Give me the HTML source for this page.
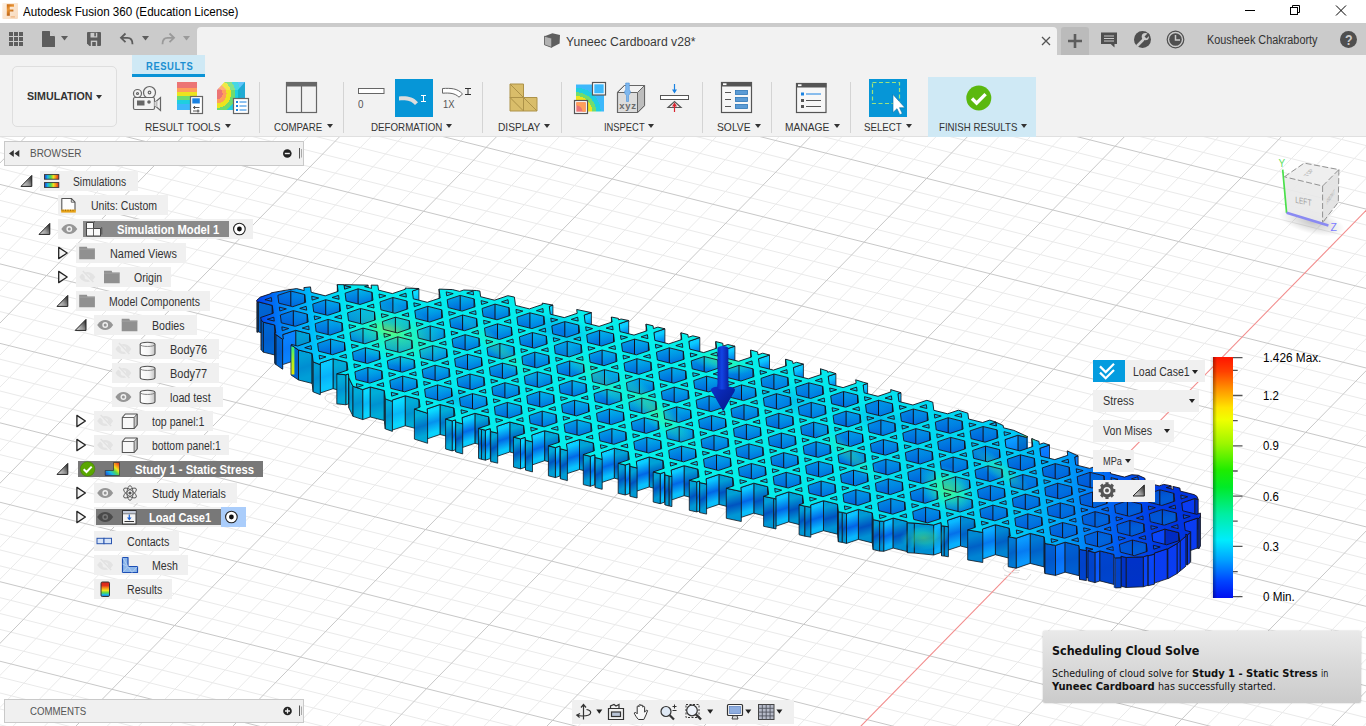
<!DOCTYPE html>
<html lang="en">
<head>
<meta charset="utf-8">
<title>Autodesk Fusion 360 (Education License)</title>
<style>
*{box-sizing:border-box;margin:0;padding:0}
html,body{width:1366px;height:726px;overflow:hidden;background:#fff}
body{font-family:"Liberation Sans",sans-serif;font-size:12px;color:#333;position:relative}
.t{position:absolute;white-space:nowrap;transform-origin:0 50%;display:block}
.abs{position:absolute}
svg{position:absolute;overflow:visible}
.caret{position:absolute;width:0;height:0;border-left:3px solid transparent;border-right:3px solid transparent;border-top:4px solid #333}
.sep{position:absolute;width:1px;background:#d4d4d4;top:82px;height:51px}
</style>
</head>
<body>

<div class="abs" style="left:0;top:0;width:1366px;height:23px;background:#fff"></div>
<svg style="left:2px;top:3px" width="17" height="16" viewBox="0 0 17 16"><defs><linearGradient id="fg" x1="0" y1="0" x2="1" y2="1"><stop offset="0" stop-color="#fdf0e2"/><stop offset="1" stop-color="#f8d9bb"/></linearGradient><linearGradient id="ff" x1="0" y1="0" x2=".4" y2="1"><stop offset="0" stop-color="#c4620c"/><stop offset=".45" stop-color="#eb9838"/><stop offset="1" stop-color="#b4580e"/></linearGradient></defs><rect x=".3" y="0" width="15.700" height="15.900" rx=".8" fill="url(#fg)"/><path d="M4.800 1.300h7.200v2.5H7.800v2.700h3.600v2.100H7.800v4.200H4.800z" fill="url(#ff)"/><path d="M8.600 13.300h4.300v1.200H8.600z" fill="#eeb27c"/></svg>
<span class="t" style="left:23.3px;top:4.2px;font-size:12.5px;line-height:16.5px;color:#000;transform:scaleX(0.9304);">Autodesk Fusion 360 (Education License)</span>
<svg style="left:1240px;top:0" width="126" height="23" viewBox="0 0 126 23" fill="none" stroke="#000" stroke-width="1"><path d="M5 10.5h10"/><rect x="50.5" y="7.5" width="7" height="7"/><path d="M52.5 7.5v-2h7v7h-2"/><path d="M96 5.5l10 10M106 5.5l-10 10"/></svg>
<div class="abs" style="left:0;top:23px;width:1366px;height:32px;background:#cbcbcb"></div>
<div class="abs" style="left:197px;top:26.5px;width:860px;height:29px;background:#f2f2f2;border-radius:4px 4px 0 0"></div>
<div class="abs" style="left:1061px;top:27px;width:28px;height:28px;background:#bbb;border-radius:3px 3px 0 0"></div>
<svg style="left:0;top:23px" width="200" height="32" viewBox="0 0 200 32">
<g fill="#5d5d5d">
<rect x="9" y="9" width="4" height="4"/><rect x="14" y="9" width="4" height="4"/><rect x="19" y="9" width="4" height="4"/>
<rect x="9" y="14" width="4" height="4"/><rect x="14" y="14" width="4" height="4"/><rect x="19" y="14" width="4" height="4"/>
<rect x="9" y="19" width="4" height="4"/><rect x="14" y="19" width="4" height="4"/><rect x="19" y="19" width="4" height="4"/>
<path d="M42 8.5a.5.5 0 0 1 .5-.5h7l5.5 5.5V23.5a.5.5 0 0 1-.5.5h-12a.5.5 0 0 1-.5-.5z"/>
<path d="M61 13h7l-3.5 4.5z"/>
<path d="M87 10a1 1 0 0 1 1-1h12a1 1 0 0 1 1 1v12a1 1 0 0 1-1 1H89.5L87 20.5z"/>
<path d="M142 13h7l-3.5 4.5z"/>
</g>
<path d="M50 8v5h5z" fill="#cbcbcb"/>
<rect x="90.5" y="9.800" width="6.800" height="4.700" fill="#cbcbcb"/><rect x="90.800" y="17.600" width="6.400" height="5.400" fill="#cbcbcb"/><rect x="92.200" y="19" width="3.600" height="4" fill="#5d5d5d"/><rect x="94.300" y="9.800" width="1.600" height="3.5" fill="#5d5d5d"/>
<path d="M125.5 10.5l-4.5 4.300 4.5 4.300M121.300 14.800h6.200c3 0 5 2.200 5 6.400" fill="none" stroke="#5d5d5d" stroke-width="1.800"/>
<path d="M169.5 10.5l4.5 4.300-4.5 4.300M173.700 14.800h-6.200c-3 0-5 2.200-5 6.400" fill="none" stroke="#9a9a9a" stroke-width="1.800"/>
<path d="M183 13h7l-3.5 4.5z" fill="#9a9a9a"/>
</svg>
<svg style="left:543px;top:32px" width="18" height="18" viewBox="543 32 18 18"><path d="M544.5 36.200L552.400 33.200L560 34.900L559.600 43.400L551.700 47.400L544.5 44.800z" fill="#5f5f5f"/><path d="M544.5 36.200L551.700 38.200V47.400L544.5 44.800z" fill="#b2b2b2" stroke="#5f5f5f" stroke-width=".8"/></svg>
<span class="t" style="left:566.0px;top:33.5px;font-size:12.5px;line-height:16.5px;color:#3a3a3a;transform:scaleX(0.9756);">Yuneec Cardboard v28*</span>
<svg style="left:1041px;top:36px" width="10" height="10" viewBox="0 0 10 10"><path d="M1 1l8 8M9 1l-8 8" stroke="#555" stroke-width="1.300" fill="none"/></svg>
<svg style="left:1061px;top:27px" width="28" height="28" viewBox="0 0 28 28"><path d="M14 7v14M7 14h14" stroke="#5d5d5d" stroke-width="2.600" fill="none"/></svg>
<svg style="left:1098px;top:28px" width="264" height="26" viewBox="0 0 264 26">
<path d="M3 4.5h16v11.5h-2.5v3.5l-3.800-3.5H3z" fill="#4f4f4f"/><path d="M6 8h10M6 10.5h10M6 13h10" stroke="#cbcbcb" stroke-width="1"/>
<circle cx="44.5" cy="11.5" r="8.5" fill="#4f4f4f"/><path d="M39.5 17.5l5.5-5.5" stroke="#cbcbcb" stroke-width="2.600" stroke-linecap="round"/><circle cx="47.300" cy="8.700" r="3.600" fill="#cbcbcb"/><path d="M46.5 8.5l3.5-3.5 2 2-3.5 3.5z" fill="#4f4f4f"/>
<circle cx="77.5" cy="11.5" r="8.300" fill="none" stroke="#4f4f4f" stroke-width="1.200"/><circle cx="77.5" cy="11.5" r="6.300" fill="#4f4f4f"/><path d="M77.5 7v5h4.5" stroke="#cbcbcb" stroke-width="1.5" fill="none"/>
<circle cx="250.5" cy="11.5" r="8.5" fill="#4f4f4f"/>
</svg>
<span class="t" style="left:1344.8px;top:31.0px;font-size:14px;line-height:18px;color:#cbcbcb;transform:scaleX(0.8887);font-weight:700;">?</span>
<span class="t" style="left:1207.0px;top:31.5px;font-size:12px;line-height:16px;color:#333;transform:scaleX(0.9052);">Kousheek Chakraborty</span>
<div class="abs" style="left:0;top:55px;width:1366px;height:82px;background:#f2f2f2;border-bottom:1px solid #e0e0e0"></div>
<div class="abs" style="left:12px;top:65.5px;width:105px;height:61px;border:1.5px solid #dedede;border-radius:5px;background:#f3f3f3"></div>
<span class="t" style="left:27.0px;top:88.8px;font-size:11.5px;line-height:15.5px;color:#333;transform:scaleX(0.9265);font-weight:700;">SIMULATION</span>
<div class="caret" style="left:95.5px;top:94.5px"></div>
<div class="abs" style="left:132px;top:55px;width:73px;height:22px;background:#cfe9f5;border-bottom:3.5px solid #0a93d6"></div>
<span class="t" style="left:145.5px;top:58.5px;font-size:11.5px;line-height:15.5px;color:#1b8fd1;transform:scaleX(0.8190);font-weight:700;letter-spacing:0.7px;">RESULTS</span>
<div class="abs" style="left:928px;top:77px;width:108px;height:60px;background:#cfe9f5"></div>
<div class="sep" style="left:258.5px"></div>
<div class="sep" style="left:342.5px"></div>
<div class="sep" style="left:482px"></div>
<div class="sep" style="left:561px"></div>
<div class="sep" style="left:701.5px"></div>
<div class="sep" style="left:770.5px"></div>
<div class="sep" style="left:849.5px"></div>
<span class="t" style="left:145.4px;top:119.7px;font-size:11px;line-height:15px;color:#333;transform:scaleX(0.9158);">RESULT TOOLS</span>
<div class="caret" style="left:224.6px;top:123.900px"></div>
<span class="t" style="left:274.3px;top:119.7px;font-size:11px;line-height:15px;color:#333;transform:scaleX(0.8777);">COMPARE</span>
<div class="caret" style="left:326.6px;top:123.900px"></div>
<span class="t" style="left:370.9px;top:119.7px;font-size:11px;line-height:15px;color:#333;transform:scaleX(0.8874);">DEFORMATION</span>
<div class="caret" style="left:446.2px;top:123.900px"></div>
<span class="t" style="left:498.1px;top:119.7px;font-size:11px;line-height:15px;color:#333;transform:scaleX(0.9266);">DISPLAY</span>
<div class="caret" style="left:544.3px;top:123.900px"></div>
<span class="t" style="left:604.4px;top:119.7px;font-size:11px;line-height:15px;color:#333;transform:scaleX(0.8516);">INSPECT</span>
<div class="caret" style="left:648.4px;top:123.900px"></div>
<span class="t" style="left:717.1px;top:119.7px;font-size:11px;line-height:15px;color:#333;transform:scaleX(0.9367);">SOLVE</span>
<div class="caret" style="left:754.6px;top:123.900px"></div>
<span class="t" style="left:785.4px;top:119.7px;font-size:11px;line-height:15px;color:#333;transform:scaleX(0.9292);">MANAGE</span>
<div class="caret" style="left:833.6px;top:123.900px"></div>
<span class="t" style="left:864.1px;top:119.7px;font-size:11px;line-height:15px;color:#333;transform:scaleX(0.8833);">SELECT</span>
<div class="caret" style="left:905.7px;top:123.900px"></div>
<span class="t" style="left:939.2px;top:119.7px;font-size:11px;line-height:15px;color:#333;transform:scaleX(0.8806);">FINISH RESULTS</span>
<div class="caret" style="left:1021.2px;top:123.900px"></div>
<svg style="left:0;top:0" width="1366" height="140" viewBox="0 0 1366 140">
<defs>
<linearGradient id="rb" x1="0" y1="0" x2="0" y2="1"><stop offset="0" stop-color="#ec7474"/><stop offset=".2" stop-color="#ec7474"/><stop offset=".2" stop-color="#ff9f5a"/><stop offset=".36" stop-color="#ff9f5a"/><stop offset=".36" stop-color="#ede41e"/><stop offset=".5" stop-color="#ede41e"/><stop offset=".5" stop-color="#6fdc6f"/><stop offset=".64" stop-color="#6fdc6f"/><stop offset=".64" stop-color="#1fcfe0"/><stop offset=".8" stop-color="#1fcfe0"/><stop offset=".8" stop-color="#3db8fb"/><stop offset="1" stop-color="#3db8fb"/></linearGradient>
<radialGradient id="rc" cx="0" cy=".42" r="1" gradientUnits="objectBoundingBox"><stop offset="0" stop-color="#ec7474"/><stop offset=".2" stop-color="#ec7474"/><stop offset=".2" stop-color="#ff9f5a"/><stop offset=".34" stop-color="#ff9f5a"/><stop offset=".34" stop-color="#ede41e"/><stop offset=".5" stop-color="#ede41e"/><stop offset=".5" stop-color="#6fdc6f"/><stop offset=".66" stop-color="#6fdc6f"/><stop offset=".66" stop-color="#1fcfe0"/><stop offset=".84" stop-color="#1fcfe0"/><stop offset=".84" stop-color="#3db8fb"/><stop offset="1" stop-color="#3db8fb"/></radialGradient>
<radialGradient id="rd" cx="0" cy="1" r="1.050" gradientUnits="objectBoundingBox"><stop offset="0" stop-color="#ec7474"/><stop offset=".3" stop-color="#ec7474"/><stop offset=".3" stop-color="#ff9f5a"/><stop offset=".42" stop-color="#ff9f5a"/><stop offset=".42" stop-color="#ede41e"/><stop offset=".55" stop-color="#ede41e"/><stop offset=".55" stop-color="#6fdc6f"/><stop offset=".68" stop-color="#6fdc6f"/><stop offset=".68" stop-color="#1fcfe0"/><stop offset=".84" stop-color="#1fcfe0"/><stop offset=".84" stop-color="#3db8fb"/><stop offset="1" stop-color="#3db8fb"/></radialGradient>
</defs>
<g fill="none" stroke="#666" stroke-width="1.200">
<circle cx="137.5" cy="93.5" r="4"/><circle cx="149.5" cy="92.5" r="6"/><circle cx="137.5" cy="93.5" r="1"/><circle cx="149.5" cy="92.5" r="1.300"/>
<rect x="133.5" y="97.5" width="21" height="12" rx="1.5" fill="#f2f2f2"/>
<path d="M154.5 101.5h1.5l4.5-4v13l-4.5-4h-1.5" fill="#f2f2f2"/>
</g><rect x="137" y="100.5" width="7.5" height="5" fill="#666"/><circle cx="149" cy="102" r="1.800" fill="#666"/><rect x="155.5" y="101" width="2" height="6" fill="#bbb"/>
<rect x="177" y="82" width="20" height="28" fill="url(#rb)"/>
<rect x="190.5" y="96.5" width="12" height="17" fill="#fff" stroke="#666" stroke-width="1.200"/>
<rect x="192.300" y="98.300" width="7.5" height="5.200" fill="#1a82e2"/>
<path d="M193 107.5h6.5M193 111h6.5" stroke="#555" stroke-width="1"/><path d="M194.5 106v3M198 109.5v3" stroke="#555" stroke-width="1.200"/>
<path d="M217 90l7.5-8h20.5v28h-28z" fill="url(#rc)"/>
<path d="M217 90l7.5-8h20.5l-7 8z" fill="#fff" fill-opacity=".18"/>
<path d="M238 90l7-8v20l-7 8z" fill="#0a9fb5" fill-opacity=".55"/>
<rect x="233.5" y="98.5" width="15" height="15" fill="#fff" stroke="#666" stroke-width="1.200"/>
<path d="M236 102h2M236 106h2M236 110h2" stroke="#1a82e2" stroke-width="1.800"/><path d="M239.5 102h7M239.5 106h7M239.5 110h7" stroke="#1a82e2" stroke-width="1"/>
<rect x="286.5" y="82.5" width="30" height="30" fill="#f2f2f2" stroke="#666" stroke-width="1.200"/><rect x="286" y="82" width="31" height="4.5" fill="#666"/><path d="M301.5 86v27" stroke="#666" stroke-width="1.200"/>
<rect x="358.5" y="88.5" width="25.5" height="5" fill="#fff" stroke="#666" stroke-width="1"/>
<rect x="395" y="79" width="38" height="38" fill="#0696d7"/>
<path d="M399 96.5c8-.6 14 .2 19 5.800l-3 2.600c-4-4.5-9-5-16-4.5z" fill="#ddd"/>
<path d="M421 95.5h5M421 101.5h5M423.5 95.5v6" stroke="#fff" stroke-width="1" fill="none"/>
<path d="M442.5 88.5c8-.4 15-.4 20 5.5l-3.5 3.200c-4-4-9-4.5-16.5-4z" fill="#fff" stroke="#666" stroke-width="1"/>
<path d="M465 88.5h6M465 94.5h6M468 88.5v6" stroke="#333" stroke-width="1" fill="none"/>
<path d="M510 84h13.5v13.5H537v13.5H510z" fill="#d9bd6a" stroke="#ad9248" stroke-width="1"/>
<path d="M510 97.5h13.5v13.5M510 84l13.5 13.5 13.5 13.5M510 97.5l13.5 13.5" fill="none" stroke="#ad9248" stroke-width="1"/>
<rect x="576" y="84.5" width="28" height="27" fill="url(#rd)"/>
<rect x="592.5" y="82.5" width="13" height="12.5" fill="#fff" stroke="#555" stroke-width="1.200"/><rect x="594.300" y="84.300" width="9.400" height="9" fill="#3db8fb"/>
<rect x="574.5" y="100.5" width="13" height="13" fill="#fff" stroke="#555" stroke-width="1.200"/><rect x="576.300" y="102.300" width="9.400" height="9.400" fill="#ec7474"/><path d="M576.300 105.5c3.5 0 6.200 2.700 6.200 6.200h3.200v-9.400h-9.400z" fill="#ff9f5a"/>
<path d="M617.5 92.5l7-7h20v20l-7 7h-20z" fill="#dcdcdc" stroke="#666" stroke-width="1.200"/><path d="M637.5 92.5l7-7v20l-7 7z" fill="#bdbdbd" stroke="#666" stroke-width="1"/><path d="M617.5 92.5l7-7h20l-7 7z" fill="#f2f2f2" stroke="#666" stroke-width="1"/>
<path d="M625.700 83h3.600v7l1 1v2l-1.800 2.5v6h-2v-6l-1.800-2.5v-2l1-1z" fill="#7fb8ee" stroke="#4a90d8" stroke-width=".6"/>
<text x="619.300" y="109.300" font-family="Liberation Sans,sans-serif" font-size="9.5" font-weight="700" fill="#6a6a6a" letter-spacing=".7">xyz</text>
<rect x="660.5" y="95.5" width="28" height="4" fill="#fff" stroke="#555" stroke-width="1"/>
<path d="M674.5 84v8" stroke="#1a82e2" stroke-width="1.200"/><path d="M672 89.5h5l-2.5 4z" fill="#1a82e2"/>
<path d="M668 107.5l6.5-6 6.5 6z" fill="none" stroke="#555" stroke-width="1.200"/>
<path d="M674.5 112v-8" stroke="#d9232e" stroke-width="1.200"/><path d="M672 106.5h5l-2.5-4z" fill="#d9232e"/>
<rect x="721.5" y="82.5" width="30" height="30" fill="#f7f7f7" stroke="#555" stroke-width="1.200"/><rect x="721" y="82" width="31" height="4.5" fill="#555"/><rect x="723" y="83.300" width="3.5" height="1.800" fill="#fff"/>
<path d="M725 92.5h6M725 99.5h6M725 106.5h6" stroke="#555" stroke-width="1"/>
<rect x="735.5" y="90.5" width="12" height="4" fill="#5b9bd5" stroke="#2e75b6" stroke-width=".8"/><rect x="735.5" y="97.5" width="12" height="4" fill="#5b9bd5" stroke="#2e75b6" stroke-width=".8"/><rect x="735.5" y="104.5" width="12" height="4" fill="#5b9bd5" stroke="#2e75b6" stroke-width=".8"/>
<rect x="796.5" y="83.5" width="29.5" height="29" fill="#f7f7f7" stroke="#555" stroke-width="1.200"/><rect x="796" y="83" width="30.5" height="4.5" fill="#555"/><rect x="798" y="84.300" width="3.5" height="1.800" fill="#fff"/>
<rect x="801" y="92.5" width="3" height="3" fill="#1a82e2"/><rect x="801" y="99" width="3" height="3" fill="#555"/><rect x="801" y="105" width="3" height="3" fill="#555"/>
<path d="M806 94h15" stroke="#1a82e2" stroke-width="1"/><path d="M806 100.5h15M806 106.5h15" stroke="#555" stroke-width="1"/>
<rect x="869" y="79" width="38" height="38" fill="#0696d7"/><rect x="872.5" y="82.5" width="27" height="21" fill="none" stroke="#9ee37d" stroke-width="1.200" stroke-dasharray="4 2.5"/>
<path d="M893 94.5v18l4-3.800 2.800 6 2.5-1.200-2.800-5.800h5.5z" fill="#fff" stroke="#0a6fa3" stroke-width=".6"/>
<circle cx="978.800" cy="98" r="12.5" fill="#5bb80f"/><path d="M972 98.5l4.600 4.600 9-9" fill="none" stroke="#fff" stroke-width="3.400"/>
</svg>
<span class="t" style="left:358.0px;top:97.0px;font-size:10.5px;line-height:14.5px;color:#555;transform:scaleX(0.9418);">0</span>
<span class="t" style="left:442.5px;top:97.0px;font-size:10.5px;line-height:14.5px;color:#555;transform:scaleX(0.8954);">1X</span>
<svg style="left:0;top:137px;overflow:hidden" width="1366" height="589" viewBox="0 137 1366 589">
<rect x="0" y="137" width="1366" height="589" fill="#fff"/>
<path d="M215.7 -857.4L2987.3 -162.8M203.2 -844.7L2974.8 -150.0M190.7 -831.9L2962.3 -137.3M178.2 -819.2L2949.8 -124.5M153.2 -793.7L2924.9 -99.0M140.7 -780.9L2912.4 -86.3M128.2 -768.2L2899.9 -73.5M115.7 -755.4L2887.4 -60.8M90.7 -730.0L2862.4 -35.3M78.2 -717.2L2849.9 -22.5M65.7 -704.5L2837.5 -9.8M53.2 -691.7L2825.0 3.0M28.2 -666.2L2800.0 28.5M15.7 -653.5L2787.5 41.2M3.2 -640.7L2775.0 54.0M-9.3 -628.0L2762.5 66.7M-34.3 -602.5L2737.6 92.2M-46.8 -589.8L2725.1 105.0M-59.3 -577.0L2712.6 117.7M-71.8 -564.3L2700.1 130.5M-96.8 -538.8L2675.1 156.0M-109.3 -526.0L2662.7 168.8M-121.8 -513.3L2650.2 181.5M-134.3 -500.5L2637.7 194.3M-159.3 -475.0L2612.7 219.8M-171.8 -462.3L2600.2 232.5M-184.3 -449.5L2587.7 245.3M-196.8 -436.8L2575.2 258.0M-221.8 -411.3L2550.3 283.5M-234.3 -398.5L2537.8 296.3M-246.8 -385.8L2525.3 309.1M-259.3 -373.1L2512.8 321.8M-284.4 -347.6L2487.8 347.3M-296.9 -334.8L2475.3 360.1M-309.4 -322.1L2462.8 372.8M-321.9 -309.3L2450.3 385.6M-346.9 -283.8L2425.4 411.1M-359.4 -271.1L2412.9 423.9M-371.9 -258.3L2400.4 436.6M-384.4 -245.6L2387.9 449.4M-409.4 -220.1L2362.9 474.9M-421.9 -207.3L2350.4 487.6M-434.4 -194.6L2337.9 500.4M-446.9 -181.8L2325.4 513.2M-471.9 -156.3L2300.5 538.7M-484.4 -143.5L2288.0 551.4M-496.9 -130.8L2275.5 564.2M-509.4 -118.0L2263.0 576.9M-534.5 -92.5L2238.0 602.5M-547.0 -79.8L2225.5 615.2M-559.5 -67.0L2213.0 628.0M-572.0 -54.3L2200.5 640.7M-597.0 -28.8L2175.5 666.3M-609.5 -16.0L2163.0 679.0M-622.0 -3.3L2150.5 691.8M-634.5 9.5L2138.1 704.5M-659.5 35.0L2113.1 730.1M-672.0 47.7L2100.6 742.8M-684.5 60.5L2088.1 755.6M-697.1 73.2L2075.6 768.3M-722.1 98.8L2050.6 793.9M-734.6 111.5L2038.1 806.6M-747.1 124.3L2025.6 819.4M-759.6 137.0L2013.1 832.1M-784.6 162.5L1988.1 857.7M-797.1 175.3L1975.6 870.4M-809.6 188.0L1963.1 883.2M-822.1 200.8L1950.6 896.0M-847.2 226.3L1925.6 921.5M-859.7 239.1L1913.1 934.2M-872.2 251.8L1900.6 947.0M-884.7 264.6L1888.1 959.8M-909.7 290.1L1863.2 985.3M-922.2 302.8L1850.7 998.1M-934.7 315.6L1838.2 1010.8M-947.3 328.4L1825.7 1023.6M-972.3 353.9L1800.7 1049.1M-984.8 366.6L1788.2 1061.9M-997.3 379.4L1775.7 1074.6M-1009.8 392.1L1763.2 1087.4M-1034.8 417.7L1738.2 1112.9M-1047.3 430.4L1725.7 1125.7M-1059.9 443.2L1713.2 1138.5M-1072.4 455.9L1700.7 1151.2M-1097.4 481.5L1675.7 1176.8M-1109.9 494.2L1663.2 1189.5M-1122.4 507.0L1650.7 1202.3M-1134.9 519.7L1638.2 1215.1M-1160.0 545.3L1613.2 1240.6M-1172.5 558.0L1600.7 1253.3M-1185.0 570.8L1588.2 1266.1M-1197.5 583.5L1575.7 1278.9M-1222.5 609.1L1550.7 1304.4M-1235.1 621.8L1538.2 1317.2M-1247.6 634.6L1525.7 1330.0M-1260.1 647.3L1513.2 1342.7M-1285.1 672.9L1488.2 1368.3M-1297.6 685.6L1475.7 1381.0M-1310.1 698.4L1463.2 1393.8M-1322.7 711.1L1450.7 1406.6M-1347.7 736.7L1425.7 1432.1M-1360.2 749.4L1413.2 1444.9M-1372.7 762.2L1400.7 1457.6M-1385.2 775.0L1388.2 1470.4M-1410.3 800.5L1363.2 1495.9M-1422.8 813.2L1350.7 1508.7M-1435.3 826.0L1338.2 1521.5M-1447.8 838.8L1325.7 1534.2M-1472.9 864.3L1300.6 1559.8M-1485.4 877.1L1288.1 1572.6M-1497.9 889.8L1275.6 1585.3M-1510.4 902.6L1263.1 1598.1M380.3 -673.2L-1120.5 857.2M405.5 -666.9L-1095.3 863.6M430.7 -660.6L-1070.0 869.9M455.9 -654.3L-1044.8 876.2M506.3 -641.7L-994.4 888.9M531.5 -635.4L-969.2 895.2M556.7 -629.0L-944.0 901.5M581.9 -622.7L-918.8 907.8M632.3 -610.1L-868.4 920.5M657.5 -603.8L-843.2 926.8M682.6 -597.5L-817.9 933.1M707.8 -591.2L-792.7 939.4M758.2 -578.5L-742.3 952.1M783.4 -572.2L-717.1 958.4M808.6 -565.9L-691.9 964.7M833.8 -559.6L-666.7 971.0M884.2 -547.0L-616.3 983.7M909.4 -540.6L-591.1 990.0M934.6 -534.3L-565.8 996.3M959.8 -528.0L-540.6 1002.6M1010.2 -515.4L-490.2 1015.3M1035.4 -509.1L-465.0 1021.6M1060.6 -502.8L-439.8 1027.9M1085.8 -496.4L-414.6 1034.3M1136.2 -483.8L-364.2 1046.9M1161.4 -477.5L-338.9 1053.2M1186.6 -471.2L-313.7 1059.5M1211.8 -464.9L-288.5 1065.9M1262.2 -452.2L-238.1 1078.5M1287.3 -445.9L-212.9 1084.8M1312.5 -439.6L-187.7 1091.2M1337.7 -433.3L-162.5 1097.5M1388.1 -420.7L-112.0 1110.1M1413.3 -414.3L-86.8 1116.4M1438.5 -408.0L-61.6 1122.8M1463.7 -401.7L-36.4 1129.1M1514.1 -389.1L14.0 1141.7M1539.3 -382.8L39.2 1148.1M1564.5 -376.5L64.5 1154.4M1589.7 -370.1L89.7 1160.7M1640.1 -357.5L140.1 1173.3M1665.3 -351.2L165.3 1179.7M1690.5 -344.9L190.5 1186.0M1715.7 -338.6L215.7 1192.3M1766.1 -325.9L266.2 1205.0M1791.3 -319.6L291.4 1211.3M1816.5 -313.3L316.6 1217.6M1841.7 -307.0L341.8 1223.9M1892.1 -294.4L392.2 1236.6M1917.3 -288.0L417.5 1242.9M1942.5 -281.7L442.7 1249.2M1967.7 -275.4L467.9 1255.5M2018.1 -262.8L518.3 1268.2M2043.3 -256.5L543.5 1274.5M2068.5 -250.1L568.7 1280.8M2093.7 -243.8L594.0 1287.2M2144.1 -231.2L644.4 1299.8M2169.3 -224.9L669.6 1306.1M2194.5 -218.6L694.8 1312.4M2219.7 -212.2L720.0 1318.8M2270.1 -199.6L770.5 1331.4M2295.3 -193.3L795.7 1337.7M2320.5 -187.0L820.9 1344.1M2345.7 -180.7L846.1 1350.4M2396.1 -168.0L896.5 1363.0M2421.3 -161.7L921.8 1369.3M2446.5 -155.4L947.0 1375.7M2471.7 -149.1L972.2 1382.0M2522.1 -136.5L1022.6 1394.6M2547.3 -130.1L1047.8 1401.0M2572.5 -123.8L1073.1 1407.3M2597.7 -117.5L1098.3 1413.6M2648.1 -104.9L1148.7 1426.3M2673.3 -98.6L1173.9 1432.6M2698.5 -92.2L1199.1 1438.9M2723.7 -85.9L1224.4 1445.2M2774.1 -73.3L1274.8 1457.9M2799.3 -67.0L1300.0 1464.2M2824.5 -60.7L1325.2 1470.5M2849.7 -54.3L1350.4 1476.8M2900.1 -41.7L1400.9 1489.5M2925.3 -35.4L1426.1 1495.8M2950.5 -29.1L1451.3 1502.1M2975.7 -22.8L1476.5 1508.5M3026.1 -10.1L1527.0 1521.1M3051.3 -3.8L1552.2 1527.4M3076.5 2.5L1577.4 1533.8M3101.7 8.8L1602.6 1540.1M3152.1 21.5L1653.1 1552.7M3177.3 27.8L1678.3 1559.1M3202.5 34.1L1703.5 1565.4M3227.8 40.4L1728.7 1571.7M3278.2 53.0L1779.2 1584.3M3303.4 59.4L1804.4 1590.7M3328.6 65.7L1829.6 1597.0M3353.8 72.0L1854.8 1603.3" stroke="#eaeaea" stroke-width="1" fill="none"/>
<path d="M228.2 -870.1L2999.8 -175.5M165.7 -806.4L2937.3 -111.8M103.2 -742.7L2874.9 -48.0M40.7 -679.0L2812.5 15.7M-21.8 -615.3L2750.1 79.5M-84.3 -551.5L2687.6 143.3M-146.8 -487.8L2625.2 207.0M-209.3 -424.0L2562.7 270.8M-271.8 -360.3L2500.3 334.6M-334.4 -296.6L2437.9 398.3M-396.9 -232.8L2375.4 462.1M-459.4 -169.1L2312.9 525.9M-521.9 -105.3L2250.5 589.7M-584.5 -41.5L2188.0 653.5M-647.0 22.2L2125.6 717.3M-709.6 86.0L2063.1 781.1M-772.1 149.8L2000.6 844.9M-834.7 213.6L1938.1 908.7M-897.2 277.3L1875.7 972.5M-959.8 341.1L1813.2 1036.3M-1022.3 404.9L1750.7 1100.2M-1084.9 468.7L1688.2 1164.0M-1147.5 532.5L1625.7 1227.8M-1210.0 596.3L1563.2 1291.6M-1272.6 660.1L1500.7 1355.5M-1335.2 723.9L1438.2 1419.3M-1397.8 787.7L1375.7 1483.2M-1460.3 851.5L1313.1 1547.0M355.1 -679.6L-1145.7 850.9M481.1 -648.0L-1019.6 882.5M607.1 -616.4L-893.6 914.1M733.0 -584.8L-767.5 945.8M859.0 -553.3L-641.5 977.4M985.0 -521.7L-515.4 1009.0M1111.0 -490.1L-389.4 1040.6M1237.0 -458.5L-263.3 1072.2M1362.9 -427.0L-137.2 1103.8M1488.9 -395.4L-11.2 1135.4M1614.9 -363.8L114.9 1167.0M1740.9 -332.2L241.0 1198.6M1992.9 -269.1L493.1 1261.9M2118.9 -237.5L619.2 1293.5M2244.9 -205.9L745.2 1325.1M2370.9 -174.4L871.3 1356.7M2496.9 -142.8L997.4 1388.3M2622.9 -111.2L1123.5 1419.9M2748.9 -79.6L1249.6 1451.6M2874.9 -48.0L1375.7 1483.2M3000.9 -16.4L1501.8 1514.8M3126.9 15.1L1627.8 1546.4M3253.0 46.7L1753.9 1578.0" stroke="#c8c8c8" stroke-width="1" fill="none"/>
<path d="M1866.9 -300.7L367.0 1230.2" stroke="#f28c8c" stroke-width="1.100" fill="none"/>
<g fill="none" stroke="#dcdcdc" stroke-width="1"><path d="M341 405c-9-1-16-3.5-16-7s6-5.5 14-5.5M343 400c-5-.5-8-1.5-8-3s2.5-2.300 6-2.300M333 405l6 3"/>
<path d="M1010 563c-6 1.5-8 4-6 6.5s8 4 15 3M1016 566c-3 .8-4 2-3 3.200s4 1.5 7 1.200M1004 575l22 5 5-6"/></g>
<defs>
<linearGradient id="mTop" gradientUnits="userSpaceOnUse" x1="257" y1="0" x2="1200" y2="0"><stop offset="0.000" stop-color="#003cec"/><stop offset="0.019" stop-color="#0070f6"/><stop offset="0.040" stop-color="#00a0fa"/><stop offset="0.067" stop-color="#00cdfa"/><stop offset="0.101" stop-color="#04eaf0"/><stop offset="0.491" stop-color="#06f0ea"/><stop offset="0.639" stop-color="#04e6ee"/><stop offset="0.745" stop-color="#02d6f2"/><stop offset="0.809" stop-color="#00c8f6"/><stop offset="0.852" stop-color="#00a8fa"/><stop offset="0.885" stop-color="#007cf8"/><stop offset="0.917" stop-color="#0056f0"/><stop offset="0.952" stop-color="#003ce6"/><stop offset="1.000" stop-color="#002edc"/></linearGradient>
<linearGradient id="mHole" gradientUnits="userSpaceOnUse" x1="257" y1="0" x2="1200" y2="0"><stop offset="0.000" stop-color="#0038d7"/><stop offset="0.030" stop-color="#0078e8"/><stop offset="0.072" stop-color="#00b9ee"/><stop offset="0.109" stop-color="#00cdec"/><stop offset="0.385" stop-color="#00c8ec"/><stop offset="0.533" stop-color="#00b6ea"/><stop offset="0.682" stop-color="#009ce6"/><stop offset="0.799" stop-color="#0086e4"/><stop offset="0.846" stop-color="#006ce0"/><stop offset="0.889" stop-color="#004ed8"/><stop offset="0.926" stop-color="#0034cc"/><stop offset="1.000" stop-color="#0026bc"/></linearGradient>
<linearGradient id="mFace" x1="0" y1="0" x2=".3" y2="1"><stop offset="0" stop-color="#0078e2" stop-opacity=".2"/><stop offset="1" stop-color="#0058d8" stop-opacity=".62"/></linearGradient><linearGradient id="mFaceR" x1="0" y1="0" x2=".3" y2="1"><stop offset="0" stop-color="#00c0f0" stop-opacity="0"/><stop offset="1" stop-color="#0064de" stop-opacity=".5"/></linearGradient>
<linearGradient id="wa0" x1="0" y1="0" x2=".12" y2="1"><stop offset=".22" stop-color="#0065d2"/><stop offset=".56" stop-color="#005ece"/><stop offset=".86" stop-color="#0064d1"/></linearGradient>
<linearGradient id="wb0" x1="0" y1="0" x2=".12" y2="1"><stop offset=".22" stop-color="#0a83ff"/><stop offset=".56" stop-color="#0879f9"/><stop offset=".86" stop-color="#0a82fe"/></linearGradient>
<linearGradient id="wa1" x1="0" y1="0" x2=".12" y2="1"><stop offset=".22" stop-color="#00a0d7"/><stop offset=".56" stop-color="#008dd1"/><stop offset=".86" stop-color="#009ed7"/></linearGradient>
<linearGradient id="wb1" x1="0" y1="0" x2=".12" y2="1"><stop offset=".22" stop-color="#0acaff"/><stop offset=".56" stop-color="#08b1f9"/><stop offset=".86" stop-color="#0ac7fe"/></linearGradient>
<linearGradient id="wa2" x1="0" y1="0" x2=".12" y2="1"><stop offset=".22" stop-color="#00acd8"/><stop offset=".56" stop-color="#0093d1"/><stop offset=".86" stop-color="#00a9d7"/></linearGradient>
<linearGradient id="wb2" x1="0" y1="0" x2=".12" y2="1"><stop offset=".22" stop-color="#0ad9ff"/><stop offset=".56" stop-color="#08b8f8"/><stop offset=".86" stop-color="#0ad5fe"/></linearGradient>
<linearGradient id="wa3" x1="0" y1="0" x2=".12" y2="1"><stop offset=".22" stop-color="#00aed8"/><stop offset=".56" stop-color="#0092d0"/><stop offset=".86" stop-color="#00abd7"/></linearGradient>
<linearGradient id="wb3" x1="0" y1="0" x2=".12" y2="1"><stop offset=".22" stop-color="#0adbff"/><stop offset=".56" stop-color="#08b6f7"/><stop offset=".86" stop-color="#0ad7fe"/></linearGradient>
<linearGradient id="wa4" x1="0" y1="0" x2=".12" y2="1"><stop offset=".22" stop-color="#00afd8"/><stop offset=".56" stop-color="#0075c8"/><stop offset=".86" stop-color="#00a8d6"/></linearGradient>
<linearGradient id="wb4" x1="0" y1="0" x2=".12" y2="1"><stop offset=".22" stop-color="#0adcff"/><stop offset=".56" stop-color="#0592ee"/><stop offset=".86" stop-color="#09d3fd"/></linearGradient>
<linearGradient id="wa5" x1="0" y1="0" x2=".12" y2="1"><stop offset=".22" stop-color="#00acd7"/><stop offset=".56" stop-color="#0056c0"/><stop offset=".86" stop-color="#00a2d5"/></linearGradient>
<linearGradient id="wb5" x1="0" y1="0" x2=".12" y2="1"><stop offset=".22" stop-color="#0ad8ff"/><stop offset=".56" stop-color="#026ae6"/><stop offset=".86" stop-color="#09cbfc"/></linearGradient>
<linearGradient id="wa6" x1="0" y1="0" x2=".12" y2="1"><stop offset=".22" stop-color="#00a9d7"/><stop offset=".56" stop-color="#0056c0"/><stop offset=".86" stop-color="#009fd4"/></linearGradient>
<linearGradient id="wb6" x1="0" y1="0" x2=".12" y2="1"><stop offset=".22" stop-color="#0ad5ff"/><stop offset=".56" stop-color="#0269e6"/><stop offset=".86" stop-color="#09c8fc"/></linearGradient>
<linearGradient id="wa7" x1="0" y1="0" x2=".12" y2="1"><stop offset=".22" stop-color="#00a7d7"/><stop offset=".56" stop-color="#0055c0"/><stop offset=".86" stop-color="#009dd4"/></linearGradient>
<linearGradient id="wb7" x1="0" y1="0" x2=".12" y2="1"><stop offset=".22" stop-color="#0ad2ff"/><stop offset=".56" stop-color="#0268e6"/><stop offset=".86" stop-color="#09c6fc"/></linearGradient>
<linearGradient id="wa8" x1="0" y1="0" x2=".12" y2="1"><stop offset=".22" stop-color="#00a4d6"/><stop offset=".56" stop-color="#0054c0"/><stop offset=".86" stop-color="#009bd4"/></linearGradient>
<linearGradient id="wb8" x1="0" y1="0" x2=".12" y2="1"><stop offset=".22" stop-color="#0acfff"/><stop offset=".56" stop-color="#0268e6"/><stop offset=".86" stop-color="#09c3fc"/></linearGradient>
<linearGradient id="wa9" x1="0" y1="0" x2=".12" y2="1"><stop offset=".22" stop-color="#00a3d6"/><stop offset=".56" stop-color="#0054c0"/><stop offset=".86" stop-color="#0099d4"/></linearGradient>
<linearGradient id="wb9" x1="0" y1="0" x2=".12" y2="1"><stop offset=".22" stop-color="#0aceff"/><stop offset=".56" stop-color="#0267e6"/><stop offset=".86" stop-color="#09c1fc"/></linearGradient>
<linearGradient id="wa10" x1="0" y1="0" x2=".12" y2="1"><stop offset=".22" stop-color="#00a2d6"/><stop offset=".56" stop-color="#0054c0"/><stop offset=".86" stop-color="#0099d4"/></linearGradient>
<linearGradient id="wb10" x1="0" y1="0" x2=".12" y2="1"><stop offset=".22" stop-color="#0accff"/><stop offset=".56" stop-color="#0267e6"/><stop offset=".86" stop-color="#09c0fc"/></linearGradient>
<linearGradient id="wa11" x1="0" y1="0" x2=".12" y2="1"><stop offset=".22" stop-color="#00a1d6"/><stop offset=".56" stop-color="#0053c0"/><stop offset=".86" stop-color="#0098d4"/></linearGradient>
<linearGradient id="wb11" x1="0" y1="0" x2=".12" y2="1"><stop offset=".22" stop-color="#0acbff"/><stop offset=".56" stop-color="#0267e6"/><stop offset=".86" stop-color="#09bffc"/></linearGradient>
<linearGradient id="wa12" x1="0" y1="0" x2=".12" y2="1"><stop offset=".22" stop-color="#00a0d6"/><stop offset=".56" stop-color="#0053c0"/><stop offset=".86" stop-color="#0097d4"/></linearGradient>
<linearGradient id="wb12" x1="0" y1="0" x2=".12" y2="1"><stop offset=".22" stop-color="#0acaff"/><stop offset=".56" stop-color="#0266e6"/><stop offset=".86" stop-color="#09befc"/></linearGradient>
<linearGradient id="wa13" x1="0" y1="0" x2=".12" y2="1"><stop offset=".22" stop-color="#009fd6"/><stop offset=".56" stop-color="#0053c0"/><stop offset=".86" stop-color="#0096d4"/></linearGradient>
<linearGradient id="wb13" x1="0" y1="0" x2=".12" y2="1"><stop offset=".22" stop-color="#0ac8ff"/><stop offset=".56" stop-color="#0266e6"/><stop offset=".86" stop-color="#09bdfc"/></linearGradient>
<linearGradient id="wa14" x1="0" y1="0" x2=".12" y2="1"><stop offset=".22" stop-color="#009dd6"/><stop offset=".56" stop-color="#0052c0"/><stop offset=".86" stop-color="#0094d3"/></linearGradient>
<linearGradient id="wb14" x1="0" y1="0" x2=".12" y2="1"><stop offset=".22" stop-color="#0ac6ff"/><stop offset=".56" stop-color="#0265e6"/><stop offset=".86" stop-color="#09bafc"/></linearGradient>
<linearGradient id="wa15" x1="0" y1="0" x2=".12" y2="1"><stop offset=".22" stop-color="#009ad5"/><stop offset=".56" stop-color="#0052c0"/><stop offset=".86" stop-color="#0091d3"/></linearGradient>
<linearGradient id="wb15" x1="0" y1="0" x2=".12" y2="1"><stop offset=".22" stop-color="#0ac3ff"/><stop offset=".56" stop-color="#0264e6"/><stop offset=".86" stop-color="#09b7fc"/></linearGradient>
<linearGradient id="wa16" x1="0" y1="0" x2=".12" y2="1"><stop offset=".22" stop-color="#0097d5"/><stop offset=".56" stop-color="#0052c0"/><stop offset=".86" stop-color="#008fd2"/></linearGradient>
<linearGradient id="wb16" x1="0" y1="0" x2=".12" y2="1"><stop offset=".22" stop-color="#0abfff"/><stop offset=".56" stop-color="#0365e6"/><stop offset=".86" stop-color="#09b5fc"/></linearGradient>
<linearGradient id="wa17" x1="0" y1="0" x2=".12" y2="1"><stop offset=".22" stop-color="#0092d4"/><stop offset=".56" stop-color="#005bc3"/><stop offset=".86" stop-color="#008bd2"/></linearGradient>
<linearGradient id="wb17" x1="0" y1="0" x2=".12" y2="1"><stop offset=".22" stop-color="#0ab9ff"/><stop offset=".56" stop-color="#0470ea"/><stop offset=".86" stop-color="#09b0fc"/></linearGradient>
<linearGradient id="wa18" x1="0" y1="0" x2=".12" y2="1"><stop offset=".22" stop-color="#0089d4"/><stop offset=".56" stop-color="#0060c6"/><stop offset=".86" stop-color="#0084d3"/></linearGradient>
<linearGradient id="wb18" x1="0" y1="0" x2=".12" y2="1"><stop offset=".22" stop-color="#0aaeff"/><stop offset=".56" stop-color="#0578ee"/><stop offset=".86" stop-color="#09a7fd"/></linearGradient>
<linearGradient id="wa19" x1="0" y1="0" x2=".12" y2="1"><stop offset=".22" stop-color="#007ad4"/><stop offset=".56" stop-color="#0061c9"/><stop offset=".86" stop-color="#0077d3"/></linearGradient>
<linearGradient id="wb19" x1="0" y1="0" x2=".12" y2="1"><stop offset=".22" stop-color="#0a9cff"/><stop offset=".56" stop-color="#067bf2"/><stop offset=".86" stop-color="#0a98fd"/></linearGradient>
<linearGradient id="wa20" x1="0" y1="0" x2=".12" y2="1"><stop offset=".22" stop-color="#005fd2"/><stop offset=".56" stop-color="#0056cc"/><stop offset=".86" stop-color="#005ed1"/></linearGradient>
<linearGradient id="wb20" x1="0" y1="0" x2=".12" y2="1"><stop offset=".22" stop-color="#0a7cff"/><stop offset=".56" stop-color="#086ff7"/><stop offset=".86" stop-color="#0a7bfe"/></linearGradient>
<linearGradient id="wa21" x1="0" y1="0" x2=".12" y2="1"><stop offset=".22" stop-color="#0044ce"/><stop offset=".56" stop-color="#0042ca"/><stop offset=".86" stop-color="#0044cd"/></linearGradient>
<linearGradient id="wb21" x1="0" y1="0" x2=".12" y2="1"><stop offset=".22" stop-color="#0a5cff"/><stop offset=".56" stop-color="#0857f8"/><stop offset=".86" stop-color="#0a5bfe"/></linearGradient>
<linearGradient id="wa22" x1="0" y1="0" x2=".12" y2="1"><stop offset=".22" stop-color="#0032c8"/><stop offset=".56" stop-color="#0033c5"/><stop offset=".86" stop-color="#0032c8"/></linearGradient>
<linearGradient id="wb22" x1="0" y1="0" x2=".12" y2="1"><stop offset=".22" stop-color="#0a46fa"/><stop offset=".56" stop-color="#0846f5"/><stop offset=".86" stop-color="#0a46f9"/></linearGradient>
<linearGradient id="wa23" x1="0" y1="0" x2=".12" y2="1"><stop offset=".22" stop-color="#002ac2"/><stop offset=".56" stop-color="#002cc1"/><stop offset=".86" stop-color="#002ac2"/></linearGradient>
<linearGradient id="wb23" x1="0" y1="0" x2=".12" y2="1"><stop offset=".22" stop-color="#0a3cf3"/><stop offset=".56" stop-color="#093df0"/><stop offset=".86" stop-color="#0a3cf2"/></linearGradient>
<radialGradient id="bg"><stop offset="0" stop-color="#5cff6a"/><stop offset=".45" stop-color="#30ffa0" stop-opacity=".8"/><stop offset="1" stop-color="#10ffd8" stop-opacity="0"/></radialGradient>
<radialGradient id="by"><stop offset="0" stop-color="#e8ff20"/><stop offset=".5" stop-color="#70ff50" stop-opacity=".8"/><stop offset="1" stop-color="#10ffd8" stop-opacity="0"/></radialGradient>
<radialGradient id="bb"><stop offset="0" stop-color="#0070e8"/><stop offset=".5" stop-color="#0090f0" stop-opacity=".7"/><stop offset="1" stop-color="#00c0f8" stop-opacity="0"/></radialGradient>
<linearGradient id="wy" x1="0" y1="0" x2="0" y2="1"><stop offset="0" stop-color="#30f080"/><stop offset=".5" stop-color="#a8f020"/><stop offset="1" stop-color="#e8e800"/></linearGradient>
</defs>
<g stroke-linejoin="round">
<path d="M368.2 285.4L364.6 286.6L364.6 316.6L368.2 315.4Z" fill="url(#wb2)" stroke="#10141c" stroke-width=".8"/>
<path d="M351.1 287.1L344.2 285.3L344.2 315.3L351.1 317.1Z" fill="url(#wa2)" stroke="#10141c" stroke-width=".8"/>
<path d="M371.5 288.4V318.4" stroke="#10141c" stroke-width=".9"/>
<path d="M405.4 289.2V319.2" stroke="#10141c" stroke-width=".9"/>
<path d="M304.2 290.5V320.5" stroke="#10141c" stroke-width=".9"/>
<path d="M418.9 288.8L412.4 291.0L412.4 321.0L418.9 318.8Z" fill="url(#wb4)" stroke="#10141c" stroke-width=".8"/>
<path d="M338.1 291.4L337.3 284.6L337.3 314.6L338.1 321.4Z" fill="url(#wa2)" stroke="#10141c" stroke-width=".8"/>
<path d="M270.9 293.6V323.6" stroke="#10141c" stroke-width=".9"/>
<path d="M440.2 298.0L439.1 289.1L439.1 319.1L440.2 328.0Z" fill="url(#wa4)" stroke="#10141c" stroke-width=".8"/>
<path d="M258.4 301.9L257.1 302.3L257.1 332.3L258.4 331.9Z" fill="url(#wb0)" stroke="#10141c" stroke-width=".8"/>
<path d="M257.1 302.3V332.3" stroke="#10141c" stroke-width=".9"/>
<path d="M542.4 304.5V334.5" stroke="#10141c" stroke-width=".9"/>
<path d="M272.3 305.4L258.4 301.9L258.4 331.9L272.3 335.4Z" fill="url(#wa0)" stroke="#10141c" stroke-width=".8"/>
<path d="M552.9 305.1L549.3 306.3L549.3 336.3L552.9 335.1Z" fill="url(#wb7)" stroke="#10141c" stroke-width=".8"/>
<path d="M273.3 313.2L272.3 305.4L272.3 335.4L273.3 343.2Z" fill="url(#wa0)" stroke="#10141c" stroke-width=".8"/>
<path d="M577.2 313.3V343.3" stroke="#10141c" stroke-width=".9"/>
<path d="M591.4 312.6L584.2 315.0L584.2 345.0L591.4 342.6Z" fill="url(#wb8)" stroke="#10141c" stroke-width=".8"/>
<path d="M261.2 320.0V350.0" stroke="#10141c" stroke-width=".9"/>
<path d="M612.1 322.0L611.4 317.0L611.4 347.0L612.1 352.0Z" fill="url(#wa9)" stroke="#10141c" stroke-width=".8"/>
<path d="M263.4 322.2L261.2 320.0L261.2 350.0L263.4 352.2Z" fill="url(#wa0)" stroke="#10141c" stroke-width=".8"/>
<path d="M628.7 320.5L619.1 323.8L619.1 353.8L628.7 350.5Z" fill="url(#wb9)" stroke="#10141c" stroke-width=".8"/>
<path d="M274.8 325.0L263.4 322.2L263.4 352.2L274.8 355.0Z" fill="url(#wa0)" stroke="#10141c" stroke-width=".8"/>
<path d="M646.9 330.8L646.1 324.1L646.1 354.1L646.9 360.8Z" fill="url(#wa9)" stroke="#10141c" stroke-width=".8"/>
<path d="M664.9 328.8L653.9 332.5L653.9 362.5L664.9 358.8Z" fill="url(#wb10)" stroke="#10141c" stroke-width=".8"/>
<path d="M275.8 332.9L274.8 325.0L274.8 355.0L275.8 362.9Z" fill="url(#wa0)" stroke="#10141c" stroke-width=".8"/>
<path d="M309.6 333.8L295.7 330.3L295.7 360.3L309.6 363.8Z" fill="url(#wa1)" stroke="#10141c" stroke-width=".8"/>
<path d="M276.0 334.6L274.6 333.3L274.6 363.3L276.0 364.6Z" fill="url(#wa0)" stroke="#10141c" stroke-width=".8"/>
<path d="M295.7 330.3L282.7 334.6L282.7 364.6L295.7 360.3Z" fill="url(#wb0)" stroke="#10141c" stroke-width=".8"/>
<path d="M283.3 339.0L282.5 339.2L282.5 369.2L283.3 369.0Z" fill="url(#wb0)" stroke="none" stroke-width=".8"/>
<path d="M282.5 339.2L276.0 334.6L276.0 364.6L282.5 369.2Z" fill="url(#wa0)" stroke="#10141c" stroke-width=".8"/>
<path d="M681.8 339.5L681.0 332.8L681.0 362.8L681.8 369.5Z" fill="url(#wa10)" stroke="#10141c" stroke-width=".8"/>
<path d="M699.8 337.5L688.8 341.3L688.8 371.3L699.8 367.5Z" fill="url(#wb11)" stroke="#10141c" stroke-width=".8"/>
<path d="M310.6 341.6L309.6 333.8L309.6 363.8L310.6 371.6Z" fill="url(#wa1)" stroke="#10141c" stroke-width=".8"/>
<path d="M716.7 348.2L715.8 341.6L715.8 371.6L716.7 378.2Z" fill="url(#wa11)" stroke="#10141c" stroke-width=".8"/>
<path d="M734.9 346.2L723.6 350.0L723.6 380.0L734.9 376.2Z" fill="url(#wb12)" stroke="#10141c" stroke-width=".8"/>
<path d="M298.5 350.0L291.0 344.9L291.0 374.9L298.5 380.0Z" fill="url(#wa0)" stroke="#10141c" stroke-width=".8"/>
<path d="M312.1 353.4L298.5 350.0L298.5 380.0L312.1 383.4Z" fill="url(#wa1)" stroke="#10141c" stroke-width=".8"/>
<path d="M751.5 357.0L750.6 350.0L750.6 380.0L751.5 387.0Z" fill="url(#wa12)" stroke="#10141c" stroke-width=".8"/>
<path d="M769.5 355.0L758.5 358.7L758.5 388.7L769.5 385.0Z" fill="url(#wb12)" stroke="#10141c" stroke-width=".8"/>
<path d="M313.2 361.9L312.1 353.4L312.1 383.4L313.2 391.9Z" fill="url(#wa1)" stroke="#10141c" stroke-width=".8"/>
<path d="M347.0 362.2L333.0 358.7L333.0 388.7L347.0 392.2Z" fill="url(#wa2)" stroke="#10141c" stroke-width=".8"/>
<path d="M333.0 358.7L320.1 363.0L320.1 393.0L333.0 388.7Z" fill="url(#wb1)" stroke="#10141c" stroke-width=".8"/>
<path d="M320.3 364.7L313.2 361.9L313.2 391.9L320.3 394.7Z" fill="url(#wa1)" stroke="#10141c" stroke-width=".8"/>
<path d="M786.4 365.7L785.6 359.2L785.6 389.2L786.4 395.7Z" fill="url(#wa13)" stroke="#10141c" stroke-width=".8"/>
<path d="M803.4 364.1L793.4 367.5L793.4 397.5L803.4 394.1Z" fill="url(#wb13)" stroke="#10141c" stroke-width=".8"/>
<path d="M347.9 370.0L347.0 362.2L347.0 392.2L347.9 400.0Z" fill="url(#wa2)" stroke="#10141c" stroke-width=".8"/>
<path d="M821.2 374.5L820.5 368.8L820.5 398.8L821.2 404.5Z" fill="url(#wa14)" stroke="#10141c" stroke-width=".8"/>
<path d="M348.4 373.9L345.8 374.8L345.8 404.8L348.4 403.9Z" fill="url(#wb2)" stroke="#10141c" stroke-width=".8"/>
<path d="M345.8 374.8L336.8 373.8L336.8 403.8L345.8 404.8Z" fill="url(#wa2)" stroke="#10141c" stroke-width=".8"/>
<path d="M835.9 373.6L828.2 376.2L828.2 406.2L835.9 403.6Z" fill="url(#wb14)" stroke="#10141c" stroke-width=".8"/>
<path d="M348.9 377.9V407.9" stroke="#10141c" stroke-width=".9"/>
<path d="M856.1 383.2V413.2" stroke="#10141c" stroke-width=".9"/>
<path d="M867.6 383.4L863.1 385.0L863.1 415.0L867.6 413.4Z" fill="url(#wb15)" stroke="#10141c" stroke-width=".8"/>
<path d="M353.0 386.3L348.9 377.9L348.9 407.9L353.0 416.3Z" fill="url(#wa2)" stroke="#10141c" stroke-width=".8"/>
<path d="M370.3 387.0L362.7 389.6L362.7 419.6L370.3 417.0Z" fill="url(#wb2)" stroke="#10141c" stroke-width=".8"/>
<path d="M362.7 389.6L353.0 386.3L353.0 416.3L362.7 419.6Z" fill="url(#wa2)" stroke="#10141c" stroke-width=".8"/>
<path d="M384.3 390.5L370.3 387.0L370.3 417.0L384.3 420.5Z" fill="url(#wa3)" stroke="#10141c" stroke-width=".8"/>
<path d="M890.9 391.9V421.9" stroke="#10141c" stroke-width=".9"/>
<path d="M901.0 392.7L897.9 393.7L897.9 423.7L901.0 422.7Z" fill="url(#wb16)" stroke="#10141c" stroke-width=".8"/>
<path d="M385.3 398.9L384.3 390.5L384.3 420.5L385.3 428.9Z" fill="url(#wa3)" stroke="#10141c" stroke-width=".8"/>
<path d="M419.1 399.3L405.2 395.8L405.2 425.8L419.1 429.3Z" fill="url(#wa3)" stroke="#10141c" stroke-width=".8"/>
<path d="M405.2 395.8L392.2 400.1L392.2 430.1L405.2 425.8Z" fill="url(#wb3)" stroke="#10141c" stroke-width=".8"/>
<path d="M392.4 401.4L385.3 398.9L385.3 428.9L392.4 431.4Z" fill="url(#wa3)" stroke="#10141c" stroke-width=".8"/>
<path d="M420.1 407.1L419.1 399.3L419.1 429.3L420.1 437.1Z" fill="url(#wa4)" stroke="#10141c" stroke-width=".8"/>
<path d="M454.0 408.0L440.0 404.5L440.0 434.5L454.0 438.0Z" fill="url(#wa4)" stroke="#10141c" stroke-width=".8"/>
<path d="M440.0 404.5L427.1 408.9L427.1 438.9L440.0 434.5Z" fill="url(#wb4)" stroke="#10141c" stroke-width=".8"/>
<path d="M427.6 413.3L414.4 409.1L414.4 439.1L427.6 443.3Z" fill="url(#wa4)" stroke="#10141c" stroke-width=".8"/>
<path d="M455.0 415.9L454.0 408.0L454.0 438.0L455.0 445.9Z" fill="url(#wa5)" stroke="#10141c" stroke-width=".8"/>
<path d="M488.8 416.8L474.9 413.3L474.9 443.3L488.8 446.8Z" fill="url(#wa5)" stroke="#10141c" stroke-width=".8"/>
<path d="M474.9 413.3L462.0 417.6L462.0 447.6L474.9 443.3Z" fill="url(#wb5)" stroke="#10141c" stroke-width=".8"/>
<path d="M455.5 419.8L452.2 420.9L452.2 450.9L455.5 449.8Z" fill="url(#wb5)" stroke="#10141c" stroke-width=".8"/>
<path d="M452.2 420.9L445.6 419.0L445.6 449.0L452.2 450.9Z" fill="url(#wa4)" stroke="#10141c" stroke-width=".8"/>
<path d="M455.7 421.9V451.9" stroke="#10141c" stroke-width=".9"/>
<path d="M462.7 423.9L455.7 421.9L455.7 451.9L462.7 453.9Z" fill="url(#wa5)" stroke="#10141c" stroke-width=".8"/>
<path d="M996.0 422.1L989.6 424.3L989.6 454.3L996.0 452.1Z" fill="url(#wb18)" stroke="#10141c" stroke-width=".8"/>
<path d="M489.8 424.6L488.8 416.8L488.8 446.8L489.8 454.6Z" fill="url(#wa5)" stroke="#10141c" stroke-width=".8"/>
<path d="M523.7 425.5L509.8 422.0L509.8 452.0L523.7 455.5Z" fill="url(#wa6)" stroke="#10141c" stroke-width=".8"/>
<path d="M996.5 426.0V456.0" stroke="#10141c" stroke-width=".9"/>
<path d="M509.8 422.0L496.8 426.4L496.8 456.4L509.8 452.0Z" fill="url(#wb6)" stroke="#10141c" stroke-width=".8"/>
<path d="M481.5 429.3L478.5 428.4L478.5 458.4L481.5 459.3Z" fill="url(#wa5)" stroke="#10141c" stroke-width=".8"/>
<path d="M490.3 428.6L485.4 430.2L485.4 460.2L490.3 458.6Z" fill="url(#wb5)" stroke="#10141c" stroke-width=".8"/>
<path d="M485.4 430.2L481.5 429.3L481.5 459.3L485.4 460.2Z" fill="url(#wa5)" stroke="#10141c" stroke-width=".8"/>
<path d="M490.7 431.5V461.5" stroke="#10141c" stroke-width=".9"/>
<path d="M497.7 433.2L490.7 431.5L490.7 461.5L497.7 463.2Z" fill="url(#wa6)" stroke="#10141c" stroke-width=".8"/>
<path d="M524.7 433.4L523.7 425.5L523.7 455.5L524.7 463.4Z" fill="url(#wa6)" stroke="#10141c" stroke-width=".8"/>
<path d="M558.6 434.2L544.6 430.7L544.6 460.7L558.6 464.2Z" fill="url(#wa7)" stroke="#10141c" stroke-width=".8"/>
<path d="M544.6 430.7L531.7 435.1L531.7 465.1L544.6 460.7Z" fill="url(#wb7)" stroke="#10141c" stroke-width=".8"/>
<path d="M1027.9 436.8L1027.0 437.5L1027.0 467.5L1027.9 466.8Z" fill="url(#wb19)" stroke="none" stroke-width=".8"/>
<path d="M1027.0 437.5L1017.9 435.2L1017.9 465.2L1027.0 467.5Z" fill="url(#wa19)" stroke="#10141c" stroke-width=".8"/>
<path d="M525.2 437.3L520.5 438.9L520.5 468.9L525.2 467.3Z" fill="url(#wb6)" stroke="#10141c" stroke-width=".8"/>
<path d="M520.5 438.9L513.5 437.1L513.5 467.1L520.5 468.9Z" fill="url(#wa6)" stroke="#10141c" stroke-width=".8"/>
<path d="M1017.9 435.2L1005.0 439.6L1005.0 469.6L1017.9 465.2Z" fill="url(#wb19)" stroke="#10141c" stroke-width=".8"/>
<path d="M525.5 440.1V470.1" stroke="#10141c" stroke-width=".9"/>
<path d="M532.5 441.9L525.5 440.1L525.5 470.1L532.5 471.9Z" fill="url(#wa6)" stroke="#10141c" stroke-width=".8"/>
<path d="M559.5 442.1L558.6 434.2L558.6 464.2L559.5 472.1Z" fill="url(#wa7)" stroke="#10141c" stroke-width=".8"/>
<path d="M593.4 443.0L579.5 439.5L579.5 469.5L593.4 473.0Z" fill="url(#wa8)" stroke="#10141c" stroke-width=".8"/>
<path d="M579.5 439.5L566.5 443.8L566.5 473.8L579.5 469.5Z" fill="url(#wb8)" stroke="#10141c" stroke-width=".8"/>
<path d="M1032.8 446.5L1031.9 438.6L1031.9 468.6L1032.8 476.5Z" fill="url(#wa19)" stroke="#10141c" stroke-width=".8"/>
<path d="M560.0 446.0L555.4 447.6L555.4 477.6L560.0 476.0Z" fill="url(#wb7)" stroke="#10141c" stroke-width=".8"/>
<path d="M555.4 447.6L548.4 445.8L548.4 475.8L555.4 477.6Z" fill="url(#wa7)" stroke="#10141c" stroke-width=".8"/>
<path d="M1049.5 445.0L1039.8 448.3L1039.8 478.3L1049.5 475.0Z" fill="url(#wb20)" stroke="#10141c" stroke-width=".8"/>
<path d="M560.4 448.8V478.8" stroke="#10141c" stroke-width=".9"/>
<path d="M567.4 450.6L560.4 448.8L560.4 478.8L567.4 480.6Z" fill="url(#wa7)" stroke="#10141c" stroke-width=".8"/>
<path d="M594.4 450.8L593.4 443.0L593.4 473.0L594.4 480.8Z" fill="url(#wa8)" stroke="#10141c" stroke-width=".8"/>
<path d="M628.3 451.7L614.3 448.2L614.3 478.2L628.3 481.7Z" fill="url(#wa9)" stroke="#10141c" stroke-width=".8"/>
<path d="M614.3 448.2L601.4 452.6L601.4 482.6L614.3 478.2Z" fill="url(#wb8)" stroke="#10141c" stroke-width=".8"/>
<path d="M1067.7 455.3V485.3" stroke="#10141c" stroke-width=".9"/>
<path d="M594.9 454.8L590.3 456.3L590.3 486.3L594.9 484.8Z" fill="url(#wb8)" stroke="#10141c" stroke-width=".8"/>
<path d="M590.3 456.3L583.3 454.6L583.3 484.6L590.3 486.3Z" fill="url(#wa8)" stroke="#10141c" stroke-width=".8"/>
<path d="M1078.1 455.9L1074.7 457.0L1074.7 487.0L1078.1 485.9Z" fill="url(#wb20)" stroke="#10141c" stroke-width=".8"/>
<path d="M595.2 457.5V487.5" stroke="#10141c" stroke-width=".9"/>
<path d="M602.2 459.3L595.2 457.5L595.2 487.5L602.2 489.3Z" fill="url(#wa8)" stroke="#10141c" stroke-width=".8"/>
<path d="M629.3 459.6L628.3 451.7L628.3 481.7L629.3 489.6Z" fill="url(#wa9)" stroke="#10141c" stroke-width=".8"/>
<path d="M663.1 460.5L649.2 457.0L649.2 487.0L663.1 490.5Z" fill="url(#wa10)" stroke="#10141c" stroke-width=".8"/>
<path d="M649.2 457.0L636.3 461.3L636.3 491.3L649.2 487.0Z" fill="url(#wb9)" stroke="#10141c" stroke-width=".8"/>
<path d="M629.8 463.5L625.2 465.0L625.2 495.0L629.8 493.5Z" fill="url(#wb9)" stroke="#10141c" stroke-width=".8"/>
<path d="M625.2 465.0L618.2 463.3L618.2 493.3L625.2 495.0Z" fill="url(#wa9)" stroke="#10141c" stroke-width=".8"/>
<path d="M630.1 466.3V496.3" stroke="#10141c" stroke-width=".9"/>
<path d="M637.1 468.0L630.1 466.3L630.1 496.3L637.1 498.0Z" fill="url(#wa9)" stroke="#10141c" stroke-width=".8"/>
<path d="M664.1 468.3L663.1 460.5L663.1 490.5L664.1 498.3Z" fill="url(#wa10)" stroke="#10141c" stroke-width=".8"/>
<path d="M698.0 469.2L684.1 465.7L684.1 495.7L698.0 499.2Z" fill="url(#wa11)" stroke="#10141c" stroke-width=".8"/>
<path d="M684.1 465.7L671.1 470.1L671.1 500.1L684.1 495.7Z" fill="url(#wb10)" stroke="#10141c" stroke-width=".8"/>
<path d="M664.6 472.2L660.2 473.7L660.2 503.7L664.6 502.2Z" fill="url(#wb10)" stroke="#10141c" stroke-width=".8"/>
<path d="M660.2 473.7L653.2 472.0L653.2 502.0L660.2 503.7Z" fill="url(#wa10)" stroke="#10141c" stroke-width=".8"/>
<path d="M665.0 474.9V504.9" stroke="#10141c" stroke-width=".9"/>
<path d="M1137.7 475.2V505.2" stroke="#10141c" stroke-width=".9"/>
<path d="M669.2 476.0L665.0 474.9L665.0 504.9L669.2 506.0Z" fill="url(#wa10)" stroke="#10141c" stroke-width=".8"/>
<path d="M671.9 476.6L669.2 476.0L669.2 506.0L671.9 506.6Z" fill="url(#wa10)" stroke="#10141c" stroke-width=".8"/>
<path d="M699.0 477.1L698.0 469.2L698.0 499.2L699.0 507.1Z" fill="url(#wa11)" stroke="#10141c" stroke-width=".8"/>
<path d="M732.9 477.9L718.9 474.4L718.9 504.4L732.9 507.9Z" fill="url(#wa11)" stroke="#10141c" stroke-width=".8"/>
<path d="M718.9 474.4L706.0 478.8L706.0 508.8L718.9 504.4Z" fill="url(#wb11)" stroke="#10141c" stroke-width=".8"/>
<path d="M699.5 481.0L696.7 481.9L696.7 511.9L699.5 511.0Z" fill="url(#wb11)" stroke="#10141c" stroke-width=".8"/>
<path d="M696.7 481.9L689.3 480.3L689.3 510.3L696.7 511.9Z" fill="url(#wa11)" stroke="#10141c" stroke-width=".8"/>
<path d="M699.7 482.6V512.6" stroke="#10141c" stroke-width=".9"/>
<path d="M706.6 484.1L699.7 482.6L699.7 512.6L706.6 514.1Z" fill="url(#wa11)" stroke="#10141c" stroke-width=".8"/>
<path d="M733.8 485.8L732.9 477.9L732.9 507.9L733.8 515.8Z" fill="url(#wa12)" stroke="#10141c" stroke-width=".8"/>
<path d="M767.7 486.7L753.8 483.2L753.8 513.2L767.7 516.7Z" fill="url(#wa12)" stroke="#10141c" stroke-width=".8"/>
<path d="M753.8 483.2L740.8 487.5L740.8 517.5L753.8 513.2Z" fill="url(#wb12)" stroke="#10141c" stroke-width=".8"/>
<path d="M1171.2 486.0L1166.3 487.6L1166.3 517.6L1171.2 516.0Z" fill="url(#wb23)" stroke="#10141c" stroke-width=".8"/>
<path d="M1173.3 489.4V519.4" stroke="#10141c" stroke-width=".9"/>
<path d="M741.3 491.5L726.3 488.3L726.3 518.3L741.3 521.5Z" fill="url(#wa12)" stroke="#10141c" stroke-width=".8"/>
<path d="M768.7 494.5L767.7 486.7L767.7 516.7L768.7 524.5Z" fill="url(#wa13)" stroke="#10141c" stroke-width=".8"/>
<path d="M802.6 495.4L788.7 491.9L788.7 521.9L802.6 525.4Z" fill="url(#wa13)" stroke="#10141c" stroke-width=".8"/>
<path d="M788.7 491.9L775.7 496.3L775.7 526.3L788.7 521.9Z" fill="url(#wb13)" stroke="#10141c" stroke-width=".8"/>
<path d="M773.7 498.4L763.6 496.3L763.6 526.3L773.7 528.4Z" fill="url(#wa13)" stroke="#10141c" stroke-width=".8"/>
<path d="M776.0 499.0L773.7 498.4L773.7 528.4L776.0 529.0Z" fill="url(#wa13)" stroke="#10141c" stroke-width=".8"/>
<path d="M1198.2 499.4L1194.7 498.5L1194.7 528.5L1198.2 529.4Z" fill="url(#wa23)" stroke="#10141c" stroke-width=".8"/>
<path d="M1194.7 498.5L1181.7 502.9L1181.7 532.9L1194.7 528.5Z" fill="url(#wb23)" stroke="#10141c" stroke-width=".8"/>
<path d="M803.6 503.3L802.6 495.4L802.6 525.4L803.6 533.3Z" fill="url(#wa13)" stroke="#10141c" stroke-width=".8"/>
<path d="M837.5 504.2L823.5 500.7L823.5 530.7L837.5 534.2Z" fill="url(#wa14)" stroke="#10141c" stroke-width=".8"/>
<path d="M823.5 500.7L810.6 505.0L810.6 535.0L823.5 530.7Z" fill="url(#wb14)" stroke="#10141c" stroke-width=".8"/>
<path d="M804.9 506.2L799.1 504.8L799.1 534.8L804.9 536.2Z" fill="url(#wa13)" stroke="#10141c" stroke-width=".8"/>
<path d="M810.8 507.2L804.9 506.2L804.9 536.2L810.8 537.2Z" fill="url(#wa14)" stroke="#10141c" stroke-width=".8"/>
<path d="M838.4 511.8L837.5 504.2L837.5 534.2L838.4 541.8Z" fill="url(#wa14)" stroke="#10141c" stroke-width=".8"/>
<path d="M842.3 512.4L838.4 511.8L838.4 541.8L842.3 542.4Z" fill="url(#wa14)" stroke="#10141c" stroke-width=".8"/>
<path d="M872.3 512.9L858.4 509.4L858.4 539.4L872.3 542.9Z" fill="url(#wa15)" stroke="#10141c" stroke-width=".8"/>
<path d="M858.4 509.4L846.5 513.4L846.5 543.4L858.4 539.4Z" fill="url(#wb15)" stroke="#10141c" stroke-width=".8"/>
<path d="M846.5 513.4L842.3 512.4L842.3 542.4L846.5 543.4Z" fill="url(#wa14)" stroke="#10141c" stroke-width=".8"/>
<path d="M1200.5 516.0L1198.9 518.6L1198.9 548.6L1200.5 546.0Z" fill="url(#wb23)" stroke="#10141c" stroke-width=".8"/>
<path d="M1198.9 518.6L1197.2 518.2L1197.2 548.2L1198.9 548.6Z" fill="url(#wa23)" stroke="#10141c" stroke-width=".8"/>
<path d="M974.4 519.5L960.5 516.0L960.5 546.0L974.4 549.5Z" fill="url(#wa18)" stroke="#10141c" stroke-width=".8"/>
<path d="M873.2 519.6L872.3 512.9L872.3 542.9L873.2 549.6Z" fill="url(#wa15)" stroke="#10141c" stroke-width=".8"/>
<path d="M960.5 516.0L947.5 520.3L947.5 550.3L960.5 546.0Z" fill="url(#wb17)" stroke="#10141c" stroke-width=".8"/>
<path d="M879.6 521.1L873.2 519.6L873.2 549.6L879.6 551.1Z" fill="url(#wa15)" stroke="#10141c" stroke-width=".8"/>
<path d="M893.2 518.1L883.7 521.3L883.7 551.3L893.2 548.1Z" fill="url(#wb16)" stroke="#10141c" stroke-width=".8"/>
<path d="M883.7 521.3L879.6 521.1L879.6 551.1L883.7 551.3Z" fill="url(#wa15)" stroke="#10141c" stroke-width=".8"/>
<path d="M907.2 521.6L893.2 518.1L893.2 548.1L907.2 551.6Z" fill="url(#wa16)" stroke="#10141c" stroke-width=".8"/>
<path d="M1197.2 518.2L1184.2 522.6L1184.2 552.6L1197.2 548.2Z" fill="url(#wb23)" stroke="#10141c" stroke-width=".8"/>
<path d="M907.3 522.7V552.7" stroke="#10141c" stroke-width=".9"/>
<path d="M914.4 523.1L907.3 522.7L907.3 552.7L914.4 553.1Z" fill="url(#wa16)" stroke="#10141c" stroke-width=".8"/>
<path d="M941.1 522.5L933.6 525.0L933.6 555.0L941.1 552.5Z" fill="url(#wb17)" stroke="#10141c" stroke-width=".8"/>
<path d="M933.6 525.0L914.4 523.1L914.4 553.1L933.6 555.0Z" fill="url(#wa16)" stroke="#10141c" stroke-width=".8"/>
<path d="M941.5 525.8V555.8" stroke="#10141c" stroke-width=".9"/>
<path d="M944.3 526.1L941.5 525.8L941.5 555.8L944.3 556.1Z" fill="url(#wa17)" stroke="#10141c" stroke-width=".8"/>
<path d="M948.4 526.8L944.3 526.1L944.3 556.1L948.4 556.8Z" fill="url(#wa17)" stroke="#10141c" stroke-width=".8"/>
<path d="M975.4 527.3L974.4 519.5L974.4 549.5L975.4 557.3Z" fill="url(#wa18)" stroke="#10141c" stroke-width=".8"/>
<path d="M1009.3 528.2L995.4 524.7L995.4 554.7L1009.3 558.2Z" fill="url(#wa18)" stroke="#10141c" stroke-width=".8"/>
<path d="M995.4 524.7L982.4 529.1L982.4 559.1L995.4 554.7Z" fill="url(#wb18)" stroke="#10141c" stroke-width=".8"/>
<path d="M982.8 532.5L967.7 529.9L967.7 559.9L982.8 562.5Z" fill="url(#wa18)" stroke="#10141c" stroke-width=".8"/>
<path d="M1178.7 532.6L1164.8 529.1L1164.8 559.1L1178.7 562.6Z" fill="url(#wa23)" stroke="#10141c" stroke-width=".8"/>
<path d="M1190.7 531.8V561.8" stroke="#10141c" stroke-width=".9"/>
<path d="M1164.8 529.1L1151.8 533.5L1151.8 563.5L1164.8 559.1Z" fill="url(#wb22)" stroke="#10141c" stroke-width=".8"/>
<path d="M1190.2 532.6L1187.5 534.8L1187.5 564.8L1190.2 562.6Z" fill="url(#wb23)" stroke="#10141c" stroke-width=".8"/>
<path d="M1187.5 534.8L1185.7 534.3L1185.7 564.3L1187.5 564.8Z" fill="url(#wa23)" stroke="#10141c" stroke-width=".8"/>
<path d="M1010.3 536.1L1009.3 528.2L1009.3 558.2L1010.3 566.1Z" fill="url(#wa19)" stroke="#10141c" stroke-width=".8"/>
<path d="M1044.2 536.9L1030.2 533.4L1030.2 563.4L1044.2 566.9Z" fill="url(#wa19)" stroke="#10141c" stroke-width=".8"/>
<path d="M1030.2 533.4L1016.2 538.2L1016.2 568.2L1030.2 563.4Z" fill="url(#wb19)" stroke="#10141c" stroke-width=".8"/>
<path d="M1016.2 538.2L1008.2 536.7L1008.2 566.7L1016.2 568.2Z" fill="url(#wa19)" stroke="#10141c" stroke-width=".8"/>
<path d="M1179.7 540.7L1178.7 532.6L1178.7 562.6L1179.7 570.7Z" fill="url(#wa23)" stroke="#10141c" stroke-width=".8"/>
<path d="M1185.9 536.2L1180.4 540.8L1180.4 570.8L1185.9 566.2Z" fill="url(#wb23)" stroke="#10141c" stroke-width=".8"/>
<path d="M1180.4 540.8L1179.7 540.7L1179.7 570.7L1180.4 570.8Z" fill="url(#wa23)" stroke="none" stroke-width=".8"/>
<path d="M1045.0 543.5L1044.2 536.9L1044.2 566.9L1045.0 573.5Z" fill="url(#wa20)" stroke="#10141c" stroke-width=".8"/>
<path d="M1180.1 541.0L1177.0 543.6L1177.0 573.6L1180.1 571.0Z" fill="url(#wb23)" stroke="#10141c" stroke-width=".8"/>
<path d="M1065.1 542.2L1055.5 545.4L1055.5 575.4L1065.1 572.2Z" fill="url(#wb20)" stroke="#10141c" stroke-width=".8"/>
<path d="M1055.5 545.4L1045.0 543.5L1045.0 573.5L1055.5 575.4Z" fill="url(#wa20)" stroke="#10141c" stroke-width=".8"/>
<path d="M1079.0 545.7L1065.1 542.2L1065.1 572.2L1079.0 575.7Z" fill="url(#wa20)" stroke="#10141c" stroke-width=".8"/>
<path d="M1177.0 543.6L1167.7 548.9L1167.7 578.9L1177.0 573.6Z" fill="url(#wb23)" stroke="#10141c" stroke-width=".8"/>
<path d="M1167.7 548.9V578.9" stroke="#10141c" stroke-width=".9"/>
<path d="M1093.0 549.2L1086.0 547.4L1086.0 577.4L1093.0 579.2Z" fill="url(#wa21)" stroke="#10141c" stroke-width=".8"/>
<path d="M1079.5 549.4V579.4" stroke="#10141c" stroke-width=".9"/>
<path d="M1086.4 550.6L1079.5 549.4L1079.5 579.4L1086.4 580.6Z" fill="url(#wa21)" stroke="#10141c" stroke-width=".8"/>
<path d="M1099.9 550.9L1094.9 552.6L1094.9 582.6L1099.9 580.9Z" fill="url(#wb21)" stroke="#10141c" stroke-width=".8"/>
<path d="M1094.9 552.6L1088.0 550.8L1088.0 580.8L1094.9 582.6Z" fill="url(#wa21)" stroke="#10141c" stroke-width=".8"/>
<path d="M1167.2 548.8L1154.3 553.1L1154.3 583.1L1167.2 578.8Z" fill="url(#wb23)" stroke="#10141c" stroke-width=".8"/>
<path d="M1113.9 554.4L1099.9 550.9L1099.9 580.9L1113.9 584.4Z" fill="url(#wa21)" stroke="#10141c" stroke-width=".8"/>
<path d="M1154.4 554.2L1147.8 555.8L1147.8 585.8L1154.4 584.2Z" fill="url(#wb22)" stroke="#10141c" stroke-width=".8"/>
<path d="M1147.8 555.8V585.8" stroke="#10141c" stroke-width=".9"/>
<path d="M1147.8 555.3L1143.3 556.8L1143.3 586.8L1147.8 585.3Z" fill="url(#wb22)" stroke="#10141c" stroke-width=".8"/>
<path d="M1143.3 556.8L1126.1 557.5L1126.1 587.5L1143.3 586.8Z" fill="url(#wa22)" stroke="#10141c" stroke-width=".8"/>
<path d="M1126.1 557.5L1120.9 556.2L1120.9 586.2L1126.1 587.5Z" fill="url(#wa22)" stroke="#10141c" stroke-width=".8"/>
<path d="M1114.3 557.6V587.6" stroke="#10141c" stroke-width=".9"/>
<path d="M1121.1 557.7L1115.3 557.9L1115.3 587.9L1121.1 587.7Z" fill="url(#wa21)" stroke="#10141c" stroke-width=".8"/>
<path d="M1115.3 557.9L1114.3 557.6L1114.3 587.6L1115.3 587.9Z" fill="url(#wa21)" stroke="none" stroke-width=".8"/>
<rect x="291.400" y="346.5" width="3" height="28" fill="url(#wy)"/>
<ellipse cx="924" cy="538" rx="24" ry="12" fill="url(#bg)" opacity=".55"/>
<path d="M1119.4 544.4L1132.4 540.0L1146.3 543.5L1147.3 551.4L1134.3 555.7L1120.4 552.2ZM1149.3 513.8L1162.3 509.5L1176.2 512.9L1177.2 520.8L1164.3 525.2L1150.3 521.7ZM1146.9 494.2L1159.8 489.8L1173.8 493.3L1174.8 501.2L1161.8 505.5L1147.9 502.0ZM1116.9 524.7L1129.9 520.4L1143.8 523.9L1144.8 531.7L1131.9 536.1L1117.9 532.6ZM1084.5 535.6L1097.5 531.3L1111.4 534.8L1112.4 542.6L1099.5 547.0L1085.5 543.5ZM1114.5 505.1L1127.4 500.7L1141.4 504.2L1142.4 512.1L1129.4 516.4L1115.5 512.9ZM1112.0 485.4L1125.0 481.1L1138.9 484.6L1139.9 492.4L1126.9 496.8L1113.0 493.3ZM1082.1 516.0L1095.0 511.6L1109.0 515.1L1109.9 523.0L1097.0 527.3L1083.1 523.8ZM1079.6 496.3L1092.6 492.0L1106.5 495.5L1107.5 503.3L1094.5 507.7L1080.6 504.2ZM1049.7 526.9L1062.6 522.5L1076.6 526.0L1077.5 533.9L1064.6 538.2L1050.7 534.8ZM1077.2 476.7L1090.1 472.3L1104.0 475.8L1105.0 483.7L1092.1 488.0L1078.1 484.5ZM1047.2 507.2L1060.2 502.9L1074.1 506.4L1075.1 514.2L1062.1 518.6L1048.2 515.1ZM1014.8 518.2L1027.8 513.8L1041.7 517.3L1042.7 525.1L1029.7 529.5L1015.8 526.0ZM1044.8 487.6L1057.7 483.2L1071.6 486.7L1072.6 494.6L1059.7 498.9L1045.7 495.5ZM1042.3 467.9L1055.2 463.6L1069.2 467.1L1070.2 474.9L1057.2 479.3L1043.3 475.8ZM1012.4 498.5L1025.3 494.1L1039.2 497.6L1040.2 505.5L1027.3 509.9L1013.3 506.4ZM979.9 509.4L992.9 505.1L1006.8 508.6L1007.8 516.4L994.9 520.8L980.9 517.3ZM1009.9 478.9L1022.8 474.5L1036.8 478.0L1037.8 485.8L1024.8 490.2L1010.9 486.7ZM1007.4 459.2L1020.4 454.8L1034.3 458.3L1035.3 466.2L1022.4 470.6L1008.4 467.1ZM977.5 489.8L990.4 485.4L1004.4 488.9L1005.4 496.8L992.4 501.1L978.5 497.6ZM975.0 470.1L988.0 465.8L1001.9 469.2L1002.9 477.1L990.0 481.5L976.0 478.0ZM945.1 500.7L958.0 496.3L972.0 499.8L973.0 507.7L960.0 512.0L946.1 508.5ZM972.6 450.5L985.5 446.1L999.5 449.6L1000.4 457.5L987.5 461.8L973.6 458.3ZM912.7 511.6L925.6 507.2L939.6 510.7L940.6 518.6L927.6 522.9L913.7 519.4ZM942.6 481.0L955.6 476.7L969.5 480.2L970.5 488.0L957.5 492.4L943.6 488.9ZM970.1 430.8L983.1 426.5L997.0 429.9L998.0 437.8L985.0 442.2L971.1 438.7ZM940.2 461.4L953.1 457.0L967.1 460.5L968.0 468.4L955.1 472.7L941.2 469.2ZM910.2 491.9L923.2 487.6L937.1 491.1L938.1 498.9L925.1 503.3L911.2 499.8ZM937.7 441.7L950.7 437.4L964.6 440.9L965.6 448.7L952.6 453.1L938.7 449.6ZM907.8 472.3L920.7 467.9L934.7 471.4L935.6 479.3L922.7 483.6L908.7 480.1ZM877.8 502.9L890.8 498.5L904.7 502.0L905.7 509.8L892.7 514.2L878.8 510.7ZM905.3 452.6L918.3 448.3L932.2 451.8L933.2 459.6L920.2 464.0L906.3 460.5ZM875.4 483.2L888.3 478.8L902.3 482.3L903.2 490.2L890.3 494.6L876.3 491.1ZM935.3 422.1L948.2 417.7L962.1 421.2L963.1 429.1L950.2 433.4L936.2 429.9ZM843.0 494.1L855.9 489.7L869.9 493.2L870.8 501.1L857.9 505.5L843.9 502.0ZM902.8 433.0L915.8 428.6L929.7 432.1L930.7 440.0L917.8 444.3L903.8 440.8ZM872.9 463.5L885.9 459.2L899.8 462.7L900.8 470.5L887.8 474.9L873.9 471.4ZM870.4 443.9L883.4 439.5L897.3 443.0L898.3 450.9L885.4 455.2L871.4 451.8ZM840.5 474.5L853.5 470.1L867.4 473.6L868.4 481.4L855.4 485.8L841.5 482.3ZM900.4 413.3L913.3 409.0L927.3 412.5L928.3 420.3L915.3 424.7L901.4 421.2ZM838.0 454.8L851.0 450.4L864.9 453.9L865.9 461.8L853.0 466.2L839.0 462.7ZM868.0 424.2L880.9 419.9L894.9 423.4L895.9 431.2L882.9 435.6L869.0 432.1ZM808.1 485.4L821.1 481.0L835.0 484.5L836.0 492.4L823.0 496.7L809.1 493.2ZM835.6 435.2L848.5 430.8L862.5 434.3L863.5 442.1L850.5 446.5L836.6 443.0ZM805.6 465.7L818.6 461.4L832.5 464.9L833.5 472.7L820.6 477.1L806.6 473.6ZM865.5 404.6L878.5 400.2L892.4 403.7L893.4 411.6L880.5 415.9L866.5 412.5ZM833.1 415.5L846.1 411.1L860.0 414.6L861.0 422.5L848.0 426.9L834.1 423.4ZM803.2 446.1L816.1 441.7L830.1 445.2L831.1 453.1L818.1 457.4L804.2 453.9ZM773.2 476.6L786.2 472.3L800.1 475.8L801.1 483.6L788.2 488.0L774.2 484.5ZM800.7 426.4L813.7 422.1L827.6 425.6L828.6 433.4L815.6 437.8L801.7 434.3ZM830.7 395.9L843.6 391.5L857.6 395.0L858.5 402.8L845.6 407.2L831.7 403.7ZM770.8 457.0L783.7 452.6L797.7 456.1L798.7 464.0L785.7 468.3L771.8 464.8ZM798.3 406.8L811.2 402.4L825.2 405.9L826.1 413.8L813.2 418.1L799.3 414.6ZM738.4 467.9L751.3 463.5L765.3 467.0L766.3 474.9L753.3 479.2L739.4 475.7ZM768.3 437.3L781.3 433.0L795.2 436.5L796.2 444.3L783.2 448.7L769.3 445.2ZM795.8 387.1L808.8 382.8L822.7 386.3L823.7 394.1L810.7 398.5L796.8 395.0ZM765.9 417.7L778.8 413.3L792.8 416.8L793.7 424.7L780.8 429.0L766.8 425.5ZM735.9 448.2L748.9 443.9L762.8 447.4L763.8 455.2L750.8 459.6L736.9 456.1ZM763.4 398.0L776.4 393.7L790.3 397.2L791.3 405.0L778.3 409.4L764.4 405.9ZM733.5 428.6L746.4 424.2L760.4 427.7L761.3 435.6L748.4 439.9L734.4 436.4ZM703.5 459.2L716.5 454.8L730.4 458.3L731.4 466.1L718.4 470.5L704.5 467.0ZM731.0 408.9L744.0 404.6L757.9 408.1L758.9 415.9L745.9 420.3L732.0 416.8ZM701.1 439.5L714.0 435.1L728.0 438.6L728.9 446.5L716.0 450.9L702.0 447.4ZM761.0 378.4L773.9 374.0L787.8 377.5L788.8 385.4L775.9 389.7L761.9 386.2ZM668.7 450.4L681.6 446.1L695.5 449.5L696.5 457.4L683.6 461.8L669.6 458.3ZM698.6 419.9L711.6 415.5L725.5 419.0L726.5 426.8L713.5 431.2L699.6 427.7ZM728.6 389.3L741.5 384.9L755.4 388.4L756.4 396.3L743.5 400.6L729.5 397.1ZM696.1 400.2L709.1 395.8L723.0 399.3L724.0 407.2L711.1 411.6L697.1 408.1ZM726.1 369.6L739.0 365.3L753.0 368.8L754.0 376.6L741.0 381.0L727.1 377.5ZM666.2 430.8L679.2 426.4L693.1 429.9L694.1 437.8L681.1 442.1L667.2 438.6ZM663.7 411.1L676.7 406.8L690.6 410.2L691.6 418.1L678.7 422.5L664.7 419.0ZM693.7 380.6L706.6 376.2L720.6 379.7L721.6 387.5L708.6 391.9L694.7 388.4ZM633.8 441.7L646.8 437.3L660.7 440.8L661.7 448.7L648.7 453.0L634.8 449.5ZM691.2 360.9L704.2 356.5L718.1 360.0L719.1 367.9L706.2 372.3L692.2 368.8ZM661.3 391.5L674.2 387.1L688.2 390.6L689.2 398.5L676.2 402.8L662.3 399.3ZM631.3 422.0L644.3 417.7L658.2 421.2L659.2 429.0L646.3 433.4L632.3 429.9ZM658.8 371.8L671.8 367.5L685.7 370.9L686.7 378.8L673.8 383.2L659.8 379.7ZM628.9 402.4L641.8 398.0L655.8 401.5L656.8 409.4L643.8 413.7L629.9 410.2ZM598.9 432.9L611.9 428.6L625.8 432.1L626.8 439.9L613.9 444.3L599.9 440.8ZM656.4 352.2L669.3 347.8L683.3 351.3L684.2 359.2L671.3 363.5L657.4 360.0ZM626.4 382.7L639.4 378.4L653.3 381.9L654.3 389.7L641.3 394.1L627.4 390.6ZM596.5 413.3L609.4 408.9L623.4 412.4L624.4 420.3L611.4 424.6L597.5 421.1ZM624.0 363.1L636.9 358.7L650.9 362.2L651.8 370.1L638.9 374.4L625.0 370.9ZM594.0 393.6L607.0 389.3L620.9 392.8L621.9 400.6L608.9 405.0L595.0 401.5ZM564.1 424.2L577.0 419.8L591.0 423.3L592.0 431.2L579.0 435.5L565.1 432.1ZM621.5 343.4L634.5 339.1L648.4 342.6L649.4 350.4L636.4 354.8L622.5 351.3ZM591.6 374.0L604.5 369.6L618.5 373.1L619.4 381.0L606.5 385.3L592.6 381.8ZM561.6 404.5L574.6 400.2L588.5 403.7L589.5 411.5L576.5 415.9L562.6 412.4ZM589.1 354.3L602.1 350.0L616.0 353.5L617.0 361.3L604.0 365.7L590.1 362.2ZM559.2 384.9L572.1 380.5L586.1 384.0L587.0 391.9L574.1 396.2L560.1 392.8ZM529.2 415.5L542.2 411.1L556.1 414.6L557.1 422.4L544.1 426.8L530.2 423.3ZM586.7 334.7L599.6 330.3L613.5 333.8L614.5 341.7L601.6 346.0L587.6 342.5ZM556.7 365.2L569.7 360.9L583.6 364.4L584.6 372.2L571.6 376.6L557.7 373.1ZM526.8 395.8L539.7 391.4L553.7 394.9L554.6 402.8L541.7 407.2L527.7 403.7ZM554.3 345.6L567.2 341.2L581.1 344.7L582.1 352.6L569.2 356.9L555.2 353.5ZM524.3 376.2L537.3 371.8L551.2 375.3L552.2 383.1L539.2 387.5L525.3 384.0ZM494.4 406.7L507.3 402.4L521.2 405.8L522.2 413.7L509.3 418.1L495.3 414.6ZM551.8 325.9L564.8 321.6L578.7 325.1L579.7 332.9L566.7 337.3L552.8 333.8ZM521.9 356.5L534.8 352.1L548.7 355.6L549.7 363.5L536.8 367.9L522.8 364.4ZM491.9 387.1L504.9 382.7L518.8 386.2L519.8 394.1L506.8 398.4L492.9 394.9ZM519.4 336.9L532.4 332.5L546.3 336.0L547.3 343.8L534.3 348.2L520.4 344.7ZM489.4 367.4L502.4 363.1L516.3 366.5L517.3 374.4L504.4 378.8L490.4 375.3ZM459.5 398.0L472.5 393.6L486.4 397.1L487.4 405.0L474.4 409.3L460.5 405.8ZM516.9 317.2L529.9 312.8L543.8 316.3L544.8 324.2L531.9 328.6L517.9 325.1ZM487.0 347.8L499.9 343.4L513.9 346.9L514.9 354.8L501.9 359.1L488.0 355.6ZM457.0 378.3L470.0 374.0L483.9 377.5L484.9 385.3L472.0 389.7L458.0 386.2ZM484.5 328.1L497.5 323.8L511.4 327.3L512.4 335.1L499.5 339.5L485.5 336.0ZM454.6 358.7L467.5 354.3L481.5 357.8L482.5 365.7L469.5 370.0L455.6 366.5ZM424.6 389.2L437.6 384.9L451.5 388.4L452.5 396.2L439.6 400.6L425.6 397.1ZM482.1 308.5L495.0 304.1L509.0 307.6L510.0 315.5L497.0 319.8L483.1 316.3ZM422.2 369.6L435.1 365.2L449.1 368.7L450.1 376.6L437.1 380.9L423.2 377.4ZM452.1 339.0L465.1 334.7L479.0 338.2L480.0 346.0L467.1 350.4L453.1 346.9ZM449.7 319.4L462.6 315.0L476.6 318.5L477.6 326.4L464.6 330.7L450.7 327.2ZM419.7 349.9L432.7 345.6L446.6 349.1L447.6 356.9L434.6 361.3L420.7 357.8ZM389.8 380.5L402.7 376.1L416.7 379.6L417.7 387.5L404.7 391.8L390.8 388.4ZM417.3 330.3L430.2 325.9L444.2 329.4L445.1 337.3L432.2 341.6L418.3 338.1ZM387.3 360.8L400.3 356.5L414.2 360.0L415.2 367.8L402.2 372.2L388.3 368.7ZM447.2 299.7L460.2 295.4L474.1 298.9L475.1 306.7L462.1 311.1L448.2 307.6ZM384.9 341.2L397.8 336.8L411.8 340.3L412.7 348.2L399.8 352.5L385.9 349.1ZM414.8 310.6L427.8 306.3L441.7 309.8L442.7 317.6L429.7 322.0L415.8 318.5ZM354.9 371.8L367.9 367.4L381.8 370.9L382.8 378.7L369.8 383.1L355.9 379.6ZM382.4 321.6L395.4 317.2L409.3 320.7L410.3 328.5L397.3 332.9L383.4 329.4ZM352.5 352.1L365.4 347.7L379.4 351.2L380.3 359.1L367.4 363.5L353.4 360.0ZM380.0 301.9L392.9 297.5L406.9 301.0L407.8 308.9L394.9 313.3L380.9 309.8ZM350.0 332.5L363.0 328.1L376.9 331.6L377.9 339.4L364.9 343.8L351.0 340.3ZM317.6 343.4L330.6 339.0L344.5 342.5L345.5 350.4L332.5 354.7L318.6 351.2ZM347.6 312.8L360.5 308.5L374.5 311.9L375.4 319.8L362.5 324.2L348.5 320.7ZM315.2 323.7L328.1 319.4L342.0 322.9L343.0 330.7L330.1 335.1L316.1 331.6ZM345.1 293.2L358.1 288.8L372.0 292.3L373.0 300.2L360.0 304.5L346.1 301.0ZM312.7 304.1L325.7 299.7L339.6 303.2L340.6 311.1L327.6 315.4L313.7 311.9ZM280.3 315.0L293.3 310.6L307.2 314.1L308.2 322.0L295.2 326.3L281.3 322.8ZM277.8 295.3L290.8 291.0L304.7 294.5L305.7 302.3L292.8 306.7L278.8 303.2Z" fill="url(#mHole)"/>
<path d="M1119.4 544.4L1120.4 552.2L1132.4 555.2L1132.4 540.0Z" fill="url(#mFace)"/>
<path d="M1132.4 540.0L1119.4 544.4L1120.4 552.2L1134.3 555.7L1146.3 551.7L1146.3 543.5Z" fill="url(#mFace)"/>
<path d="M1149.3 513.8L1150.3 521.7L1162.3 524.7L1162.3 509.5Z" fill="url(#mFace)"/>
<path d="M1162.3 509.5L1149.3 513.8L1150.3 521.7L1164.3 525.2L1176.2 521.1L1176.2 512.9Z" fill="url(#mFace)"/>
<path d="M1146.9 494.2L1147.9 502.0L1159.8 505.0L1159.8 489.8Z" fill="url(#mFace)"/>
<path d="M1159.8 489.8L1146.9 494.2L1147.9 502.0L1161.8 505.5L1173.8 501.5L1173.8 493.3Z" fill="url(#mFace)"/>
<path d="M1116.9 524.7L1117.9 532.6L1129.9 535.6L1129.9 520.4Z" fill="url(#mFace)"/>
<path d="M1129.9 520.4L1116.9 524.7L1117.9 532.6L1131.9 536.1L1143.8 532.0L1143.8 523.9Z" fill="url(#mFace)"/>
<path d="M1084.5 535.6L1085.5 543.5L1097.5 546.5L1097.5 531.3Z" fill="url(#mFace)"/>
<path d="M1097.5 531.3L1084.5 535.6L1085.5 543.5L1099.5 547.0L1111.4 543.0L1111.4 534.8Z" fill="url(#mFace)"/>
<path d="M1114.5 505.1L1115.5 512.9L1127.4 515.9L1127.4 500.7Z" fill="url(#mFace)"/>
<path d="M1127.4 500.7L1114.5 505.1L1115.5 512.9L1129.4 516.4L1141.4 512.4L1141.4 504.2Z" fill="url(#mFace)"/>
<path d="M1112.0 485.4L1113.0 493.3L1125.0 496.3L1125.0 481.1Z" fill="url(#mFace)"/>
<path d="M1125.0 481.1L1112.0 485.4L1113.0 493.3L1126.9 496.8L1138.9 492.7L1138.9 484.6Z" fill="url(#mFace)"/>
<path d="M1082.1 516.0L1083.1 523.8L1095.0 526.8L1095.0 511.6Z" fill="url(#mFace)"/>
<path d="M1095.0 511.6L1082.1 516.0L1083.1 523.8L1097.0 527.3L1109.0 523.3L1109.0 515.1Z" fill="url(#mFace)"/>
<path d="M1079.6 496.3L1080.6 504.2L1092.6 507.2L1092.6 492.0Z" fill="url(#mFace)"/>
<path d="M1092.6 492.0L1079.6 496.3L1080.6 504.2L1094.5 507.7L1106.5 503.7L1106.5 495.5Z" fill="url(#mFace)"/>
<path d="M1049.7 526.9L1050.7 534.8L1062.6 537.8L1062.6 522.5Z" fill="url(#mFace)"/>
<path d="M1062.6 522.5L1049.7 526.9L1050.7 534.8L1064.6 538.2L1076.6 534.2L1076.6 526.0Z" fill="url(#mFace)"/>
<path d="M1077.2 476.7L1078.1 484.5L1090.1 487.5L1090.1 472.3Z" fill="url(#mFace)"/>
<path d="M1090.1 472.3L1077.2 476.7L1078.1 484.5L1092.1 488.0L1104.0 484.0L1104.0 475.8Z" fill="url(#mFace)"/>
<path d="M1047.2 507.2L1048.2 515.1L1060.2 518.1L1060.2 502.9Z" fill="url(#mFace)"/>
<path d="M1060.2 502.9L1047.2 507.2L1048.2 515.1L1062.1 518.6L1074.1 514.6L1074.1 506.4Z" fill="url(#mFace)"/>
<path d="M1014.8 518.2L1015.8 526.0L1027.8 529.0L1027.8 513.8Z" fill="url(#mFace)"/>
<path d="M1027.8 513.8L1014.8 518.2L1015.8 526.0L1029.7 529.5L1041.7 525.5L1041.7 517.3Z" fill="url(#mFace)"/>
<path d="M1044.8 487.6L1045.7 495.5L1057.7 498.5L1057.7 483.2Z" fill="url(#mFace)"/>
<path d="M1057.7 483.2L1044.8 487.6L1045.7 495.5L1059.7 498.9L1071.6 494.9L1071.6 486.7Z" fill="url(#mFace)"/>
<path d="M1042.3 467.9L1043.3 475.8L1055.2 478.8L1055.2 463.6Z" fill="url(#mFace)"/>
<path d="M1055.2 463.6L1042.3 467.9L1043.3 475.8L1057.2 479.3L1069.2 475.3L1069.2 467.1Z" fill="url(#mFace)"/>
<path d="M1012.4 498.5L1013.3 506.4L1025.3 509.4L1025.3 494.1Z" fill="url(#mFace)"/>
<path d="M1025.3 494.1L1012.4 498.5L1013.3 506.4L1027.3 509.9L1039.2 505.8L1039.2 497.6Z" fill="url(#mFace)"/>
<path d="M979.9 509.4L980.9 517.3L992.9 520.3L992.9 505.1Z" fill="url(#mFace)"/>
<path d="M992.9 505.1L979.9 509.4L980.9 517.3L994.9 520.8L1006.8 516.7L1006.8 508.6Z" fill="url(#mFace)"/>
<path d="M1009.9 478.9L1010.9 486.7L1022.8 489.7L1022.8 474.5Z" fill="url(#mFace)"/>
<path d="M1022.8 474.5L1009.9 478.9L1010.9 486.7L1024.8 490.2L1036.8 486.2L1036.8 478.0Z" fill="url(#mFace)"/>
<path d="M1007.4 459.2L1008.4 467.1L1020.4 470.1L1020.4 454.8Z" fill="url(#mFace)"/>
<path d="M1020.4 454.8L1007.4 459.2L1008.4 467.1L1022.4 470.6L1034.3 466.5L1034.3 458.3Z" fill="url(#mFace)"/>
<path d="M977.5 489.8L978.5 497.6L990.4 500.6L990.4 485.4Z" fill="url(#mFace)"/>
<path d="M990.4 485.4L977.5 489.8L978.5 497.6L992.4 501.1L1004.4 497.1L1004.4 488.9Z" fill="url(#mFace)"/>
<path d="M975.0 470.1L976.0 478.0L988.0 481.0L988.0 465.8Z" fill="url(#mFace)"/>
<path d="M988.0 465.8L975.0 470.1L976.0 478.0L990.0 481.5L1001.9 477.4L1001.9 469.2Z" fill="url(#mFace)"/>
<path d="M945.1 500.7L946.1 508.5L958.0 511.5L958.0 496.3Z" fill="url(#mFace)"/>
<path d="M958.0 496.3L945.1 500.7L946.1 508.5L960.0 512.0L972.0 508.0L972.0 499.8Z" fill="url(#mFace)"/>
<path d="M972.6 450.5L973.6 458.3L985.5 461.3L985.5 446.1Z" fill="url(#mFace)"/>
<path d="M985.5 446.1L972.6 450.5L973.6 458.3L987.5 461.8L999.5 457.8L999.5 449.6Z" fill="url(#mFace)"/>
<path d="M912.7 511.6L913.7 519.4L925.6 522.4L925.6 507.2Z" fill="url(#mFace)"/>
<path d="M925.6 507.2L912.7 511.6L913.7 519.4L927.6 522.9L939.6 518.9L939.6 510.7Z" fill="url(#mFace)"/>
<path d="M942.6 481.0L943.6 488.9L955.6 491.9L955.6 476.7Z" fill="url(#mFace)"/>
<path d="M955.6 476.7L942.6 481.0L943.6 488.9L957.5 492.4L969.5 488.3L969.5 480.2Z" fill="url(#mFace)"/>
<path d="M970.1 430.8L971.1 438.7L983.1 441.7L983.1 426.5Z" fill="url(#mFace)"/>
<path d="M983.1 426.5L970.1 430.8L971.1 438.7L985.0 442.2L997.0 438.1L997.0 429.9Z" fill="url(#mFace)"/>
<path d="M940.2 461.4L941.2 469.2L953.1 472.2L953.1 457.0Z" fill="url(#mFace)"/>
<path d="M953.1 457.0L940.2 461.4L941.2 469.2L955.1 472.7L967.1 468.7L967.1 460.5Z" fill="url(#mFace)"/>
<path d="M910.2 491.9L911.2 499.8L923.2 502.8L923.2 487.6Z" fill="url(#mFace)"/>
<path d="M923.2 487.6L910.2 491.9L911.2 499.8L925.1 503.3L937.1 499.3L937.1 491.1Z" fill="url(#mFace)"/>
<path d="M937.7 441.7L938.7 449.6L950.7 452.6L950.7 437.4Z" fill="url(#mFace)"/>
<path d="M950.7 437.4L937.7 441.7L938.7 449.6L952.6 453.1L964.6 449.0L964.6 440.9Z" fill="url(#mFace)"/>
<path d="M907.8 472.3L908.7 480.1L920.7 483.1L920.7 467.9Z" fill="url(#mFace)"/>
<path d="M920.7 467.9L907.8 472.3L908.7 480.1L922.7 483.6L934.7 479.6L934.7 471.4Z" fill="url(#mFace)"/>
<path d="M877.8 502.9L878.8 510.7L890.8 513.7L890.8 498.5Z" fill="url(#mFace)"/>
<path d="M890.8 498.5L877.8 502.9L878.8 510.7L892.7 514.2L904.7 510.2L904.7 502.0Z" fill="url(#mFace)"/>
<path d="M905.3 452.6L906.3 460.5L918.3 463.5L918.3 448.3Z" fill="url(#mFace)"/>
<path d="M918.3 448.3L905.3 452.6L906.3 460.5L920.2 464.0L932.2 460.0L932.2 451.8Z" fill="url(#mFace)"/>
<path d="M875.4 483.2L876.3 491.1L888.3 494.1L888.3 478.8Z" fill="url(#mFace)"/>
<path d="M888.3 478.8L875.4 483.2L876.3 491.1L890.3 494.6L902.3 490.5L902.3 482.3Z" fill="url(#mFace)"/>
<path d="M935.3 422.1L936.2 429.9L948.2 432.9L948.2 417.7Z" fill="url(#mFace)"/>
<path d="M948.2 417.7L935.3 422.1L936.2 429.9L950.2 433.4L962.1 429.4L962.1 421.2Z" fill="url(#mFace)"/>
<path d="M843.0 494.1L843.9 502.0L855.9 505.0L855.9 489.7Z" fill="url(#mFace)"/>
<path d="M855.9 489.7L843.0 494.1L843.9 502.0L857.9 505.5L869.9 501.4L869.9 493.2Z" fill="url(#mFace)"/>
<path d="M902.8 433.0L903.8 440.8L915.8 443.8L915.8 428.6Z" fill="url(#mFace)"/>
<path d="M915.8 428.6L902.8 433.0L903.8 440.8L917.8 444.3L929.7 440.3L929.7 432.1Z" fill="url(#mFace)"/>
<path d="M872.9 463.5L873.9 471.4L885.9 474.4L885.9 459.2Z" fill="url(#mFace)"/>
<path d="M885.9 459.2L872.9 463.5L873.9 471.4L887.8 474.9L899.8 470.9L899.8 462.7Z" fill="url(#mFace)"/>
<path d="M870.4 443.9L871.4 451.8L883.4 454.8L883.4 439.5Z" fill="url(#mFace)"/>
<path d="M883.4 439.5L870.4 443.9L871.4 451.8L885.4 455.2L897.3 451.2L897.3 443.0Z" fill="url(#mFace)"/>
<path d="M840.5 474.5L841.5 482.3L853.5 485.3L853.5 470.1Z" fill="url(#mFace)"/>
<path d="M853.5 470.1L840.5 474.5L841.5 482.3L855.4 485.8L867.4 481.8L867.4 473.6Z" fill="url(#mFace)"/>
<path d="M900.4 413.3L901.4 421.2L913.3 424.2L913.3 409.0Z" fill="url(#mFace)"/>
<path d="M913.3 409.0L900.4 413.3L901.4 421.2L915.3 424.7L927.3 420.7L927.3 412.5Z" fill="url(#mFace)"/>
<path d="M838.0 454.8L839.0 462.7L851.0 465.7L851.0 450.4Z" fill="url(#mFace)"/>
<path d="M851.0 450.4L838.0 454.8L839.0 462.7L853.0 466.2L864.9 462.1L864.9 453.9Z" fill="url(#mFace)"/>
<path d="M868.0 424.2L869.0 432.1L880.9 435.1L880.9 419.9Z" fill="url(#mFace)"/>
<path d="M880.9 419.9L868.0 424.2L869.0 432.1L882.9 435.6L894.9 431.6L894.9 423.4Z" fill="url(#mFace)"/>
<path d="M808.1 485.4L809.1 493.2L821.1 496.2L821.1 481.0Z" fill="url(#mFace)"/>
<path d="M821.1 481.0L808.1 485.4L809.1 493.2L823.0 496.7L835.0 492.7L835.0 484.5Z" fill="url(#mFace)"/>
<path d="M835.6 435.2L836.6 443.0L848.5 446.0L848.5 430.8Z" fill="url(#mFace)"/>
<path d="M848.5 430.8L835.6 435.2L836.6 443.0L850.5 446.5L862.5 442.5L862.5 434.3Z" fill="url(#mFace)"/>
<path d="M805.6 465.7L806.6 473.6L818.6 476.6L818.6 461.4Z" fill="url(#mFace)"/>
<path d="M818.6 461.4L805.6 465.7L806.6 473.6L820.6 477.1L832.5 473.0L832.5 464.9Z" fill="url(#mFace)"/>
<path d="M865.5 404.6L866.5 412.5L878.5 415.5L878.5 400.2Z" fill="url(#mFace)"/>
<path d="M878.5 400.2L865.5 404.6L866.5 412.5L880.5 415.9L892.4 411.9L892.4 403.7Z" fill="url(#mFace)"/>
<path d="M833.1 415.5L834.1 423.4L846.1 426.4L846.1 411.1Z" fill="url(#mFace)"/>
<path d="M846.1 411.1L833.1 415.5L834.1 423.4L848.0 426.9L860.0 422.8L860.0 414.6Z" fill="url(#mFace)"/>
<path d="M803.2 446.1L804.2 453.9L816.1 456.9L816.1 441.7Z" fill="url(#mFace)"/>
<path d="M816.1 441.7L803.2 446.1L804.2 453.9L818.1 457.4L830.1 453.4L830.1 445.2Z" fill="url(#mFace)"/>
<path d="M773.2 476.6L774.2 484.5L786.2 487.5L786.2 472.3Z" fill="url(#mFace)"/>
<path d="M786.2 472.3L773.2 476.6L774.2 484.5L788.2 488.0L800.1 484.0L800.1 475.8Z" fill="url(#mFace)"/>
<path d="M800.7 426.4L801.7 434.3L813.7 437.3L813.7 422.1Z" fill="url(#mFace)"/>
<path d="M813.7 422.1L800.7 426.4L801.7 434.3L815.6 437.8L827.6 433.7L827.6 425.6Z" fill="url(#mFace)"/>
<path d="M830.7 395.9L831.7 403.7L843.6 406.7L843.6 391.5Z" fill="url(#mFace)"/>
<path d="M843.6 391.5L830.7 395.9L831.7 403.7L845.6 407.2L857.6 403.2L857.6 395.0Z" fill="url(#mFace)"/>
<path d="M770.8 457.0L771.8 464.8L783.7 467.8L783.7 452.6Z" fill="url(#mFace)"/>
<path d="M783.7 452.6L770.8 457.0L771.8 464.8L785.7 468.3L797.7 464.3L797.7 456.1Z" fill="url(#mFace)"/>
<path d="M798.3 406.8L799.3 414.6L811.2 417.6L811.2 402.4Z" fill="url(#mFace)"/>
<path d="M811.2 402.4L798.3 406.8L799.3 414.6L813.2 418.1L825.2 414.1L825.2 405.9Z" fill="url(#mFace)"/>
<path d="M738.4 467.9L739.4 475.7L751.3 478.7L751.3 463.5Z" fill="url(#mFace)"/>
<path d="M751.3 463.5L738.4 467.9L739.4 475.7L753.3 479.2L765.3 475.2L765.3 467.0Z" fill="url(#mFace)"/>
<path d="M768.3 437.3L769.3 445.2L781.3 448.2L781.3 433.0Z" fill="url(#mFace)"/>
<path d="M781.3 433.0L768.3 437.3L769.3 445.2L783.2 448.7L795.2 444.6L795.2 436.5Z" fill="url(#mFace)"/>
<path d="M795.8 387.1L796.8 395.0L808.8 398.0L808.8 382.8Z" fill="url(#mFace)"/>
<path d="M808.8 382.8L795.8 387.1L796.8 395.0L810.7 398.5L822.7 394.4L822.7 386.3Z" fill="url(#mFace)"/>
<path d="M765.9 417.7L766.8 425.5L778.8 428.5L778.8 413.3Z" fill="url(#mFace)"/>
<path d="M778.8 413.3L765.9 417.7L766.8 425.5L780.8 429.0L792.8 425.0L792.8 416.8Z" fill="url(#mFace)"/>
<path d="M735.9 448.2L736.9 456.1L748.9 459.1L748.9 443.9Z" fill="url(#mFace)"/>
<path d="M748.9 443.9L735.9 448.2L736.9 456.1L750.8 459.6L762.8 455.6L762.8 447.4Z" fill="url(#mFace)"/>
<path d="M763.4 398.0L764.4 405.9L776.4 408.9L776.4 393.7Z" fill="url(#mFace)"/>
<path d="M776.4 393.7L763.4 398.0L764.4 405.9L778.3 409.4L790.3 405.4L790.3 397.2Z" fill="url(#mFace)"/>
<path d="M733.5 428.6L734.4 436.4L746.4 439.4L746.4 424.2Z" fill="url(#mFace)"/>
<path d="M746.4 424.2L733.5 428.6L734.4 436.4L748.4 439.9L760.4 435.9L760.4 427.7Z" fill="url(#mFace)"/>
<path d="M703.5 459.2L704.5 467.0L716.5 470.0L716.5 454.8Z" fill="url(#mFace)"/>
<path d="M716.5 454.8L703.5 459.2L704.5 467.0L718.4 470.5L730.4 466.5L730.4 458.3Z" fill="url(#mFace)"/>
<path d="M731.0 408.9L732.0 416.8L744.0 419.8L744.0 404.6Z" fill="url(#mFace)"/>
<path d="M744.0 404.6L731.0 408.9L732.0 416.8L745.9 420.3L757.9 416.3L757.9 408.1Z" fill="url(#mFace)"/>
<path d="M701.1 439.5L702.0 447.4L714.0 450.4L714.0 435.1Z" fill="url(#mFace)"/>
<path d="M714.0 435.1L701.1 439.5L702.0 447.4L716.0 450.9L728.0 446.8L728.0 438.6Z" fill="url(#mFace)"/>
<path d="M761.0 378.4L761.9 386.2L773.9 389.2L773.9 374.0Z" fill="url(#mFace)"/>
<path d="M773.9 374.0L761.0 378.4L761.9 386.2L775.9 389.7L787.8 385.7L787.8 377.5Z" fill="url(#mFace)"/>
<path d="M668.7 450.4L669.6 458.3L681.6 461.3L681.6 446.1Z" fill="url(#mFace)"/>
<path d="M681.6 446.1L668.7 450.4L669.6 458.3L683.6 461.8L695.5 457.7L695.5 449.5Z" fill="url(#mFace)"/>
<path d="M698.6 419.9L699.6 427.7L711.6 430.7L711.6 415.5Z" fill="url(#mFace)"/>
<path d="M711.6 415.5L698.6 419.9L699.6 427.7L713.5 431.2L725.5 427.2L725.5 419.0Z" fill="url(#mFace)"/>
<path d="M728.6 389.3L729.5 397.1L741.5 400.1L741.5 384.9Z" fill="url(#mFace)"/>
<path d="M741.5 384.9L728.6 389.3L729.5 397.1L743.5 400.6L755.4 396.6L755.4 388.4Z" fill="url(#mFace)"/>
<path d="M696.1 400.2L697.1 408.1L709.1 411.1L709.1 395.8Z" fill="url(#mFace)"/>
<path d="M709.1 395.8L696.1 400.2L697.1 408.1L711.1 411.6L723.0 407.5L723.0 399.3Z" fill="url(#mFace)"/>
<path d="M726.1 369.6L727.1 377.5L739.0 380.5L739.0 365.3Z" fill="url(#mFace)"/>
<path d="M739.0 365.3L726.1 369.6L727.1 377.5L741.0 381.0L753.0 377.0L753.0 368.8Z" fill="url(#mFace)"/>
<path d="M666.2 430.8L667.2 438.6L679.2 441.6L679.2 426.4Z" fill="url(#mFace)"/>
<path d="M679.2 426.4L666.2 430.8L667.2 438.6L681.1 442.1L693.1 438.1L693.1 429.9Z" fill="url(#mFace)"/>
<path d="M663.7 411.1L664.7 419.0L676.7 422.0L676.7 406.8Z" fill="url(#mFace)"/>
<path d="M676.7 406.8L663.7 411.1L664.7 419.0L678.7 422.5L690.6 418.4L690.6 410.2Z" fill="url(#mFace)"/>
<path d="M693.7 380.6L694.7 388.4L706.6 391.4L706.6 376.2Z" fill="url(#mFace)"/>
<path d="M706.6 376.2L693.7 380.6L694.7 388.4L708.6 391.9L720.6 387.9L720.6 379.7Z" fill="url(#mFace)"/>
<path d="M633.8 441.7L634.8 449.5L646.8 452.5L646.8 437.3Z" fill="url(#mFace)"/>
<path d="M646.8 437.3L633.8 441.7L634.8 449.5L648.7 453.0L660.7 449.0L660.7 440.8Z" fill="url(#mFace)"/>
<path d="M691.2 360.9L692.2 368.8L704.2 371.8L704.2 356.5Z" fill="url(#mFace)"/>
<path d="M704.2 356.5L691.2 360.9L692.2 368.8L706.2 372.3L718.1 368.2L718.1 360.0Z" fill="url(#mFace)"/>
<path d="M661.3 391.5L662.3 399.3L674.2 402.3L674.2 387.1Z" fill="url(#mFace)"/>
<path d="M674.2 387.1L661.3 391.5L662.3 399.3L676.2 402.8L688.2 398.8L688.2 390.6Z" fill="url(#mFace)"/>
<path d="M631.3 422.0L632.3 429.9L644.3 432.9L644.3 417.7Z" fill="url(#mFace)"/>
<path d="M644.3 417.7L631.3 422.0L632.3 429.9L646.3 433.4L658.2 429.3L658.2 421.2Z" fill="url(#mFace)"/>
<path d="M658.8 371.8L659.8 379.7L671.8 382.7L671.8 367.5Z" fill="url(#mFace)"/>
<path d="M671.8 367.5L658.8 371.8L659.8 379.7L673.8 383.2L685.7 379.1L685.7 370.9Z" fill="url(#mFace)"/>
<path d="M628.9 402.4L629.9 410.2L641.8 413.2L641.8 398.0Z" fill="url(#mFace)"/>
<path d="M641.8 398.0L628.9 402.4L629.9 410.2L643.8 413.7L655.8 409.7L655.8 401.5Z" fill="url(#mFace)"/>
<path d="M598.9 432.9L599.9 440.8L611.9 443.8L611.9 428.6Z" fill="url(#mFace)"/>
<path d="M611.9 428.6L598.9 432.9L599.9 440.8L613.9 444.3L625.8 440.3L625.8 432.1Z" fill="url(#mFace)"/>
<path d="M656.4 352.2L657.4 360.0L669.3 363.0L669.3 347.8Z" fill="url(#mFace)"/>
<path d="M669.3 347.8L656.4 352.2L657.4 360.0L671.3 363.5L683.3 359.5L683.3 351.3Z" fill="url(#mFace)"/>
<path d="M626.4 382.7L627.4 390.6L639.4 393.6L639.4 378.4Z" fill="url(#mFace)"/>
<path d="M639.4 378.4L626.4 382.7L627.4 390.6L641.3 394.1L653.3 390.0L653.3 381.9Z" fill="url(#mFace)"/>
<path d="M596.5 413.3L597.5 421.1L609.4 424.1L609.4 408.9Z" fill="url(#mFace)"/>
<path d="M609.4 408.9L596.5 413.3L597.5 421.1L611.4 424.6L623.4 420.6L623.4 412.4Z" fill="url(#mFace)"/>
<path d="M624.0 363.1L625.0 370.9L636.9 373.9L636.9 358.7Z" fill="url(#mFace)"/>
<path d="M636.9 358.7L624.0 363.1L625.0 370.9L638.9 374.4L650.9 370.4L650.9 362.2Z" fill="url(#mFace)"/>
<path d="M594.0 393.6L595.0 401.5L607.0 404.5L607.0 389.3Z" fill="url(#mFace)"/>
<path d="M607.0 389.3L594.0 393.6L595.0 401.5L608.9 405.0L620.9 401.0L620.9 392.8Z" fill="url(#mFace)"/>
<path d="M564.1 424.2L565.1 432.1L577.0 435.1L577.0 419.8Z" fill="url(#mFace)"/>
<path d="M577.0 419.8L564.1 424.2L565.1 432.1L579.0 435.5L591.0 431.5L591.0 423.3Z" fill="url(#mFace)"/>
<path d="M621.5 343.4L622.5 351.3L634.5 354.3L634.5 339.1Z" fill="url(#mFace)"/>
<path d="M634.5 339.1L621.5 343.4L622.5 351.3L636.4 354.8L648.4 350.7L648.4 342.6Z" fill="url(#mFace)"/>
<path d="M591.6 374.0L592.6 381.8L604.5 384.8L604.5 369.6Z" fill="url(#mFace)"/>
<path d="M604.5 369.6L591.6 374.0L592.6 381.8L606.5 385.3L618.5 381.3L618.5 373.1Z" fill="url(#mFace)"/>
<path d="M561.6 404.5L562.6 412.4L574.6 415.4L574.6 400.2Z" fill="url(#mFace)"/>
<path d="M574.6 400.2L561.6 404.5L562.6 412.4L576.5 415.9L588.5 411.9L588.5 403.7Z" fill="url(#mFace)"/>
<path d="M589.1 354.3L590.1 362.2L602.1 365.2L602.1 350.0Z" fill="url(#mFace)"/>
<path d="M602.1 350.0L589.1 354.3L590.1 362.2L604.0 365.7L616.0 361.7L616.0 353.5Z" fill="url(#mFace)"/>
<path d="M559.2 384.9L560.1 392.8L572.1 395.8L572.1 380.5Z" fill="url(#mFace)"/>
<path d="M572.1 380.5L559.2 384.9L560.1 392.8L574.1 396.2L586.1 392.2L586.1 384.0Z" fill="url(#mFace)"/>
<path d="M529.2 415.5L530.2 423.3L542.2 426.3L542.2 411.1Z" fill="url(#mFace)"/>
<path d="M542.2 411.1L529.2 415.5L530.2 423.3L544.1 426.8L556.1 422.8L556.1 414.6Z" fill="url(#mFace)"/>
<path d="M586.7 334.7L587.6 342.5L599.6 345.5L599.6 330.3Z" fill="url(#mFace)"/>
<path d="M599.6 330.3L586.7 334.7L587.6 342.5L601.6 346.0L613.5 342.0L613.5 333.8Z" fill="url(#mFace)"/>
<path d="M556.7 365.2L557.7 373.1L569.7 376.1L569.7 360.9Z" fill="url(#mFace)"/>
<path d="M569.7 360.9L556.7 365.2L557.7 373.1L571.6 376.6L583.6 372.6L583.6 364.4Z" fill="url(#mFace)"/>
<path d="M526.8 395.8L527.7 403.7L539.7 406.7L539.7 391.4Z" fill="url(#mFace)"/>
<path d="M539.7 391.4L526.8 395.8L527.7 403.7L541.7 407.2L553.7 403.1L553.7 394.9Z" fill="url(#mFace)"/>
<path d="M554.3 345.6L555.2 353.5L567.2 356.5L567.2 341.2Z" fill="url(#mFace)"/>
<path d="M567.2 341.2L554.3 345.6L555.2 353.5L569.2 356.9L581.1 352.9L581.1 344.7Z" fill="url(#mFace)"/>
<path d="M524.3 376.2L525.3 384.0L537.3 387.0L537.3 371.8Z" fill="url(#mFace)"/>
<path d="M537.3 371.8L524.3 376.2L525.3 384.0L539.2 387.5L551.2 383.5L551.2 375.3Z" fill="url(#mFace)"/>
<path d="M494.4 406.7L495.3 414.6L507.3 417.6L507.3 402.4Z" fill="url(#mFace)"/>
<path d="M507.3 402.4L494.4 406.7L495.3 414.6L509.3 418.1L521.2 414.0L521.2 405.8Z" fill="url(#mFace)"/>
<path d="M551.8 325.9L552.8 333.8L564.8 336.8L564.8 321.6Z" fill="url(#mFace)"/>
<path d="M564.8 321.6L551.8 325.9L552.8 333.8L566.7 337.3L578.7 333.3L578.7 325.1Z" fill="url(#mFace)"/>
<path d="M521.9 356.5L522.8 364.4L534.8 367.4L534.8 352.1Z" fill="url(#mFace)"/>
<path d="M534.8 352.1L521.9 356.5L522.8 364.4L536.8 367.9L548.7 363.8L548.7 355.6Z" fill="url(#mFace)"/>
<path d="M491.9 387.1L492.9 394.9L504.9 397.9L504.9 382.7Z" fill="url(#mFace)"/>
<path d="M504.9 382.7L491.9 387.1L492.9 394.9L506.8 398.4L518.8 394.4L518.8 386.2Z" fill="url(#mFace)"/>
<path d="M519.4 336.9L520.4 344.7L532.4 347.7L532.4 332.5Z" fill="url(#mFace)"/>
<path d="M532.4 332.5L519.4 336.9L520.4 344.7L534.3 348.2L546.3 344.2L546.3 336.0Z" fill="url(#mFace)"/>
<path d="M489.4 367.4L490.4 375.3L502.4 378.3L502.4 363.1Z" fill="url(#mFace)"/>
<path d="M502.4 363.1L489.4 367.4L490.4 375.3L504.4 378.8L516.3 374.7L516.3 366.5Z" fill="url(#mFace)"/>
<path d="M459.5 398.0L460.5 405.8L472.5 408.8L472.5 393.6Z" fill="url(#mFace)"/>
<path d="M472.5 393.6L459.5 398.0L460.5 405.8L474.4 409.3L486.4 405.3L486.4 397.1Z" fill="url(#mFace)"/>
<path d="M516.9 317.2L517.9 325.1L529.9 328.1L529.9 312.8Z" fill="url(#mFace)"/>
<path d="M529.9 312.8L516.9 317.2L517.9 325.1L531.9 328.6L543.8 324.5L543.8 316.3Z" fill="url(#mFace)"/>
<path d="M487.0 347.8L488.0 355.6L499.9 358.6L499.9 343.4Z" fill="url(#mFace)"/>
<path d="M499.9 343.4L487.0 347.8L488.0 355.6L501.9 359.1L513.9 355.1L513.9 346.9Z" fill="url(#mFace)"/>
<path d="M457.0 378.3L458.0 386.2L470.0 389.2L470.0 374.0Z" fill="url(#mFace)"/>
<path d="M470.0 374.0L457.0 378.3L458.0 386.2L472.0 389.7L483.9 385.6L483.9 377.5Z" fill="url(#mFace)"/>
<path d="M484.5 328.1L485.5 336.0L497.5 339.0L497.5 323.8Z" fill="url(#mFace)"/>
<path d="M497.5 323.8L484.5 328.1L485.5 336.0L499.5 339.5L511.4 335.4L511.4 327.3Z" fill="url(#mFace)"/>
<path d="M454.6 358.7L455.6 366.5L467.5 369.5L467.5 354.3Z" fill="url(#mFace)"/>
<path d="M467.5 354.3L454.6 358.7L455.6 366.5L469.5 370.0L481.5 366.0L481.5 357.8Z" fill="url(#mFace)"/>
<path d="M424.6 389.2L425.6 397.1L437.6 400.1L437.6 384.9Z" fill="url(#mFace)"/>
<path d="M437.6 384.9L424.6 389.2L425.6 397.1L439.6 400.6L451.5 396.6L451.5 388.4Z" fill="url(#mFace)"/>
<path d="M482.1 308.5L483.1 316.3L495.0 319.3L495.0 304.1Z" fill="url(#mFace)"/>
<path d="M495.0 304.1L482.1 308.5L483.1 316.3L497.0 319.8L509.0 315.8L509.0 307.6Z" fill="url(#mFace)"/>
<path d="M422.2 369.6L423.2 377.4L435.1 380.4L435.1 365.2Z" fill="url(#mFace)"/>
<path d="M435.1 365.2L422.2 369.6L423.2 377.4L437.1 380.9L449.1 376.9L449.1 368.7Z" fill="url(#mFace)"/>
<path d="M452.1 339.0L453.1 346.9L465.1 349.9L465.1 334.7Z" fill="url(#mFace)"/>
<path d="M465.1 334.7L452.1 339.0L453.1 346.9L467.1 350.4L479.0 346.3L479.0 338.2Z" fill="url(#mFace)"/>
<path d="M449.7 319.4L450.7 327.2L462.6 330.2L462.6 315.0Z" fill="url(#mFace)"/>
<path d="M462.6 315.0L449.7 319.4L450.7 327.2L464.6 330.7L476.6 326.7L476.6 318.5Z" fill="url(#mFace)"/>
<path d="M419.7 349.9L420.7 357.8L432.7 360.8L432.7 345.6Z" fill="url(#mFace)"/>
<path d="M432.7 345.6L419.7 349.9L420.7 357.8L434.6 361.3L446.6 357.3L446.6 349.1Z" fill="url(#mFace)"/>
<path d="M389.8 380.5L390.8 388.4L402.7 391.4L402.7 376.1Z" fill="url(#mFace)"/>
<path d="M402.7 376.1L389.8 380.5L390.8 388.4L404.7 391.8L416.7 387.8L416.7 379.6Z" fill="url(#mFace)"/>
<path d="M417.3 330.3L418.3 338.1L430.2 341.1L430.2 325.9Z" fill="url(#mFace)"/>
<path d="M430.2 325.9L417.3 330.3L418.3 338.1L432.2 341.6L444.2 337.6L444.2 329.4Z" fill="url(#mFace)"/>
<path d="M387.3 360.8L388.3 368.7L400.3 371.7L400.3 356.5Z" fill="url(#mFace)"/>
<path d="M400.3 356.5L387.3 360.8L388.3 368.7L402.2 372.2L414.2 368.2L414.2 360.0Z" fill="url(#mFace)"/>
<path d="M447.2 299.7L448.2 307.6L460.2 310.6L460.2 295.4Z" fill="url(#mFace)"/>
<path d="M460.2 295.4L447.2 299.7L448.2 307.6L462.1 311.1L474.1 307.1L474.1 298.9Z" fill="url(#mFace)"/>
<path d="M384.9 341.2L385.9 349.1L397.8 352.1L397.8 336.8Z" fill="url(#mFace)"/>
<path d="M397.8 336.8L384.9 341.2L385.9 349.1L399.8 352.5L411.8 348.5L411.8 340.3Z" fill="url(#mFace)"/>
<path d="M414.8 310.6L415.8 318.5L427.8 321.5L427.8 306.3Z" fill="url(#mFace)"/>
<path d="M427.8 306.3L414.8 310.6L415.8 318.5L429.7 322.0L441.7 318.0L441.7 309.8Z" fill="url(#mFace)"/>
<path d="M354.9 371.8L355.9 379.6L367.9 382.6L367.9 367.4Z" fill="url(#mFace)"/>
<path d="M367.9 367.4L354.9 371.8L355.9 379.6L369.8 383.1L381.8 379.1L381.8 370.9Z" fill="url(#mFace)"/>
<path d="M382.4 321.6L383.4 329.4L395.4 332.4L395.4 317.2Z" fill="url(#mFace)"/>
<path d="M395.4 317.2L382.4 321.6L383.4 329.4L397.3 332.9L409.3 328.9L409.3 320.7Z" fill="url(#mFace)"/>
<path d="M352.5 352.1L353.4 360.0L365.4 363.0L365.4 347.7Z" fill="url(#mFace)"/>
<path d="M365.4 347.7L352.5 352.1L353.4 360.0L367.4 363.5L379.4 359.4L379.4 351.2Z" fill="url(#mFace)"/>
<path d="M380.0 301.9L380.9 309.8L392.9 312.8L392.9 297.5Z" fill="url(#mFace)"/>
<path d="M392.9 297.5L380.0 301.9L380.9 309.8L394.9 313.3L406.9 309.2L406.9 301.0Z" fill="url(#mFace)"/>
<path d="M350.0 332.5L351.0 340.3L363.0 343.3L363.0 328.1Z" fill="url(#mFace)"/>
<path d="M363.0 328.1L350.0 332.5L351.0 340.3L364.9 343.8L376.9 339.8L376.9 331.6Z" fill="url(#mFace)"/>
<path d="M317.6 343.4L318.6 351.2L330.6 354.2L330.6 339.0Z" fill="url(#mFace)"/>
<path d="M330.6 339.0L317.6 343.4L318.6 351.2L332.5 354.7L344.5 350.7L344.5 342.5Z" fill="url(#mFace)"/>
<path d="M347.6 312.8L348.5 320.7L360.5 323.7L360.5 308.5Z" fill="url(#mFace)"/>
<path d="M360.5 308.5L347.6 312.8L348.5 320.7L362.5 324.2L374.5 320.1L374.5 311.9Z" fill="url(#mFace)"/>
<path d="M315.2 323.7L316.1 331.6L328.1 334.6L328.1 319.4Z" fill="url(#mFace)"/>
<path d="M328.1 319.4L315.2 323.7L316.1 331.6L330.1 335.1L342.0 331.0L342.0 322.9Z" fill="url(#mFace)"/>
<path d="M345.1 293.2L346.1 301.0L358.1 304.0L358.1 288.8Z" fill="url(#mFace)"/>
<path d="M358.1 288.8L345.1 293.2L346.1 301.0L360.0 304.5L372.0 300.5L372.0 292.3Z" fill="url(#mFace)"/>
<path d="M312.7 304.1L313.7 311.9L325.7 314.9L325.7 299.7Z" fill="url(#mFace)"/>
<path d="M325.7 299.7L312.7 304.1L313.7 311.9L327.6 315.4L339.6 311.4L339.6 303.2Z" fill="url(#mFace)"/>
<path d="M280.3 315.0L281.3 322.8L293.3 325.8L293.3 310.6Z" fill="url(#mFace)"/>
<path d="M293.3 310.6L280.3 315.0L281.3 322.8L295.2 326.3L307.2 322.3L307.2 314.1Z" fill="url(#mFace)"/>
<path d="M277.8 295.3L278.8 303.2L290.8 306.2L290.8 291.0Z" fill="url(#mFace)"/>
<path d="M290.8 291.0L277.8 295.3L278.8 303.2L292.8 306.7L304.7 302.7L304.7 294.5Z" fill="url(#mFace)"/>
<path d="M1134.3 555.7L1147.3 551.4L1146.3 543.5L1132.4 540.0L1132.4 555.2Z" fill="url(#mFaceR)"/>
<path d="M1147.3 551.4L1146.3 543.5L1146.3 551.7Z" fill="url(#mFaceR)"/>
<path d="M1164.3 525.2L1177.2 520.8L1176.2 512.9L1162.3 509.5L1162.3 524.7Z" fill="url(#mFaceR)"/>
<path d="M1177.2 520.8L1176.2 512.9L1176.2 521.1Z" fill="url(#mFaceR)"/>
<path d="M1161.8 505.5L1174.8 501.2L1173.8 493.3L1159.8 489.8L1159.8 505.0Z" fill="url(#mFaceR)"/>
<path d="M1174.8 501.2L1173.8 493.3L1173.8 501.5Z" fill="url(#mFaceR)"/>
<path d="M1131.9 536.1L1144.8 531.7L1143.8 523.9L1129.9 520.4L1129.9 535.6Z" fill="url(#mFaceR)"/>
<path d="M1144.8 531.7L1143.8 523.9L1143.8 532.0Z" fill="url(#mFaceR)"/>
<path d="M1099.5 547.0L1112.4 542.6L1111.4 534.8L1097.5 531.3L1097.5 546.5Z" fill="url(#mFaceR)"/>
<path d="M1112.4 542.6L1111.4 534.8L1111.4 543.0Z" fill="url(#mFaceR)"/>
<path d="M1129.4 516.4L1142.4 512.1L1141.4 504.2L1127.4 500.7L1127.4 515.9Z" fill="url(#mFaceR)"/>
<path d="M1142.4 512.1L1141.4 504.2L1141.4 512.4Z" fill="url(#mFaceR)"/>
<path d="M1126.9 496.8L1139.9 492.4L1138.9 484.6L1125.0 481.1L1125.0 496.3Z" fill="url(#mFaceR)"/>
<path d="M1139.9 492.4L1138.9 484.6L1138.9 492.7Z" fill="url(#mFaceR)"/>
<path d="M1097.0 527.3L1109.9 523.0L1109.0 515.1L1095.0 511.6L1095.0 526.8Z" fill="url(#mFaceR)"/>
<path d="M1109.9 523.0L1109.0 515.1L1109.0 523.3Z" fill="url(#mFaceR)"/>
<path d="M1094.5 507.7L1107.5 503.3L1106.5 495.5L1092.6 492.0L1092.6 507.2Z" fill="url(#mFaceR)"/>
<path d="M1107.5 503.3L1106.5 495.5L1106.5 503.7Z" fill="url(#mFaceR)"/>
<path d="M1064.6 538.2L1077.5 533.9L1076.6 526.0L1062.6 522.5L1062.6 537.8Z" fill="url(#mFaceR)"/>
<path d="M1077.5 533.9L1076.6 526.0L1076.6 534.2Z" fill="url(#mFaceR)"/>
<path d="M1092.1 488.0L1105.0 483.7L1104.0 475.8L1090.1 472.3L1090.1 487.5Z" fill="url(#mFaceR)"/>
<path d="M1105.0 483.7L1104.0 475.8L1104.0 484.0Z" fill="url(#mFaceR)"/>
<path d="M1062.1 518.6L1075.1 514.2L1074.1 506.4L1060.2 502.9L1060.2 518.1Z" fill="url(#mFaceR)"/>
<path d="M1075.1 514.2L1074.1 506.4L1074.1 514.6Z" fill="url(#mFaceR)"/>
<path d="M1029.7 529.5L1042.7 525.1L1041.7 517.3L1027.8 513.8L1027.8 529.0Z" fill="url(#mFaceR)"/>
<path d="M1042.7 525.1L1041.7 517.3L1041.7 525.5Z" fill="url(#mFaceR)"/>
<path d="M1059.7 498.9L1072.6 494.6L1071.6 486.7L1057.7 483.2L1057.7 498.5Z" fill="url(#mFaceR)"/>
<path d="M1072.6 494.6L1071.6 486.7L1071.6 494.9Z" fill="url(#mFaceR)"/>
<path d="M1057.2 479.3L1070.2 474.9L1069.2 467.1L1055.2 463.6L1055.2 478.8Z" fill="url(#mFaceR)"/>
<path d="M1070.2 474.9L1069.2 467.1L1069.2 475.3Z" fill="url(#mFaceR)"/>
<path d="M1027.3 509.9L1040.2 505.5L1039.2 497.6L1025.3 494.1L1025.3 509.4Z" fill="url(#mFaceR)"/>
<path d="M1040.2 505.5L1039.2 497.6L1039.2 505.8Z" fill="url(#mFaceR)"/>
<path d="M994.9 520.8L1007.8 516.4L1006.8 508.6L992.9 505.1L992.9 520.3Z" fill="url(#mFaceR)"/>
<path d="M1007.8 516.4L1006.8 508.6L1006.8 516.7Z" fill="url(#mFaceR)"/>
<path d="M1024.8 490.2L1037.8 485.8L1036.8 478.0L1022.8 474.5L1022.8 489.7Z" fill="url(#mFaceR)"/>
<path d="M1037.8 485.8L1036.8 478.0L1036.8 486.2Z" fill="url(#mFaceR)"/>
<path d="M1022.4 470.6L1035.3 466.2L1034.3 458.3L1020.4 454.8L1020.4 470.1Z" fill="url(#mFaceR)"/>
<path d="M1035.3 466.2L1034.3 458.3L1034.3 466.5Z" fill="url(#mFaceR)"/>
<path d="M992.4 501.1L1005.4 496.8L1004.4 488.9L990.4 485.4L990.4 500.6Z" fill="url(#mFaceR)"/>
<path d="M1005.4 496.8L1004.4 488.9L1004.4 497.1Z" fill="url(#mFaceR)"/>
<path d="M990.0 481.5L1002.9 477.1L1001.9 469.2L988.0 465.8L988.0 481.0Z" fill="url(#mFaceR)"/>
<path d="M1002.9 477.1L1001.9 469.2L1001.9 477.4Z" fill="url(#mFaceR)"/>
<path d="M960.0 512.0L973.0 507.7L972.0 499.8L958.0 496.3L958.0 511.5Z" fill="url(#mFaceR)"/>
<path d="M973.0 507.7L972.0 499.8L972.0 508.0Z" fill="url(#mFaceR)"/>
<path d="M987.5 461.8L1000.4 457.5L999.5 449.6L985.5 446.1L985.5 461.3Z" fill="url(#mFaceR)"/>
<path d="M1000.4 457.5L999.5 449.6L999.5 457.8Z" fill="url(#mFaceR)"/>
<path d="M927.6 522.9L940.6 518.6L939.6 510.7L925.6 507.2L925.6 522.4Z" fill="url(#mFaceR)"/>
<path d="M940.6 518.6L939.6 510.7L939.6 518.9Z" fill="url(#mFaceR)"/>
<path d="M957.5 492.4L970.5 488.0L969.5 480.2L955.6 476.7L955.6 491.9Z" fill="url(#mFaceR)"/>
<path d="M970.5 488.0L969.5 480.2L969.5 488.3Z" fill="url(#mFaceR)"/>
<path d="M985.0 442.2L998.0 437.8L997.0 429.9L983.1 426.5L983.1 441.7Z" fill="url(#mFaceR)"/>
<path d="M998.0 437.8L997.0 429.9L997.0 438.1Z" fill="url(#mFaceR)"/>
<path d="M955.1 472.7L968.0 468.4L967.1 460.5L953.1 457.0L953.1 472.2Z" fill="url(#mFaceR)"/>
<path d="M968.0 468.4L967.1 460.5L967.1 468.7Z" fill="url(#mFaceR)"/>
<path d="M925.1 503.3L938.1 498.9L937.1 491.1L923.2 487.6L923.2 502.8Z" fill="url(#mFaceR)"/>
<path d="M938.1 498.9L937.1 491.1L937.1 499.3Z" fill="url(#mFaceR)"/>
<path d="M952.6 453.1L965.6 448.7L964.6 440.9L950.7 437.4L950.7 452.6Z" fill="url(#mFaceR)"/>
<path d="M965.6 448.7L964.6 440.9L964.6 449.0Z" fill="url(#mFaceR)"/>
<path d="M922.7 483.6L935.6 479.3L934.7 471.4L920.7 467.9L920.7 483.1Z" fill="url(#mFaceR)"/>
<path d="M935.6 479.3L934.7 471.4L934.7 479.6Z" fill="url(#mFaceR)"/>
<path d="M892.7 514.2L905.7 509.8L904.7 502.0L890.8 498.5L890.8 513.7Z" fill="url(#mFaceR)"/>
<path d="M905.7 509.8L904.7 502.0L904.7 510.2Z" fill="url(#mFaceR)"/>
<path d="M920.2 464.0L933.2 459.6L932.2 451.8L918.3 448.3L918.3 463.5Z" fill="url(#mFaceR)"/>
<path d="M933.2 459.6L932.2 451.8L932.2 460.0Z" fill="url(#mFaceR)"/>
<path d="M890.3 494.6L903.2 490.2L902.3 482.3L888.3 478.8L888.3 494.1Z" fill="url(#mFaceR)"/>
<path d="M903.2 490.2L902.3 482.3L902.3 490.5Z" fill="url(#mFaceR)"/>
<path d="M950.2 433.4L963.1 429.1L962.1 421.2L948.2 417.7L948.2 432.9Z" fill="url(#mFaceR)"/>
<path d="M963.1 429.1L962.1 421.2L962.1 429.4Z" fill="url(#mFaceR)"/>
<path d="M857.9 505.5L870.8 501.1L869.9 493.2L855.9 489.7L855.9 505.0Z" fill="url(#mFaceR)"/>
<path d="M870.8 501.1L869.9 493.2L869.9 501.4Z" fill="url(#mFaceR)"/>
<path d="M917.8 444.3L930.7 440.0L929.7 432.1L915.8 428.6L915.8 443.8Z" fill="url(#mFaceR)"/>
<path d="M930.7 440.0L929.7 432.1L929.7 440.3Z" fill="url(#mFaceR)"/>
<path d="M887.8 474.9L900.8 470.5L899.8 462.7L885.9 459.2L885.9 474.4Z" fill="url(#mFaceR)"/>
<path d="M900.8 470.5L899.8 462.7L899.8 470.9Z" fill="url(#mFaceR)"/>
<path d="M885.4 455.2L898.3 450.9L897.3 443.0L883.4 439.5L883.4 454.8Z" fill="url(#mFaceR)"/>
<path d="M898.3 450.9L897.3 443.0L897.3 451.2Z" fill="url(#mFaceR)"/>
<path d="M855.4 485.8L868.4 481.4L867.4 473.6L853.5 470.1L853.5 485.3Z" fill="url(#mFaceR)"/>
<path d="M868.4 481.4L867.4 473.6L867.4 481.8Z" fill="url(#mFaceR)"/>
<path d="M915.3 424.7L928.3 420.3L927.3 412.5L913.3 409.0L913.3 424.2Z" fill="url(#mFaceR)"/>
<path d="M928.3 420.3L927.3 412.5L927.3 420.7Z" fill="url(#mFaceR)"/>
<path d="M853.0 466.2L865.9 461.8L864.9 453.9L851.0 450.4L851.0 465.7Z" fill="url(#mFaceR)"/>
<path d="M865.9 461.8L864.9 453.9L864.9 462.1Z" fill="url(#mFaceR)"/>
<path d="M882.9 435.6L895.9 431.2L894.9 423.4L880.9 419.9L880.9 435.1Z" fill="url(#mFaceR)"/>
<path d="M895.9 431.2L894.9 423.4L894.9 431.6Z" fill="url(#mFaceR)"/>
<path d="M823.0 496.7L836.0 492.4L835.0 484.5L821.1 481.0L821.1 496.2Z" fill="url(#mFaceR)"/>
<path d="M836.0 492.4L835.0 484.5L835.0 492.7Z" fill="url(#mFaceR)"/>
<path d="M850.5 446.5L863.5 442.1L862.5 434.3L848.5 430.8L848.5 446.0Z" fill="url(#mFaceR)"/>
<path d="M863.5 442.1L862.5 434.3L862.5 442.5Z" fill="url(#mFaceR)"/>
<path d="M820.6 477.1L833.5 472.7L832.5 464.9L818.6 461.4L818.6 476.6Z" fill="url(#mFaceR)"/>
<path d="M833.5 472.7L832.5 464.9L832.5 473.0Z" fill="url(#mFaceR)"/>
<path d="M880.5 415.9L893.4 411.6L892.4 403.7L878.5 400.2L878.5 415.5Z" fill="url(#mFaceR)"/>
<path d="M893.4 411.6L892.4 403.7L892.4 411.9Z" fill="url(#mFaceR)"/>
<path d="M848.0 426.9L861.0 422.5L860.0 414.6L846.1 411.1L846.1 426.4Z" fill="url(#mFaceR)"/>
<path d="M861.0 422.5L860.0 414.6L860.0 422.8Z" fill="url(#mFaceR)"/>
<path d="M818.1 457.4L831.1 453.1L830.1 445.2L816.1 441.7L816.1 456.9Z" fill="url(#mFaceR)"/>
<path d="M831.1 453.1L830.1 445.2L830.1 453.4Z" fill="url(#mFaceR)"/>
<path d="M788.2 488.0L801.1 483.6L800.1 475.8L786.2 472.3L786.2 487.5Z" fill="url(#mFaceR)"/>
<path d="M801.1 483.6L800.1 475.8L800.1 484.0Z" fill="url(#mFaceR)"/>
<path d="M815.6 437.8L828.6 433.4L827.6 425.6L813.7 422.1L813.7 437.3Z" fill="url(#mFaceR)"/>
<path d="M828.6 433.4L827.6 425.6L827.6 433.7Z" fill="url(#mFaceR)"/>
<path d="M845.6 407.2L858.5 402.8L857.6 395.0L843.6 391.5L843.6 406.7Z" fill="url(#mFaceR)"/>
<path d="M858.5 402.8L857.6 395.0L857.6 403.2Z" fill="url(#mFaceR)"/>
<path d="M785.7 468.3L798.7 464.0L797.7 456.1L783.7 452.6L783.7 467.8Z" fill="url(#mFaceR)"/>
<path d="M798.7 464.0L797.7 456.1L797.7 464.3Z" fill="url(#mFaceR)"/>
<path d="M813.2 418.1L826.1 413.8L825.2 405.9L811.2 402.4L811.2 417.6Z" fill="url(#mFaceR)"/>
<path d="M826.1 413.8L825.2 405.9L825.2 414.1Z" fill="url(#mFaceR)"/>
<path d="M753.3 479.2L766.3 474.9L765.3 467.0L751.3 463.5L751.3 478.7Z" fill="url(#mFaceR)"/>
<path d="M766.3 474.9L765.3 467.0L765.3 475.2Z" fill="url(#mFaceR)"/>
<path d="M783.2 448.7L796.2 444.3L795.2 436.5L781.3 433.0L781.3 448.2Z" fill="url(#mFaceR)"/>
<path d="M796.2 444.3L795.2 436.5L795.2 444.6Z" fill="url(#mFaceR)"/>
<path d="M810.7 398.5L823.7 394.1L822.7 386.3L808.8 382.8L808.8 398.0Z" fill="url(#mFaceR)"/>
<path d="M823.7 394.1L822.7 386.3L822.7 394.4Z" fill="url(#mFaceR)"/>
<path d="M780.8 429.0L793.7 424.7L792.8 416.8L778.8 413.3L778.8 428.5Z" fill="url(#mFaceR)"/>
<path d="M793.7 424.7L792.8 416.8L792.8 425.0Z" fill="url(#mFaceR)"/>
<path d="M750.8 459.6L763.8 455.2L762.8 447.4L748.9 443.9L748.9 459.1Z" fill="url(#mFaceR)"/>
<path d="M763.8 455.2L762.8 447.4L762.8 455.6Z" fill="url(#mFaceR)"/>
<path d="M778.3 409.4L791.3 405.0L790.3 397.2L776.4 393.7L776.4 408.9Z" fill="url(#mFaceR)"/>
<path d="M791.3 405.0L790.3 397.2L790.3 405.4Z" fill="url(#mFaceR)"/>
<path d="M748.4 439.9L761.3 435.6L760.4 427.7L746.4 424.2L746.4 439.4Z" fill="url(#mFaceR)"/>
<path d="M761.3 435.6L760.4 427.7L760.4 435.9Z" fill="url(#mFaceR)"/>
<path d="M718.4 470.5L731.4 466.1L730.4 458.3L716.5 454.8L716.5 470.0Z" fill="url(#mFaceR)"/>
<path d="M731.4 466.1L730.4 458.3L730.4 466.5Z" fill="url(#mFaceR)"/>
<path d="M745.9 420.3L758.9 415.9L757.9 408.1L744.0 404.6L744.0 419.8Z" fill="url(#mFaceR)"/>
<path d="M758.9 415.9L757.9 408.1L757.9 416.3Z" fill="url(#mFaceR)"/>
<path d="M716.0 450.9L728.9 446.5L728.0 438.6L714.0 435.1L714.0 450.4Z" fill="url(#mFaceR)"/>
<path d="M728.9 446.5L728.0 438.6L728.0 446.8Z" fill="url(#mFaceR)"/>
<path d="M775.9 389.7L788.8 385.4L787.8 377.5L773.9 374.0L773.9 389.2Z" fill="url(#mFaceR)"/>
<path d="M788.8 385.4L787.8 377.5L787.8 385.7Z" fill="url(#mFaceR)"/>
<path d="M683.6 461.8L696.5 457.4L695.5 449.5L681.6 446.1L681.6 461.3Z" fill="url(#mFaceR)"/>
<path d="M696.5 457.4L695.5 449.5L695.5 457.7Z" fill="url(#mFaceR)"/>
<path d="M713.5 431.2L726.5 426.8L725.5 419.0L711.6 415.5L711.6 430.7Z" fill="url(#mFaceR)"/>
<path d="M726.5 426.8L725.5 419.0L725.5 427.2Z" fill="url(#mFaceR)"/>
<path d="M743.5 400.6L756.4 396.3L755.4 388.4L741.5 384.9L741.5 400.1Z" fill="url(#mFaceR)"/>
<path d="M756.4 396.3L755.4 388.4L755.4 396.6Z" fill="url(#mFaceR)"/>
<path d="M711.1 411.6L724.0 407.2L723.0 399.3L709.1 395.8L709.1 411.1Z" fill="url(#mFaceR)"/>
<path d="M724.0 407.2L723.0 399.3L723.0 407.5Z" fill="url(#mFaceR)"/>
<path d="M741.0 381.0L754.0 376.6L753.0 368.8L739.0 365.3L739.0 380.5Z" fill="url(#mFaceR)"/>
<path d="M754.0 376.6L753.0 368.8L753.0 377.0Z" fill="url(#mFaceR)"/>
<path d="M681.1 442.1L694.1 437.8L693.1 429.9L679.2 426.4L679.2 441.6Z" fill="url(#mFaceR)"/>
<path d="M694.1 437.8L693.1 429.9L693.1 438.1Z" fill="url(#mFaceR)"/>
<path d="M678.7 422.5L691.6 418.1L690.6 410.2L676.7 406.8L676.7 422.0Z" fill="url(#mFaceR)"/>
<path d="M691.6 418.1L690.6 410.2L690.6 418.4Z" fill="url(#mFaceR)"/>
<path d="M708.6 391.9L721.6 387.5L720.6 379.7L706.6 376.2L706.6 391.4Z" fill="url(#mFaceR)"/>
<path d="M721.6 387.5L720.6 379.7L720.6 387.9Z" fill="url(#mFaceR)"/>
<path d="M648.7 453.0L661.7 448.7L660.7 440.8L646.8 437.3L646.8 452.5Z" fill="url(#mFaceR)"/>
<path d="M661.7 448.7L660.7 440.8L660.7 449.0Z" fill="url(#mFaceR)"/>
<path d="M706.2 372.3L719.1 367.9L718.1 360.0L704.2 356.5L704.2 371.8Z" fill="url(#mFaceR)"/>
<path d="M719.1 367.9L718.1 360.0L718.1 368.2Z" fill="url(#mFaceR)"/>
<path d="M676.2 402.8L689.2 398.5L688.2 390.6L674.2 387.1L674.2 402.3Z" fill="url(#mFaceR)"/>
<path d="M689.2 398.5L688.2 390.6L688.2 398.8Z" fill="url(#mFaceR)"/>
<path d="M646.3 433.4L659.2 429.0L658.2 421.2L644.3 417.7L644.3 432.9Z" fill="url(#mFaceR)"/>
<path d="M659.2 429.0L658.2 421.2L658.2 429.3Z" fill="url(#mFaceR)"/>
<path d="M673.8 383.2L686.7 378.8L685.7 370.9L671.8 367.5L671.8 382.7Z" fill="url(#mFaceR)"/>
<path d="M686.7 378.8L685.7 370.9L685.7 379.1Z" fill="url(#mFaceR)"/>
<path d="M643.8 413.7L656.8 409.4L655.8 401.5L641.8 398.0L641.8 413.2Z" fill="url(#mFaceR)"/>
<path d="M656.8 409.4L655.8 401.5L655.8 409.7Z" fill="url(#mFaceR)"/>
<path d="M613.9 444.3L626.8 439.9L625.8 432.1L611.9 428.6L611.9 443.8Z" fill="url(#mFaceR)"/>
<path d="M626.8 439.9L625.8 432.1L625.8 440.3Z" fill="url(#mFaceR)"/>
<path d="M671.3 363.5L684.2 359.2L683.3 351.3L669.3 347.8L669.3 363.0Z" fill="url(#mFaceR)"/>
<path d="M684.2 359.2L683.3 351.3L683.3 359.5Z" fill="url(#mFaceR)"/>
<path d="M641.3 394.1L654.3 389.7L653.3 381.9L639.4 378.4L639.4 393.6Z" fill="url(#mFaceR)"/>
<path d="M654.3 389.7L653.3 381.9L653.3 390.0Z" fill="url(#mFaceR)"/>
<path d="M611.4 424.6L624.4 420.3L623.4 412.4L609.4 408.9L609.4 424.1Z" fill="url(#mFaceR)"/>
<path d="M624.4 420.3L623.4 412.4L623.4 420.6Z" fill="url(#mFaceR)"/>
<path d="M638.9 374.4L651.8 370.1L650.9 362.2L636.9 358.7L636.9 373.9Z" fill="url(#mFaceR)"/>
<path d="M651.8 370.1L650.9 362.2L650.9 370.4Z" fill="url(#mFaceR)"/>
<path d="M608.9 405.0L621.9 400.6L620.9 392.8L607.0 389.3L607.0 404.5Z" fill="url(#mFaceR)"/>
<path d="M621.9 400.6L620.9 392.8L620.9 401.0Z" fill="url(#mFaceR)"/>
<path d="M579.0 435.5L592.0 431.2L591.0 423.3L577.0 419.8L577.0 435.1Z" fill="url(#mFaceR)"/>
<path d="M592.0 431.2L591.0 423.3L591.0 431.5Z" fill="url(#mFaceR)"/>
<path d="M636.4 354.8L649.4 350.4L648.4 342.6L634.5 339.1L634.5 354.3Z" fill="url(#mFaceR)"/>
<path d="M649.4 350.4L648.4 342.6L648.4 350.7Z" fill="url(#mFaceR)"/>
<path d="M606.5 385.3L619.4 381.0L618.5 373.1L604.5 369.6L604.5 384.8Z" fill="url(#mFaceR)"/>
<path d="M619.4 381.0L618.5 373.1L618.5 381.3Z" fill="url(#mFaceR)"/>
<path d="M576.5 415.9L589.5 411.5L588.5 403.7L574.6 400.2L574.6 415.4Z" fill="url(#mFaceR)"/>
<path d="M589.5 411.5L588.5 403.7L588.5 411.9Z" fill="url(#mFaceR)"/>
<path d="M604.0 365.7L617.0 361.3L616.0 353.5L602.1 350.0L602.1 365.2Z" fill="url(#mFaceR)"/>
<path d="M617.0 361.3L616.0 353.5L616.0 361.7Z" fill="url(#mFaceR)"/>
<path d="M574.1 396.2L587.0 391.9L586.1 384.0L572.1 380.5L572.1 395.8Z" fill="url(#mFaceR)"/>
<path d="M587.0 391.9L586.1 384.0L586.1 392.2Z" fill="url(#mFaceR)"/>
<path d="M544.1 426.8L557.1 422.4L556.1 414.6L542.2 411.1L542.2 426.3Z" fill="url(#mFaceR)"/>
<path d="M557.1 422.4L556.1 414.6L556.1 422.8Z" fill="url(#mFaceR)"/>
<path d="M601.6 346.0L614.5 341.7L613.5 333.8L599.6 330.3L599.6 345.5Z" fill="url(#mFaceR)"/>
<path d="M614.5 341.7L613.5 333.8L613.5 342.0Z" fill="url(#mFaceR)"/>
<path d="M571.6 376.6L584.6 372.2L583.6 364.4L569.7 360.9L569.7 376.1Z" fill="url(#mFaceR)"/>
<path d="M584.6 372.2L583.6 364.4L583.6 372.6Z" fill="url(#mFaceR)"/>
<path d="M541.7 407.2L554.6 402.8L553.7 394.9L539.7 391.4L539.7 406.7Z" fill="url(#mFaceR)"/>
<path d="M554.6 402.8L553.7 394.9L553.7 403.1Z" fill="url(#mFaceR)"/>
<path d="M569.2 356.9L582.1 352.6L581.1 344.7L567.2 341.2L567.2 356.5Z" fill="url(#mFaceR)"/>
<path d="M582.1 352.6L581.1 344.7L581.1 352.9Z" fill="url(#mFaceR)"/>
<path d="M539.2 387.5L552.2 383.1L551.2 375.3L537.3 371.8L537.3 387.0Z" fill="url(#mFaceR)"/>
<path d="M552.2 383.1L551.2 375.3L551.2 383.5Z" fill="url(#mFaceR)"/>
<path d="M509.3 418.1L522.2 413.7L521.2 405.8L507.3 402.4L507.3 417.6Z" fill="url(#mFaceR)"/>
<path d="M522.2 413.7L521.2 405.8L521.2 414.0Z" fill="url(#mFaceR)"/>
<path d="M566.7 337.3L579.7 332.9L578.7 325.1L564.8 321.6L564.8 336.8Z" fill="url(#mFaceR)"/>
<path d="M579.7 332.9L578.7 325.1L578.7 333.3Z" fill="url(#mFaceR)"/>
<path d="M536.8 367.9L549.7 363.5L548.7 355.6L534.8 352.1L534.8 367.4Z" fill="url(#mFaceR)"/>
<path d="M549.7 363.5L548.7 355.6L548.7 363.8Z" fill="url(#mFaceR)"/>
<path d="M506.8 398.4L519.8 394.1L518.8 386.2L504.9 382.7L504.9 397.9Z" fill="url(#mFaceR)"/>
<path d="M519.8 394.1L518.8 386.2L518.8 394.4Z" fill="url(#mFaceR)"/>
<path d="M534.3 348.2L547.3 343.8L546.3 336.0L532.4 332.5L532.4 347.7Z" fill="url(#mFaceR)"/>
<path d="M547.3 343.8L546.3 336.0L546.3 344.2Z" fill="url(#mFaceR)"/>
<path d="M504.4 378.8L517.3 374.4L516.3 366.5L502.4 363.1L502.4 378.3Z" fill="url(#mFaceR)"/>
<path d="M517.3 374.4L516.3 366.5L516.3 374.7Z" fill="url(#mFaceR)"/>
<path d="M474.4 409.3L487.4 405.0L486.4 397.1L472.5 393.6L472.5 408.8Z" fill="url(#mFaceR)"/>
<path d="M487.4 405.0L486.4 397.1L486.4 405.3Z" fill="url(#mFaceR)"/>
<path d="M531.9 328.6L544.8 324.2L543.8 316.3L529.9 312.8L529.9 328.1Z" fill="url(#mFaceR)"/>
<path d="M544.8 324.2L543.8 316.3L543.8 324.5Z" fill="url(#mFaceR)"/>
<path d="M501.9 359.1L514.9 354.8L513.9 346.9L499.9 343.4L499.9 358.6Z" fill="url(#mFaceR)"/>
<path d="M514.9 354.8L513.9 346.9L513.9 355.1Z" fill="url(#mFaceR)"/>
<path d="M472.0 389.7L484.9 385.3L483.9 377.5L470.0 374.0L470.0 389.2Z" fill="url(#mFaceR)"/>
<path d="M484.9 385.3L483.9 377.5L483.9 385.6Z" fill="url(#mFaceR)"/>
<path d="M499.5 339.5L512.4 335.1L511.4 327.3L497.5 323.8L497.5 339.0Z" fill="url(#mFaceR)"/>
<path d="M512.4 335.1L511.4 327.3L511.4 335.4Z" fill="url(#mFaceR)"/>
<path d="M469.5 370.0L482.5 365.7L481.5 357.8L467.5 354.3L467.5 369.5Z" fill="url(#mFaceR)"/>
<path d="M482.5 365.7L481.5 357.8L481.5 366.0Z" fill="url(#mFaceR)"/>
<path d="M439.6 400.6L452.5 396.2L451.5 388.4L437.6 384.9L437.6 400.1Z" fill="url(#mFaceR)"/>
<path d="M452.5 396.2L451.5 388.4L451.5 396.6Z" fill="url(#mFaceR)"/>
<path d="M497.0 319.8L510.0 315.5L509.0 307.6L495.0 304.1L495.0 319.3Z" fill="url(#mFaceR)"/>
<path d="M510.0 315.5L509.0 307.6L509.0 315.8Z" fill="url(#mFaceR)"/>
<path d="M437.1 380.9L450.1 376.6L449.1 368.7L435.1 365.2L435.1 380.4Z" fill="url(#mFaceR)"/>
<path d="M450.1 376.6L449.1 368.7L449.1 376.9Z" fill="url(#mFaceR)"/>
<path d="M467.1 350.4L480.0 346.0L479.0 338.2L465.1 334.7L465.1 349.9Z" fill="url(#mFaceR)"/>
<path d="M480.0 346.0L479.0 338.2L479.0 346.3Z" fill="url(#mFaceR)"/>
<path d="M464.6 330.7L477.6 326.4L476.6 318.5L462.6 315.0L462.6 330.2Z" fill="url(#mFaceR)"/>
<path d="M477.6 326.4L476.6 318.5L476.6 326.7Z" fill="url(#mFaceR)"/>
<path d="M434.6 361.3L447.6 356.9L446.6 349.1L432.7 345.6L432.7 360.8Z" fill="url(#mFaceR)"/>
<path d="M447.6 356.9L446.6 349.1L446.6 357.3Z" fill="url(#mFaceR)"/>
<path d="M404.7 391.8L417.7 387.5L416.7 379.6L402.7 376.1L402.7 391.4Z" fill="url(#mFaceR)"/>
<path d="M417.7 387.5L416.7 379.6L416.7 387.8Z" fill="url(#mFaceR)"/>
<path d="M432.2 341.6L445.1 337.3L444.2 329.4L430.2 325.9L430.2 341.1Z" fill="url(#mFaceR)"/>
<path d="M445.1 337.3L444.2 329.4L444.2 337.6Z" fill="url(#mFaceR)"/>
<path d="M402.2 372.2L415.2 367.8L414.2 360.0L400.3 356.5L400.3 371.7Z" fill="url(#mFaceR)"/>
<path d="M415.2 367.8L414.2 360.0L414.2 368.2Z" fill="url(#mFaceR)"/>
<path d="M462.1 311.1L475.1 306.7L474.1 298.9L460.2 295.4L460.2 310.6Z" fill="url(#mFaceR)"/>
<path d="M475.1 306.7L474.1 298.9L474.1 307.1Z" fill="url(#mFaceR)"/>
<path d="M399.8 352.5L412.7 348.2L411.8 340.3L397.8 336.8L397.8 352.1Z" fill="url(#mFaceR)"/>
<path d="M412.7 348.2L411.8 340.3L411.8 348.5Z" fill="url(#mFaceR)"/>
<path d="M429.7 322.0L442.7 317.6L441.7 309.8L427.8 306.3L427.8 321.5Z" fill="url(#mFaceR)"/>
<path d="M442.7 317.6L441.7 309.8L441.7 318.0Z" fill="url(#mFaceR)"/>
<path d="M369.8 383.1L382.8 378.7L381.8 370.9L367.9 367.4L367.9 382.6Z" fill="url(#mFaceR)"/>
<path d="M382.8 378.7L381.8 370.9L381.8 379.1Z" fill="url(#mFaceR)"/>
<path d="M397.3 332.9L410.3 328.5L409.3 320.7L395.4 317.2L395.4 332.4Z" fill="url(#mFaceR)"/>
<path d="M410.3 328.5L409.3 320.7L409.3 328.9Z" fill="url(#mFaceR)"/>
<path d="M367.4 363.5L380.3 359.1L379.4 351.2L365.4 347.7L365.4 363.0Z" fill="url(#mFaceR)"/>
<path d="M380.3 359.1L379.4 351.2L379.4 359.4Z" fill="url(#mFaceR)"/>
<path d="M394.9 313.3L407.8 308.9L406.9 301.0L392.9 297.5L392.9 312.8Z" fill="url(#mFaceR)"/>
<path d="M407.8 308.9L406.9 301.0L406.9 309.2Z" fill="url(#mFaceR)"/>
<path d="M364.9 343.8L377.9 339.4L376.9 331.6L363.0 328.1L363.0 343.3Z" fill="url(#mFaceR)"/>
<path d="M377.9 339.4L376.9 331.6L376.9 339.8Z" fill="url(#mFaceR)"/>
<path d="M332.5 354.7L345.5 350.4L344.5 342.5L330.6 339.0L330.6 354.2Z" fill="url(#mFaceR)"/>
<path d="M345.5 350.4L344.5 342.5L344.5 350.7Z" fill="url(#mFaceR)"/>
<path d="M362.5 324.2L375.4 319.8L374.5 311.9L360.5 308.5L360.5 323.7Z" fill="url(#mFaceR)"/>
<path d="M375.4 319.8L374.5 311.9L374.5 320.1Z" fill="url(#mFaceR)"/>
<path d="M330.1 335.1L343.0 330.7L342.0 322.9L328.1 319.4L328.1 334.6Z" fill="url(#mFaceR)"/>
<path d="M343.0 330.7L342.0 322.9L342.0 331.0Z" fill="url(#mFaceR)"/>
<path d="M360.0 304.5L373.0 300.2L372.0 292.3L358.1 288.8L358.1 304.0Z" fill="url(#mFaceR)"/>
<path d="M373.0 300.2L372.0 292.3L372.0 300.5Z" fill="url(#mFaceR)"/>
<path d="M327.6 315.4L340.6 311.1L339.6 303.2L325.7 299.7L325.7 314.9Z" fill="url(#mFaceR)"/>
<path d="M340.6 311.1L339.6 303.2L339.6 311.4Z" fill="url(#mFaceR)"/>
<path d="M295.2 326.3L308.2 322.0L307.2 314.1L293.3 310.6L293.3 325.8Z" fill="url(#mFaceR)"/>
<path d="M308.2 322.0L307.2 314.1L307.2 322.3Z" fill="url(#mFaceR)"/>
<path d="M292.8 306.7L305.7 302.3L304.7 294.5L290.8 291.0L290.8 306.2Z" fill="url(#mFaceR)"/>
<path d="M305.7 302.3L304.7 294.5L304.7 302.7Z" fill="url(#mFaceR)"/>
<path d="M356.9 387.5L356.4 383.6L363.3 385.3ZM473.1 291.0L473.6 294.9L466.7 293.2ZM1103.1 468.0L1103.6 471.9L1096.6 470.1ZM1137.9 476.7L1138.4 480.6L1131.5 478.9ZM1153.8 549.2L1153.3 545.3L1160.2 547.0ZM1183.7 518.6L1183.2 514.7L1190.2 516.4ZM1171.2 526.9L1177.7 524.7L1178.2 528.7ZM1145.3 535.7L1145.8 539.6L1138.8 537.8ZM1151.3 529.5L1150.8 525.6L1157.8 527.4ZM1175.2 505.1L1175.7 509.0L1168.8 507.3ZM1181.2 499.0L1180.8 495.0L1187.7 496.8ZM1142.8 516.0L1143.3 519.9L1136.4 518.2ZM1148.8 509.9L1148.4 506.0L1155.3 507.7ZM1118.9 540.4L1118.4 536.5L1125.4 538.3ZM1112.9 546.6L1113.4 550.5L1106.4 548.7ZM1110.4 526.9L1110.9 530.8L1104.0 529.1ZM1116.4 520.8L1116.0 516.9L1122.9 518.6ZM1140.4 496.4L1140.9 500.3L1133.9 498.5ZM1146.4 490.2L1145.9 486.3L1152.8 488.1ZM1114.0 501.1L1113.5 497.2L1120.4 499.0ZM1084.0 531.7L1083.6 527.8L1090.5 529.5ZM1078.0 537.8L1078.5 541.7L1071.6 540.0ZM1108.0 507.3L1108.5 511.2L1101.5 509.4ZM1081.6 512.0L1081.1 508.1L1088.0 509.9ZM1105.5 487.6L1106.0 491.5L1099.1 489.8ZM1051.6 542.6L1051.1 538.7L1058.1 540.4ZM1075.6 518.2L1076.1 522.1L1069.1 520.3ZM1111.5 481.5L1111.0 477.6L1118.0 479.3ZM1079.1 492.4L1078.6 488.5L1085.6 490.2ZM1073.1 498.5L1073.6 502.4L1066.7 500.7ZM1043.2 529.1L1043.7 533.0L1036.7 531.3ZM1049.2 523.0L1048.7 519.0L1055.6 520.8ZM1016.8 533.9L1016.3 530.0L1023.2 531.7ZM1040.7 509.4L1041.2 513.4L1034.3 511.6ZM1046.7 503.3L1046.2 499.4L1053.2 501.1ZM1070.7 478.9L1071.2 482.8L1064.2 481.0ZM1076.7 472.7L1076.2 468.8L1083.1 470.6ZM1038.3 489.8L1038.8 493.7L1031.8 492.0ZM1008.3 520.3L1008.8 524.3L1001.9 522.5ZM1044.3 483.7L1043.8 479.7L1050.7 481.5ZM1068.2 459.2L1068.7 463.1L1061.7 461.4ZM1014.3 514.2L1013.8 510.3L1020.8 512.0ZM981.9 525.1L981.4 521.2L988.4 523.0ZM1005.9 500.7L1006.3 504.6L999.4 502.9ZM1011.9 494.6L1011.4 490.7L1018.3 492.4ZM1035.8 470.1L1036.3 474.1L1029.3 472.3ZM1041.8 464.0L1041.3 460.1L1048.3 461.8ZM996.9 483.2L1003.4 481.0L1003.9 485.0ZM1033.3 450.5L1033.8 454.4L1026.9 452.7ZM1009.4 474.9L1008.9 471.0L1015.9 472.7ZM979.5 505.5L979.0 501.6L985.9 503.3ZM973.5 511.6L973.9 515.5L967.0 513.8ZM977.0 485.8L976.5 481.9L983.5 483.7ZM1000.9 461.4L1001.4 465.3L994.5 463.6ZM947.1 516.4L946.6 512.5L953.5 514.2ZM971.0 492.0L971.5 495.9L964.5 494.1ZM1006.9 455.3L1006.4 451.4L1013.4 453.1ZM1004.5 435.6L1004.0 431.7L1010.9 433.4ZM962.1 474.5L968.5 472.3L969.0 476.2ZM998.5 441.7L999.0 445.7L992.0 443.9ZM974.5 466.2L974.0 462.3L981.0 464.0ZM938.6 502.9L939.1 506.8L932.1 505.0ZM944.6 496.7L944.1 492.8L951.1 494.6ZM966.1 452.7L966.6 456.6L959.6 454.8ZM972.1 446.5L971.6 442.6L978.5 444.4ZM942.1 477.1L941.6 473.2L948.6 474.9ZM936.1 483.2L936.6 487.1L929.7 485.4ZM912.2 507.7L911.7 503.7L918.7 505.5ZM906.2 513.8L906.7 517.7L899.7 516.0ZM903.7 494.1L904.2 498.0L897.3 496.3ZM969.6 426.9L969.1 423.0L976.1 424.7ZM933.7 463.6L934.2 467.5L927.2 465.7ZM909.7 488.0L909.2 484.1L916.2 485.8ZM939.7 457.4L939.2 453.5L946.1 455.3ZM963.6 433.0L964.1 436.9L957.2 435.2ZM886.3 516.4L879.8 518.6L879.3 514.6ZM871.3 505.0L871.8 509.0L864.9 507.2ZM931.2 443.9L931.7 447.8L924.8 446.1ZM877.3 498.9L876.8 495.0L883.8 496.7ZM907.3 468.4L906.8 464.4L913.7 466.2ZM901.3 474.5L901.8 478.4L894.8 476.7ZM961.2 413.4L961.7 417.3L954.7 415.5ZM937.2 437.8L936.7 433.9L943.7 435.6ZM844.9 509.8L844.4 505.9L851.4 507.6ZM868.9 485.4L869.4 489.3L862.4 487.6ZM892.4 457.0L898.8 454.8L899.3 458.7ZM928.8 424.3L929.2 428.2L922.3 426.4ZM934.8 418.1L934.3 414.2L941.2 416.0ZM904.8 448.7L904.3 444.8L911.3 446.5ZM874.9 479.3L874.4 475.3L881.3 477.1ZM896.4 435.2L896.8 439.1L889.9 437.4ZM926.3 404.6L926.8 408.5L919.8 406.8ZM866.4 465.7L866.9 469.7L860.0 467.9ZM842.5 490.2L842.0 486.3L848.9 488.0ZM836.5 496.3L837.0 500.2L830.0 498.5ZM872.4 459.6L871.9 455.7L878.9 457.4ZM902.4 429.1L901.9 425.1L908.8 426.9ZM864.0 446.1L864.4 450.0L857.5 448.3ZM834.0 476.6L834.5 480.6L827.5 478.8ZM870.0 440.0L869.5 436.0L876.4 437.8ZM893.9 415.5L894.4 419.4L887.4 417.7ZM899.9 409.4L899.4 405.5L906.4 407.2ZM810.1 501.1L809.6 497.2L816.5 498.9ZM840.0 470.5L839.5 466.6L846.5 468.3ZM861.5 426.4L862.0 430.4L855.0 428.6ZM891.4 395.9L891.9 399.8L885.0 398.1ZM837.6 450.9L837.1 447.0L844.0 448.7ZM831.6 457.0L832.0 460.9L825.1 459.2ZM807.6 481.4L807.1 477.5L814.1 479.3ZM801.6 487.6L802.1 491.5L795.1 489.7ZM867.5 420.3L867.0 416.4L874.0 418.1ZM822.6 439.5L829.1 437.3L829.6 441.3ZM865.0 400.7L864.5 396.7L871.5 398.5ZM835.1 431.2L834.6 427.3L841.6 429.0ZM805.1 461.8L804.7 457.9L811.6 459.6ZM799.1 467.9L799.6 471.8L792.7 470.1ZM859.0 406.8L859.5 410.7L852.6 409.0ZM775.2 492.3L774.7 488.4L781.7 490.2ZM826.6 417.7L827.1 421.6L820.2 419.9ZM802.7 442.1L802.2 438.2L809.2 440.0ZM766.7 478.8L767.2 482.7L760.3 481.0ZM856.6 387.1L857.1 391.1L850.1 389.3ZM772.7 472.7L772.3 468.8L779.2 470.5ZM796.7 448.3L797.2 452.2L790.2 450.4ZM832.6 411.6L832.1 407.7L839.1 409.4ZM824.2 398.0L824.7 402.0L817.7 400.2ZM830.2 391.9L829.7 388.0L836.6 389.7ZM800.2 422.5L799.7 418.6L806.7 420.3ZM794.2 428.6L794.7 432.5L787.8 430.8ZM764.3 459.2L764.8 463.1L757.8 461.3ZM740.3 483.6L739.9 479.7L746.8 481.4ZM770.3 453.0L769.8 449.1L776.8 450.9ZM821.7 378.4L822.2 382.3L815.3 380.6ZM761.8 439.5L762.3 443.4L755.4 441.7ZM797.8 402.8L797.3 398.9L804.2 400.7ZM767.8 433.4L767.3 429.5L774.3 431.2ZM737.9 464.0L737.4 460.0L744.3 461.8ZM731.9 470.1L732.4 474.0L725.4 472.3ZM791.8 409.0L792.3 412.9L785.3 411.1ZM752.9 422.0L759.4 419.9L759.9 423.8ZM795.3 383.2L794.8 379.3L801.8 381.0ZM729.4 450.4L729.9 454.3L723.0 452.6ZM765.4 413.7L764.9 409.8L771.8 411.6ZM789.3 389.3L789.8 393.2L782.9 391.5ZM705.5 474.9L705.0 470.9L711.9 472.7ZM735.4 444.3L734.9 440.4L741.9 442.1ZM733.0 424.7L732.5 420.7L739.4 422.5ZM786.9 369.7L787.4 373.6L780.4 371.8ZM756.9 400.2L757.4 404.1L750.5 402.4ZM727.0 430.8L727.5 434.7L720.5 433.0ZM703.0 455.2L702.5 451.3L709.5 453.0ZM697.0 461.3L697.5 465.3L690.6 463.5ZM762.9 394.1L762.4 390.2L769.4 391.9ZM718.1 413.3L724.5 411.1L725.0 415.0ZM760.5 374.4L760.0 370.5L766.9 372.3ZM754.5 380.6L754.9 384.5L748.0 382.7ZM730.5 405.0L730.0 401.1L737.0 402.8ZM700.6 435.6L700.1 431.6L707.0 433.4ZM694.6 441.7L695.1 445.6L688.1 443.9ZM670.6 466.1L670.1 462.2L677.1 463.9ZM698.1 415.9L697.6 412.0L704.6 413.7ZM692.1 422.0L692.6 426.0L685.6 424.2ZM722.1 391.5L722.5 395.4L715.6 393.7ZM752.0 360.9L752.5 364.8L745.5 363.1ZM728.1 385.4L727.6 381.4L734.5 383.2ZM668.2 446.5L667.7 442.6L674.6 444.3ZM662.2 452.6L662.7 456.5L655.7 454.8ZM665.7 426.8L665.2 422.9L672.2 424.6ZM695.7 396.3L695.2 392.3L702.1 394.1ZM719.6 371.8L720.1 375.7L713.1 374.0ZM725.6 365.7L725.1 361.8L732.1 363.5ZM635.8 457.4L635.3 453.5L642.2 455.2ZM659.7 432.9L660.2 436.9L653.2 435.1ZM689.7 402.4L690.1 406.3L683.2 404.6ZM717.1 352.2L717.6 356.1L710.7 354.4ZM693.2 376.6L692.7 372.7L699.7 374.4ZM633.3 437.7L632.8 433.8L639.8 435.6ZM687.2 382.7L687.7 386.7L680.7 384.9ZM627.3 443.9L627.8 447.8L620.8 446.0ZM669.7 405.0L663.3 407.2L662.8 403.3ZM657.3 413.3L657.7 417.2L650.8 415.5ZM690.7 357.0L690.3 353.0L697.2 354.8ZM624.8 424.2L625.3 428.1L618.4 426.4ZM684.7 363.1L685.2 367.0L678.3 365.3ZM660.8 387.5L660.3 383.6L667.3 385.4ZM600.9 448.6L600.4 444.7L607.4 446.5ZM648.3 395.8L654.8 393.6L655.3 397.6ZM630.8 418.1L630.4 414.2L637.3 415.9ZM592.4 435.1L592.9 439.0L586.0 437.3ZM598.4 429.0L598.0 425.1L604.9 426.8ZM658.3 367.9L657.8 364.0L664.8 365.7ZM652.3 374.0L652.8 377.9L645.9 376.2ZM682.3 343.4L682.8 347.4L675.8 345.6ZM628.4 398.4L627.9 394.5L634.9 396.3ZM622.4 404.6L622.9 408.5L615.9 406.7ZM566.0 439.9L565.6 436.0L572.5 437.7ZM590.0 415.5L590.5 419.4L583.5 417.6ZM655.9 348.2L655.4 344.3L662.3 346.1ZM649.9 354.4L650.4 358.3L643.4 356.5ZM625.9 378.8L625.4 374.9L632.4 376.6ZM596.0 409.3L595.5 405.4L602.5 407.2ZM613.5 387.1L619.9 384.9L620.4 388.8ZM563.6 420.3L563.1 416.3L570.0 418.1ZM623.5 359.1L623.0 355.2L629.9 357.0ZM647.4 334.7L647.9 338.6L641.0 336.9ZM617.5 365.3L618.0 369.2L611.0 367.4ZM593.5 389.7L593.0 385.8L600.0 387.5ZM587.5 395.8L588.0 399.7L581.1 398.0ZM557.6 426.4L558.1 430.3L551.1 428.6ZM531.2 431.2L530.7 427.2L537.6 429.0ZM621.0 339.5L620.5 335.6L627.5 337.3ZM615.0 345.6L615.5 349.5L608.6 347.8ZM591.1 370.0L590.6 366.1L597.5 367.9ZM585.1 376.2L585.6 380.1L578.6 378.3ZM561.1 400.6L560.6 396.7L567.6 398.4ZM555.1 406.7L555.6 410.6L548.7 408.9ZM528.7 411.5L528.2 407.6L535.2 409.3ZM612.6 326.0L613.1 329.9L606.1 328.1ZM582.6 356.5L583.1 360.4L576.2 358.7ZM558.7 381.0L558.2 377.0L565.1 378.8ZM552.7 387.1L553.2 391.0L546.2 389.3ZM522.7 417.6L523.2 421.6L516.3 419.8ZM588.6 350.4L588.1 346.5L595.1 348.2ZM496.3 422.4L495.8 418.5L502.8 420.3ZM526.3 391.9L525.8 387.9L532.7 389.7ZM556.2 361.3L555.7 357.4L562.7 359.1ZM580.2 336.9L580.7 340.8L573.7 339.0ZM586.2 330.8L585.7 326.8L592.6 328.6ZM520.3 398.0L520.8 401.9L513.8 400.2ZM543.8 369.6L550.2 367.4L550.7 371.4ZM553.8 341.7L553.3 337.7L560.2 339.5ZM577.7 317.2L578.2 321.1L571.2 319.4ZM523.8 372.2L523.3 368.3L530.3 370.0ZM517.8 378.3L518.3 382.3L511.4 380.5ZM493.9 402.8L493.4 398.9L500.3 400.6ZM487.9 408.9L488.4 412.8L481.4 411.1ZM547.8 347.8L548.3 351.7L541.3 350.0ZM551.3 322.0L550.8 318.1L557.8 319.8ZM491.4 383.1L490.9 379.2L497.9 381.0ZM515.4 358.7L515.8 362.6L508.9 360.9ZM521.4 352.6L520.9 348.7L527.8 350.4ZM545.3 328.1L545.8 332.1L538.8 330.3ZM485.4 389.3L485.9 393.2L478.9 391.4ZM461.5 413.7L461.0 409.8L467.9 411.5ZM483.0 369.6L483.4 373.5L476.5 371.8ZM489.0 363.5L488.5 359.6L495.4 361.3ZM512.9 339.0L513.4 343.0L506.4 341.2ZM518.9 332.9L518.4 329.0L525.4 330.7ZM542.9 308.5L543.3 312.4L536.4 310.7ZM459.0 394.0L458.5 390.1L465.5 391.9ZM453.0 400.2L453.5 404.1L446.5 402.3ZM486.5 343.8L486.0 339.9L493.0 341.7ZM516.4 313.3L516.0 309.4L522.9 311.1ZM510.4 319.4L510.9 323.3L504.0 321.6ZM474.0 352.1L480.5 350.0L481.0 353.9ZM426.6 404.9L426.1 401.0L433.1 402.8ZM456.6 374.4L456.1 370.5L463.0 372.2ZM450.5 380.5L451.0 384.4L444.1 382.7ZM448.1 360.9L448.6 364.8L441.6 363.0ZM454.1 354.7L453.6 350.8L460.6 352.6ZM478.0 330.3L478.5 334.2L471.6 332.5ZM484.0 324.2L483.6 320.3L490.5 322.0ZM508.0 299.7L508.5 303.7L501.5 301.9ZM418.1 391.4L418.6 395.3L411.7 393.6ZM424.1 385.3L423.7 381.4L430.6 383.1ZM451.6 335.1L451.2 331.2L458.1 332.9ZM475.6 310.7L476.1 314.6L469.1 312.8ZM481.6 304.5L481.1 300.6L488.1 302.4ZM439.2 343.4L445.6 341.2L446.1 345.1ZM391.7 396.2L391.3 392.3L398.2 394.0ZM421.7 365.7L421.2 361.7L428.2 363.5ZM415.7 371.8L416.2 375.7L409.2 373.9ZM413.2 352.1L413.7 356.0L406.8 354.3ZM449.2 315.4L448.7 311.5L455.6 313.3ZM443.2 321.6L443.7 325.5L436.7 323.7ZM419.2 346.0L418.7 342.1L425.7 343.8ZM389.3 376.6L388.8 372.6L395.7 374.4ZM376.8 384.9L383.3 382.7L383.8 386.6ZM410.8 332.5L411.3 336.4L404.3 334.7ZM446.7 295.8L446.2 291.9L453.2 293.6ZM440.7 301.9L441.2 305.8L434.3 304.1ZM416.8 326.4L416.3 322.4L423.2 324.2ZM386.8 356.9L386.3 353.0L393.3 354.7ZM380.8 363.0L381.3 367.0L374.4 365.2ZM384.4 337.3L383.9 333.3L390.8 335.1ZM408.3 312.8L408.8 316.7L401.9 315.0ZM414.3 306.7L413.8 302.8L420.8 304.5ZM354.4 367.8L353.9 363.9L360.9 365.6ZM378.4 343.4L378.9 347.3L371.9 345.6ZM405.9 293.2L406.4 297.1L399.4 295.4ZM381.9 317.6L381.4 313.7L388.4 315.4ZM346.0 354.3L346.5 358.2L339.5 356.5ZM369.5 325.9L375.9 323.7L376.4 327.7ZM352.0 348.2L351.5 344.3L358.4 346.0ZM379.5 298.0L379.0 294.0L385.9 295.8ZM343.5 334.6L344.0 338.6L337.1 336.8ZM319.6 359.1L319.1 355.2L326.0 356.9ZM349.5 328.5L349.0 324.6L356.0 326.3ZM373.5 304.1L374.0 308.0L367.0 306.3ZM311.1 345.6L311.6 349.5L304.7 347.7ZM341.1 315.0L341.6 318.9L334.6 317.2ZM317.1 339.4L316.6 335.5L323.6 337.3ZM347.1 308.9L346.6 305.0L353.5 306.7ZM308.7 325.9L309.1 329.8L302.2 328.1ZM314.7 319.8L314.2 315.9L321.1 317.6ZM338.6 295.4L339.1 299.3L332.1 297.5ZM299.7 308.4L306.2 306.3L306.7 310.2ZM282.3 330.7L281.8 326.8L288.7 328.5ZM312.2 300.1L311.7 296.2L318.7 298.0ZM279.8 311.0L279.3 307.1L286.3 308.9ZM273.8 317.2L274.3 321.1L267.3 319.3ZM271.3 297.5L271.8 301.4L264.9 299.7Z" fill="url(#mTop)"/><path d="M356.9 387.5L356.4 383.6L363.3 385.3ZM473.1 291.0L473.6 294.9L466.7 293.2ZM1103.1 468.0L1103.6 471.9L1096.6 470.1ZM1137.9 476.7L1138.4 480.6L1131.5 478.9ZM1153.8 549.2L1153.3 545.3L1160.2 547.0ZM1183.7 518.6L1183.2 514.7L1190.2 516.4ZM1171.2 526.9L1177.7 524.7L1178.2 528.7ZM1145.3 535.7L1145.8 539.6L1138.8 537.8ZM1151.3 529.5L1150.8 525.6L1157.8 527.4ZM1175.2 505.1L1175.7 509.0L1168.8 507.3ZM1181.2 499.0L1180.8 495.0L1187.7 496.8ZM1142.8 516.0L1143.3 519.9L1136.4 518.2ZM1148.8 509.9L1148.4 506.0L1155.3 507.7ZM1118.9 540.4L1118.4 536.5L1125.4 538.3ZM1112.9 546.6L1113.4 550.5L1106.4 548.7ZM1110.4 526.9L1110.9 530.8L1104.0 529.1ZM1116.4 520.8L1116.0 516.9L1122.9 518.6ZM1140.4 496.4L1140.9 500.3L1133.9 498.5ZM1146.4 490.2L1145.9 486.3L1152.8 488.1ZM1114.0 501.1L1113.5 497.2L1120.4 499.0ZM1084.0 531.7L1083.6 527.8L1090.5 529.5ZM1078.0 537.8L1078.5 541.7L1071.6 540.0ZM1108.0 507.3L1108.5 511.2L1101.5 509.4ZM1081.6 512.0L1081.1 508.1L1088.0 509.9ZM1105.5 487.6L1106.0 491.5L1099.1 489.8ZM1051.6 542.6L1051.1 538.7L1058.1 540.4ZM1075.6 518.2L1076.1 522.1L1069.1 520.3ZM1111.5 481.5L1111.0 477.6L1118.0 479.3ZM1079.1 492.4L1078.6 488.5L1085.6 490.2ZM1073.1 498.5L1073.6 502.4L1066.7 500.7ZM1043.2 529.1L1043.7 533.0L1036.7 531.3ZM1049.2 523.0L1048.7 519.0L1055.6 520.8ZM1016.8 533.9L1016.3 530.0L1023.2 531.7ZM1040.7 509.4L1041.2 513.4L1034.3 511.6ZM1046.7 503.3L1046.2 499.4L1053.2 501.1ZM1070.7 478.9L1071.2 482.8L1064.2 481.0ZM1076.7 472.7L1076.2 468.8L1083.1 470.6ZM1038.3 489.8L1038.8 493.7L1031.8 492.0ZM1008.3 520.3L1008.8 524.3L1001.9 522.5ZM1044.3 483.7L1043.8 479.7L1050.7 481.5ZM1068.2 459.2L1068.7 463.1L1061.7 461.4ZM1014.3 514.2L1013.8 510.3L1020.8 512.0ZM981.9 525.1L981.4 521.2L988.4 523.0ZM1005.9 500.7L1006.3 504.6L999.4 502.9ZM1011.9 494.6L1011.4 490.7L1018.3 492.4ZM1035.8 470.1L1036.3 474.1L1029.3 472.3ZM1041.8 464.0L1041.3 460.1L1048.3 461.8ZM996.9 483.2L1003.4 481.0L1003.9 485.0ZM1033.3 450.5L1033.8 454.4L1026.9 452.7ZM1009.4 474.9L1008.9 471.0L1015.9 472.7ZM979.5 505.5L979.0 501.6L985.9 503.3ZM973.5 511.6L973.9 515.5L967.0 513.8ZM977.0 485.8L976.5 481.9L983.5 483.7ZM1000.9 461.4L1001.4 465.3L994.5 463.6ZM947.1 516.4L946.6 512.5L953.5 514.2ZM971.0 492.0L971.5 495.9L964.5 494.1ZM1006.9 455.3L1006.4 451.4L1013.4 453.1ZM1004.5 435.6L1004.0 431.7L1010.9 433.4ZM962.1 474.5L968.5 472.3L969.0 476.2ZM998.5 441.7L999.0 445.7L992.0 443.9ZM974.5 466.2L974.0 462.3L981.0 464.0ZM938.6 502.9L939.1 506.8L932.1 505.0ZM944.6 496.7L944.1 492.8L951.1 494.6ZM966.1 452.7L966.6 456.6L959.6 454.8ZM972.1 446.5L971.6 442.6L978.5 444.4ZM942.1 477.1L941.6 473.2L948.6 474.9ZM936.1 483.2L936.6 487.1L929.7 485.4ZM912.2 507.7L911.7 503.7L918.7 505.5ZM906.2 513.8L906.7 517.7L899.7 516.0ZM903.7 494.1L904.2 498.0L897.3 496.3ZM969.6 426.9L969.1 423.0L976.1 424.7ZM933.7 463.6L934.2 467.5L927.2 465.7ZM909.7 488.0L909.2 484.1L916.2 485.8ZM939.7 457.4L939.2 453.5L946.1 455.3ZM963.6 433.0L964.1 436.9L957.2 435.2ZM886.3 516.4L879.8 518.6L879.3 514.6ZM871.3 505.0L871.8 509.0L864.9 507.2ZM931.2 443.9L931.7 447.8L924.8 446.1ZM877.3 498.9L876.8 495.0L883.8 496.7ZM907.3 468.4L906.8 464.4L913.7 466.2ZM901.3 474.5L901.8 478.4L894.8 476.7ZM961.2 413.4L961.7 417.3L954.7 415.5ZM937.2 437.8L936.7 433.9L943.7 435.6ZM844.9 509.8L844.4 505.9L851.4 507.6ZM868.9 485.4L869.4 489.3L862.4 487.6ZM892.4 457.0L898.8 454.8L899.3 458.7ZM928.8 424.3L929.2 428.2L922.3 426.4ZM934.8 418.1L934.3 414.2L941.2 416.0ZM904.8 448.7L904.3 444.8L911.3 446.5ZM874.9 479.3L874.4 475.3L881.3 477.1ZM896.4 435.2L896.8 439.1L889.9 437.4ZM926.3 404.6L926.8 408.5L919.8 406.8ZM866.4 465.7L866.9 469.7L860.0 467.9ZM842.5 490.2L842.0 486.3L848.9 488.0ZM836.5 496.3L837.0 500.2L830.0 498.5ZM872.4 459.6L871.9 455.7L878.9 457.4ZM902.4 429.1L901.9 425.1L908.8 426.9ZM864.0 446.1L864.4 450.0L857.5 448.3ZM834.0 476.6L834.5 480.6L827.5 478.8ZM870.0 440.0L869.5 436.0L876.4 437.8ZM893.9 415.5L894.4 419.4L887.4 417.7ZM899.9 409.4L899.4 405.5L906.4 407.2ZM810.1 501.1L809.6 497.2L816.5 498.9ZM840.0 470.5L839.5 466.6L846.5 468.3ZM861.5 426.4L862.0 430.4L855.0 428.6ZM891.4 395.9L891.9 399.8L885.0 398.1ZM837.6 450.9L837.1 447.0L844.0 448.7ZM831.6 457.0L832.0 460.9L825.1 459.2ZM807.6 481.4L807.1 477.5L814.1 479.3ZM801.6 487.6L802.1 491.5L795.1 489.7ZM867.5 420.3L867.0 416.4L874.0 418.1ZM822.6 439.5L829.1 437.3L829.6 441.3ZM865.0 400.7L864.5 396.7L871.5 398.5ZM835.1 431.2L834.6 427.3L841.6 429.0ZM805.1 461.8L804.7 457.9L811.6 459.6ZM799.1 467.9L799.6 471.8L792.7 470.1ZM859.0 406.8L859.5 410.7L852.6 409.0ZM775.2 492.3L774.7 488.4L781.7 490.2ZM826.6 417.7L827.1 421.6L820.2 419.9ZM802.7 442.1L802.2 438.2L809.2 440.0ZM766.7 478.8L767.2 482.7L760.3 481.0ZM856.6 387.1L857.1 391.1L850.1 389.3ZM772.7 472.7L772.3 468.8L779.2 470.5ZM796.7 448.3L797.2 452.2L790.2 450.4ZM832.6 411.6L832.1 407.7L839.1 409.4ZM824.2 398.0L824.7 402.0L817.7 400.2ZM830.2 391.9L829.7 388.0L836.6 389.7ZM800.2 422.5L799.7 418.6L806.7 420.3ZM794.2 428.6L794.7 432.5L787.8 430.8ZM764.3 459.2L764.8 463.1L757.8 461.3ZM740.3 483.6L739.9 479.7L746.8 481.4ZM770.3 453.0L769.8 449.1L776.8 450.9ZM821.7 378.4L822.2 382.3L815.3 380.6ZM761.8 439.5L762.3 443.4L755.4 441.7ZM797.8 402.8L797.3 398.9L804.2 400.7ZM767.8 433.4L767.3 429.5L774.3 431.2ZM737.9 464.0L737.4 460.0L744.3 461.8ZM731.9 470.1L732.4 474.0L725.4 472.3ZM791.8 409.0L792.3 412.9L785.3 411.1ZM752.9 422.0L759.4 419.9L759.9 423.8ZM795.3 383.2L794.8 379.3L801.8 381.0ZM729.4 450.4L729.9 454.3L723.0 452.6ZM765.4 413.7L764.9 409.8L771.8 411.6ZM789.3 389.3L789.8 393.2L782.9 391.5ZM705.5 474.9L705.0 470.9L711.9 472.7ZM735.4 444.3L734.9 440.4L741.9 442.1ZM733.0 424.7L732.5 420.7L739.4 422.5ZM786.9 369.7L787.4 373.6L780.4 371.8ZM756.9 400.2L757.4 404.1L750.5 402.4ZM727.0 430.8L727.5 434.7L720.5 433.0ZM703.0 455.2L702.5 451.3L709.5 453.0ZM697.0 461.3L697.5 465.3L690.6 463.5ZM762.9 394.1L762.4 390.2L769.4 391.9ZM718.1 413.3L724.5 411.1L725.0 415.0ZM760.5 374.4L760.0 370.5L766.9 372.3ZM754.5 380.6L754.9 384.5L748.0 382.7ZM730.5 405.0L730.0 401.1L737.0 402.8ZM700.6 435.6L700.1 431.6L707.0 433.4ZM694.6 441.7L695.1 445.6L688.1 443.9ZM670.6 466.1L670.1 462.2L677.1 463.9ZM698.1 415.9L697.6 412.0L704.6 413.7ZM692.1 422.0L692.6 426.0L685.6 424.2ZM722.1 391.5L722.5 395.4L715.6 393.7ZM752.0 360.9L752.5 364.8L745.5 363.1ZM728.1 385.4L727.6 381.4L734.5 383.2ZM668.2 446.5L667.7 442.6L674.6 444.3ZM662.2 452.6L662.7 456.5L655.7 454.8ZM665.7 426.8L665.2 422.9L672.2 424.6ZM695.7 396.3L695.2 392.3L702.1 394.1ZM719.6 371.8L720.1 375.7L713.1 374.0ZM725.6 365.7L725.1 361.8L732.1 363.5ZM635.8 457.4L635.3 453.5L642.2 455.2ZM659.7 432.9L660.2 436.9L653.2 435.1ZM689.7 402.4L690.1 406.3L683.2 404.6ZM717.1 352.2L717.6 356.1L710.7 354.4ZM693.2 376.6L692.7 372.7L699.7 374.4ZM633.3 437.7L632.8 433.8L639.8 435.6ZM687.2 382.7L687.7 386.7L680.7 384.9ZM627.3 443.9L627.8 447.8L620.8 446.0ZM669.7 405.0L663.3 407.2L662.8 403.3ZM657.3 413.3L657.7 417.2L650.8 415.5ZM690.7 357.0L690.3 353.0L697.2 354.8ZM624.8 424.2L625.3 428.1L618.4 426.4ZM684.7 363.1L685.2 367.0L678.3 365.3ZM660.8 387.5L660.3 383.6L667.3 385.4ZM600.9 448.6L600.4 444.7L607.4 446.5ZM648.3 395.8L654.8 393.6L655.3 397.6ZM630.8 418.1L630.4 414.2L637.3 415.9ZM592.4 435.1L592.9 439.0L586.0 437.3ZM598.4 429.0L598.0 425.1L604.9 426.8ZM658.3 367.9L657.8 364.0L664.8 365.7ZM652.3 374.0L652.8 377.9L645.9 376.2ZM682.3 343.4L682.8 347.4L675.8 345.6ZM628.4 398.4L627.9 394.5L634.9 396.3ZM622.4 404.6L622.9 408.5L615.9 406.7ZM566.0 439.9L565.6 436.0L572.5 437.7ZM590.0 415.5L590.5 419.4L583.5 417.6ZM655.9 348.2L655.4 344.3L662.3 346.1ZM649.9 354.4L650.4 358.3L643.4 356.5ZM625.9 378.8L625.4 374.9L632.4 376.6ZM596.0 409.3L595.5 405.4L602.5 407.2ZM613.5 387.1L619.9 384.9L620.4 388.8ZM563.6 420.3L563.1 416.3L570.0 418.1ZM623.5 359.1L623.0 355.2L629.9 357.0ZM647.4 334.7L647.9 338.6L641.0 336.9ZM617.5 365.3L618.0 369.2L611.0 367.4ZM593.5 389.7L593.0 385.8L600.0 387.5ZM587.5 395.8L588.0 399.7L581.1 398.0ZM557.6 426.4L558.1 430.3L551.1 428.6ZM531.2 431.2L530.7 427.2L537.6 429.0ZM621.0 339.5L620.5 335.6L627.5 337.3ZM615.0 345.6L615.5 349.5L608.6 347.8ZM591.1 370.0L590.6 366.1L597.5 367.9ZM585.1 376.2L585.6 380.1L578.6 378.3ZM561.1 400.6L560.6 396.7L567.6 398.4ZM555.1 406.7L555.6 410.6L548.7 408.9ZM528.7 411.5L528.2 407.6L535.2 409.3ZM612.6 326.0L613.1 329.9L606.1 328.1ZM582.6 356.5L583.1 360.4L576.2 358.7ZM558.7 381.0L558.2 377.0L565.1 378.8ZM552.7 387.1L553.2 391.0L546.2 389.3ZM522.7 417.6L523.2 421.6L516.3 419.8ZM588.6 350.4L588.1 346.5L595.1 348.2ZM496.3 422.4L495.8 418.5L502.8 420.3ZM526.3 391.9L525.8 387.9L532.7 389.7ZM556.2 361.3L555.7 357.4L562.7 359.1ZM580.2 336.9L580.7 340.8L573.7 339.0ZM586.2 330.8L585.7 326.8L592.6 328.6ZM520.3 398.0L520.8 401.9L513.8 400.2ZM543.8 369.6L550.2 367.4L550.7 371.4ZM553.8 341.7L553.3 337.7L560.2 339.5ZM577.7 317.2L578.2 321.1L571.2 319.4ZM523.8 372.2L523.3 368.3L530.3 370.0ZM517.8 378.3L518.3 382.3L511.4 380.5ZM493.9 402.8L493.4 398.9L500.3 400.6ZM487.9 408.9L488.4 412.8L481.4 411.1ZM547.8 347.8L548.3 351.7L541.3 350.0ZM551.3 322.0L550.8 318.1L557.8 319.8ZM491.4 383.1L490.9 379.2L497.9 381.0ZM515.4 358.7L515.8 362.6L508.9 360.9ZM521.4 352.6L520.9 348.7L527.8 350.4ZM545.3 328.1L545.8 332.1L538.8 330.3ZM485.4 389.3L485.9 393.2L478.9 391.4ZM461.5 413.7L461.0 409.8L467.9 411.5ZM483.0 369.6L483.4 373.5L476.5 371.8ZM489.0 363.5L488.5 359.6L495.4 361.3ZM512.9 339.0L513.4 343.0L506.4 341.2ZM518.9 332.9L518.4 329.0L525.4 330.7ZM542.9 308.5L543.3 312.4L536.4 310.7ZM459.0 394.0L458.5 390.1L465.5 391.9ZM453.0 400.2L453.5 404.1L446.5 402.3ZM486.5 343.8L486.0 339.9L493.0 341.7ZM516.4 313.3L516.0 309.4L522.9 311.1ZM510.4 319.4L510.9 323.3L504.0 321.6ZM474.0 352.1L480.5 350.0L481.0 353.9ZM426.6 404.9L426.1 401.0L433.1 402.8ZM456.6 374.4L456.1 370.5L463.0 372.2ZM450.5 380.5L451.0 384.4L444.1 382.7ZM448.1 360.9L448.6 364.8L441.6 363.0ZM454.1 354.7L453.6 350.8L460.6 352.6ZM478.0 330.3L478.5 334.2L471.6 332.5ZM484.0 324.2L483.6 320.3L490.5 322.0ZM508.0 299.7L508.5 303.7L501.5 301.9ZM418.1 391.4L418.6 395.3L411.7 393.6ZM424.1 385.3L423.7 381.4L430.6 383.1ZM451.6 335.1L451.2 331.2L458.1 332.9ZM475.6 310.7L476.1 314.6L469.1 312.8ZM481.6 304.5L481.1 300.6L488.1 302.4ZM439.2 343.4L445.6 341.2L446.1 345.1ZM391.7 396.2L391.3 392.3L398.2 394.0ZM421.7 365.7L421.2 361.7L428.2 363.5ZM415.7 371.8L416.2 375.7L409.2 373.9ZM413.2 352.1L413.7 356.0L406.8 354.3ZM449.2 315.4L448.7 311.5L455.6 313.3ZM443.2 321.6L443.7 325.5L436.7 323.7ZM419.2 346.0L418.7 342.1L425.7 343.8ZM389.3 376.6L388.8 372.6L395.7 374.4ZM376.8 384.9L383.3 382.7L383.8 386.6ZM410.8 332.5L411.3 336.4L404.3 334.7ZM446.7 295.8L446.2 291.9L453.2 293.6ZM440.7 301.9L441.2 305.8L434.3 304.1ZM416.8 326.4L416.3 322.4L423.2 324.2ZM386.8 356.9L386.3 353.0L393.3 354.7ZM380.8 363.0L381.3 367.0L374.4 365.2ZM384.4 337.3L383.9 333.3L390.8 335.1ZM408.3 312.8L408.8 316.7L401.9 315.0ZM414.3 306.7L413.8 302.8L420.8 304.5ZM354.4 367.8L353.9 363.9L360.9 365.6ZM378.4 343.4L378.9 347.3L371.9 345.6ZM405.9 293.2L406.4 297.1L399.4 295.4ZM381.9 317.6L381.4 313.7L388.4 315.4ZM346.0 354.3L346.5 358.2L339.5 356.5ZM369.5 325.9L375.9 323.7L376.4 327.7ZM352.0 348.2L351.5 344.3L358.4 346.0ZM379.5 298.0L379.0 294.0L385.9 295.8ZM343.5 334.6L344.0 338.6L337.1 336.8ZM319.6 359.1L319.1 355.2L326.0 356.9ZM349.5 328.5L349.0 324.6L356.0 326.3ZM373.5 304.1L374.0 308.0L367.0 306.3ZM311.1 345.6L311.6 349.5L304.7 347.7ZM341.1 315.0L341.6 318.9L334.6 317.2ZM317.1 339.4L316.6 335.5L323.6 337.3ZM347.1 308.9L346.6 305.0L353.5 306.7ZM308.7 325.9L309.1 329.8L302.2 328.1ZM314.7 319.8L314.2 315.9L321.1 317.6ZM338.6 295.4L339.1 299.3L332.1 297.5ZM299.7 308.4L306.2 306.3L306.7 310.2ZM282.3 330.7L281.8 326.8L288.7 328.5ZM312.2 300.1L311.7 296.2L318.7 298.0ZM279.8 311.0L279.3 307.1L286.3 308.9ZM273.8 317.2L274.3 321.1L267.3 319.3ZM271.3 297.5L271.8 301.4L264.9 299.7Z" fill="#0078e8" fill-opacity=".35"/>
<defs><path id="mtop" d="M257.1 302.3L258.4 301.9L272.3 305.4L273.3 313.2L260.6 317.5L261.2 320.0L263.4 322.2L274.8 325.0L275.8 332.9L274.6 333.3L276.0 334.6L282.5 339.2L283.3 339.0L282.7 334.6L295.7 330.3L309.6 333.8L310.6 341.6L297.7 346.0L291.7 344.5L291.0 344.9L298.5 350.0L312.1 353.4L313.2 361.9L320.3 364.7L320.1 363.0L333.0 358.7L347.0 362.2L347.9 370.0L336.8 373.8L345.8 374.8L348.4 373.9L348.9 377.9L353.0 386.3L362.7 389.6L370.3 387.0L384.3 390.5L385.3 398.9L392.4 401.4L392.2 400.1L405.2 395.8L419.1 399.3L420.1 407.1L414.4 409.1L427.6 413.3L427.1 408.9L440.0 404.5L454.0 408.0L455.0 415.9L445.6 419.0L452.2 420.9L455.5 419.8L455.7 421.9L462.7 423.9L462.0 417.6L474.9 413.3L488.8 416.8L489.8 424.6L478.5 428.4L481.5 429.3L485.4 430.2L490.3 428.6L490.7 431.5L497.7 433.2L496.8 426.4L509.8 422.0L523.7 425.5L524.7 433.4L513.5 437.1L520.5 438.9L525.2 437.3L525.5 440.1L532.5 441.9L531.7 435.1L544.6 430.7L558.6 434.2L559.5 442.1L548.4 445.8L555.4 447.6L560.0 446.0L560.4 448.8L567.4 450.6L566.5 443.8L579.5 439.5L593.4 443.0L594.4 450.8L583.3 454.6L590.3 456.3L594.9 454.8L595.2 457.5L602.2 459.3L601.4 452.6L614.3 448.2L628.3 451.7L629.3 459.6L618.2 463.3L625.2 465.0L629.8 463.5L630.1 466.3L637.1 468.0L636.3 461.3L649.2 457.0L663.1 460.5L664.1 468.3L653.2 472.0L660.2 473.7L664.6 472.2L665.0 474.9L669.2 476.0L671.9 476.6L671.1 470.1L684.1 465.7L698.0 469.2L699.0 477.1L689.3 480.3L696.7 481.9L699.5 481.0L699.7 482.6L706.6 484.1L706.0 478.8L718.9 474.4L732.9 477.9L733.8 485.8L726.3 488.3L741.3 491.5L740.8 487.5L753.8 483.2L767.7 486.7L768.7 494.5L763.6 496.3L773.7 498.4L776.0 499.0L775.7 496.3L788.7 491.9L802.6 495.4L803.6 503.3L799.1 504.8L804.9 506.2L810.8 507.2L810.6 505.0L823.5 500.7L837.5 504.2L838.4 511.8L842.3 512.4L846.5 513.4L858.4 509.4L872.3 512.9L873.2 519.6L879.6 521.1L883.7 521.3L893.2 518.1L907.2 521.6L907.3 522.7L914.4 523.1L933.6 525.0L941.1 522.5L941.5 525.8L944.3 526.1L948.4 526.8L947.5 520.3L960.5 516.0L974.4 519.5L975.4 527.3L967.7 529.9L982.8 532.5L982.4 529.1L995.4 524.7L1009.3 528.2L1010.3 536.1L1008.2 536.7L1016.2 538.2L1030.2 533.4L1044.2 536.9L1045.0 543.5L1055.5 545.4L1065.1 542.2L1079.0 545.7L1079.5 549.4L1086.4 550.6L1086.0 547.4L1093.0 549.2L1088.0 550.8L1094.9 552.6L1099.9 550.9L1113.9 554.4L1114.3 557.6L1115.3 557.9L1121.1 557.7L1120.9 556.2L1126.1 557.5L1143.3 556.8L1147.8 555.3L1147.8 555.8L1154.4 554.2L1154.3 553.1L1167.2 548.8L1167.7 548.9L1177.0 543.6L1180.1 541.0L1179.2 540.6L1166.7 544.8L1152.8 541.3L1151.8 533.5L1164.8 529.1L1178.7 532.6L1179.7 540.7L1180.4 540.8L1185.9 536.2L1185.7 534.3L1187.5 534.8L1190.2 532.6L1190.7 531.8L1185.2 530.4L1184.2 522.6L1197.2 518.2L1198.9 518.6L1200.5 516.0L1200.4 513.0L1196.7 514.3L1182.7 510.8L1181.7 502.9L1194.7 498.5L1198.2 499.4L1196.8 496.2L1194.1 494.6L1180.3 491.1L1179.9 488.1L1172.9 486.4L1173.3 489.4L1166.3 487.6L1171.2 486.0L1168.2 485.2L1163.6 484.4L1159.3 485.9L1145.4 482.4L1144.9 478.3L1137.9 475.1L1137.7 475.1L1137.7 475.2L1131.7 474.7L1124.5 477.1L1110.5 473.6L1110.3 471.5L1103.5 467.7L1098.5 465.4L1089.6 468.4L1075.7 464.9L1074.7 457.0L1078.1 455.9L1067.3 450.9L1067.2 450.9L1067.7 455.3L1054.8 459.6L1040.8 456.2L1039.8 448.3L1049.5 445.0L1043.5 443.0L1039.3 444.4L1039.0 441.4L1035.7 440.3L1032.0 438.6L1031.9 438.6L1032.8 446.5L1019.9 450.9L1006.0 447.4L1005.0 439.6L1017.9 435.2L1027.0 437.5L1027.9 436.8L1013.9 430.4L1003.5 427.8L1003.2 425.5L996.2 422.3L996.1 422.3L996.5 426.0L989.6 424.3L996.0 422.1L989.7 420.1L982.6 422.5L968.6 419.0L967.9 413.2L958.4 410.2L947.7 413.8L933.8 410.3L932.8 402.2L926.9 400.3L912.9 405.0L898.9 401.5L897.9 393.7L901.0 392.7L890.7 389.6L890.9 391.9L878.0 396.3L864.1 392.8L863.1 385.0L867.6 383.4L863.5 382.3L855.7 379.8L856.1 383.2L843.1 387.6L829.2 384.1L828.2 376.2L835.9 373.6L829.6 371.6L827.7 372.3L827.6 371.0L820.5 368.8L821.2 374.5L808.3 378.8L794.3 375.3L793.4 367.5L803.4 364.1L796.6 362.3L792.9 363.5L792.6 361.2L785.6 359.2L786.4 365.7L773.4 370.1L759.5 366.6L758.5 358.7L769.5 355.0L762.7 353.2L758.0 354.8L757.6 351.9L750.6 350.0L751.5 357.0L738.6 361.3L724.6 357.9L723.6 350.0L734.9 346.2L727.8 344.5L723.1 346.1L722.8 343.3L715.8 341.6L716.7 348.2L703.7 352.6L689.8 349.1L688.8 341.3L699.8 337.5L692.8 335.8L688.3 337.3L687.9 334.6L681.0 332.8L681.8 339.5L668.8 343.9L654.9 340.4L653.9 332.5L664.9 328.8L657.9 327.1L653.4 328.6L653.1 325.8L646.1 324.1L646.9 330.8L634.0 335.1L620.0 331.6L619.1 323.8L628.7 320.5L621.1 319.0L618.6 319.8L618.4 318.4L611.4 317.0L612.1 322.0L599.1 326.4L585.2 322.9L584.2 315.0L591.4 312.6L576.7 309.5L577.2 313.3L564.3 317.6L550.3 314.2L549.3 306.3L552.9 305.1L542.2 303.1L542.4 304.5L529.4 308.9L515.5 305.4L514.4 297.1L507.9 295.7L494.5 300.2L480.6 296.7L479.9 291.1L476.4 290.5L463.8 290.0L459.7 291.4L452.5 289.6L439.1 289.1L440.2 298.0L427.3 302.3L413.3 298.8L412.4 291.0L418.9 288.8L418.8 288.5L407.6 288.2L405.2 288.0L405.4 289.2L392.4 293.6L378.5 290.1L377.9 285.2L371.1 285.1L371.5 288.4L364.6 286.6L368.2 285.4L368.0 285.1L344.5 284.7L344.2 285.3L351.1 287.1L344.6 289.2L344.0 284.7L337.3 284.6L338.1 291.4L325.2 295.8L311.2 292.3L310.5 286.9L303.9 287.6L304.2 290.5L296.6 288.6L287.5 289.9L272.0 292.7L270.8 293.1L270.9 293.6L260.3 297.1L256.6 300.4ZM356.9 387.5L356.4 383.6L363.3 385.3ZM473.1 291.0L473.6 294.9L466.7 293.2ZM1103.1 468.0L1103.6 471.9L1096.6 470.1ZM1137.9 476.7L1138.4 480.6L1131.5 478.9ZM1153.8 549.2L1153.3 545.3L1160.2 547.0ZM1183.7 518.6L1183.2 514.7L1190.2 516.4ZM1171.2 526.9L1177.7 524.7L1178.2 528.7ZM1119.4 544.4L1132.4 540.0L1146.3 543.5L1147.3 551.4L1134.3 555.7L1120.4 552.2ZM1149.3 513.8L1162.3 509.5L1176.2 512.9L1177.2 520.8L1164.3 525.2L1150.3 521.7ZM1145.3 535.7L1145.8 539.6L1138.8 537.8ZM1151.3 529.5L1150.8 525.6L1157.8 527.4ZM1175.2 505.1L1175.7 509.0L1168.8 507.3ZM1181.2 499.0L1180.8 495.0L1187.7 496.8ZM1146.9 494.2L1159.8 489.8L1173.8 493.3L1174.8 501.2L1161.8 505.5L1147.9 502.0ZM1116.9 524.7L1129.9 520.4L1143.8 523.9L1144.8 531.7L1131.9 536.1L1117.9 532.6ZM1142.8 516.0L1143.3 519.9L1136.4 518.2ZM1148.8 509.9L1148.4 506.0L1155.3 507.7ZM1118.9 540.4L1118.4 536.5L1125.4 538.3ZM1112.9 546.6L1113.4 550.5L1106.4 548.7ZM1084.5 535.6L1097.5 531.3L1111.4 534.8L1112.4 542.6L1099.5 547.0L1085.5 543.5ZM1114.5 505.1L1127.4 500.7L1141.4 504.2L1142.4 512.1L1129.4 516.4L1115.5 512.9ZM1110.4 526.9L1110.9 530.8L1104.0 529.1ZM1116.4 520.8L1116.0 516.9L1122.9 518.6ZM1140.4 496.4L1140.9 500.3L1133.9 498.5ZM1146.4 490.2L1145.9 486.3L1152.8 488.1ZM1112.0 485.4L1125.0 481.1L1138.9 484.6L1139.9 492.4L1126.9 496.8L1113.0 493.3ZM1082.1 516.0L1095.0 511.6L1109.0 515.1L1109.9 523.0L1097.0 527.3L1083.1 523.8ZM1114.0 501.1L1113.5 497.2L1120.4 499.0ZM1084.0 531.7L1083.6 527.8L1090.5 529.5ZM1078.0 537.8L1078.5 541.7L1071.6 540.0ZM1108.0 507.3L1108.5 511.2L1101.5 509.4ZM1079.6 496.3L1092.6 492.0L1106.5 495.5L1107.5 503.3L1094.5 507.7L1080.6 504.2ZM1049.7 526.9L1062.6 522.5L1076.6 526.0L1077.5 533.9L1064.6 538.2L1050.7 534.8ZM1081.6 512.0L1081.1 508.1L1088.0 509.9ZM1105.5 487.6L1106.0 491.5L1099.1 489.8ZM1051.6 542.6L1051.1 538.7L1058.1 540.4ZM1075.6 518.2L1076.1 522.1L1069.1 520.3ZM1111.5 481.5L1111.0 477.6L1118.0 479.3ZM1077.2 476.7L1090.1 472.3L1104.0 475.8L1105.0 483.7L1092.1 488.0L1078.1 484.5ZM1047.2 507.2L1060.2 502.9L1074.1 506.4L1075.1 514.2L1062.1 518.6L1048.2 515.1ZM1079.1 492.4L1078.6 488.5L1085.6 490.2ZM1073.1 498.5L1073.6 502.4L1066.7 500.7ZM1043.2 529.1L1043.7 533.0L1036.7 531.3ZM1049.2 523.0L1048.7 519.0L1055.6 520.8ZM1014.8 518.2L1027.8 513.8L1041.7 517.3L1042.7 525.1L1029.7 529.5L1015.8 526.0ZM1044.8 487.6L1057.7 483.2L1071.6 486.7L1072.6 494.6L1059.7 498.9L1045.7 495.5ZM1016.8 533.9L1016.3 530.0L1023.2 531.7ZM1040.7 509.4L1041.2 513.4L1034.3 511.6ZM1046.7 503.3L1046.2 499.4L1053.2 501.1ZM1070.7 478.9L1071.2 482.8L1064.2 481.0ZM1076.7 472.7L1076.2 468.8L1083.1 470.6ZM1042.3 467.9L1055.2 463.6L1069.2 467.1L1070.2 474.9L1057.2 479.3L1043.3 475.8ZM1012.4 498.5L1025.3 494.1L1039.2 497.6L1040.2 505.5L1027.3 509.9L1013.3 506.4ZM1038.3 489.8L1038.8 493.7L1031.8 492.0ZM1008.3 520.3L1008.8 524.3L1001.9 522.5ZM1044.3 483.7L1043.8 479.7L1050.7 481.5ZM1068.2 459.2L1068.7 463.1L1061.7 461.4ZM1014.3 514.2L1013.8 510.3L1020.8 512.0ZM979.9 509.4L992.9 505.1L1006.8 508.6L1007.8 516.4L994.9 520.8L980.9 517.3ZM1009.9 478.9L1022.8 474.5L1036.8 478.0L1037.8 485.8L1024.8 490.2L1010.9 486.7ZM981.9 525.1L981.4 521.2L988.4 523.0ZM1005.9 500.7L1006.3 504.6L999.4 502.9ZM1011.9 494.6L1011.4 490.7L1018.3 492.4ZM1035.8 470.1L1036.3 474.1L1029.3 472.3ZM1041.8 464.0L1041.3 460.1L1048.3 461.8ZM1007.4 459.2L1020.4 454.8L1034.3 458.3L1035.3 466.2L1022.4 470.6L1008.4 467.1ZM977.5 489.8L990.4 485.4L1004.4 488.9L1005.4 496.8L992.4 501.1L978.5 497.6ZM996.9 483.2L1003.4 481.0L1003.9 485.0ZM1033.3 450.5L1033.8 454.4L1026.9 452.7ZM1009.4 474.9L1008.9 471.0L1015.9 472.7ZM979.5 505.5L979.0 501.6L985.9 503.3ZM973.5 511.6L973.9 515.5L967.0 513.8ZM975.0 470.1L988.0 465.8L1001.9 469.2L1002.9 477.1L990.0 481.5L976.0 478.0ZM945.1 500.7L958.0 496.3L972.0 499.8L973.0 507.7L960.0 512.0L946.1 508.5ZM977.0 485.8L976.5 481.9L983.5 483.7ZM1000.9 461.4L1001.4 465.3L994.5 463.6ZM947.1 516.4L946.6 512.5L953.5 514.2ZM971.0 492.0L971.5 495.9L964.5 494.1ZM1006.9 455.3L1006.4 451.4L1013.4 453.1ZM972.6 450.5L985.5 446.1L999.5 449.6L1000.4 457.5L987.5 461.8L973.6 458.3ZM912.7 511.6L925.6 507.2L939.6 510.7L940.6 518.6L927.6 522.9L913.7 519.4ZM942.6 481.0L955.6 476.7L969.5 480.2L970.5 488.0L957.5 492.4L943.6 488.9ZM1004.5 435.6L1004.0 431.7L1010.9 433.4ZM962.1 474.5L968.5 472.3L969.0 476.2ZM998.5 441.7L999.0 445.7L992.0 443.9ZM974.5 466.2L974.0 462.3L981.0 464.0ZM938.6 502.9L939.1 506.8L932.1 505.0ZM944.6 496.7L944.1 492.8L951.1 494.6ZM970.1 430.8L983.1 426.5L997.0 429.9L998.0 437.8L985.0 442.2L971.1 438.7ZM940.2 461.4L953.1 457.0L967.1 460.5L968.0 468.4L955.1 472.7L941.2 469.2ZM910.2 491.9L923.2 487.6L937.1 491.1L938.1 498.9L925.1 503.3L911.2 499.8ZM966.1 452.7L966.6 456.6L959.6 454.8ZM972.1 446.5L971.6 442.6L978.5 444.4ZM942.1 477.1L941.6 473.2L948.6 474.9ZM936.1 483.2L936.6 487.1L929.7 485.4ZM912.2 507.7L911.7 503.7L918.7 505.5ZM906.2 513.8L906.7 517.7L899.7 516.0ZM937.7 441.7L950.7 437.4L964.6 440.9L965.6 448.7L952.6 453.1L938.7 449.6ZM907.8 472.3L920.7 467.9L934.7 471.4L935.6 479.3L922.7 483.6L908.7 480.1ZM877.8 502.9L890.8 498.5L904.7 502.0L905.7 509.8L892.7 514.2L878.8 510.7ZM903.7 494.1L904.2 498.0L897.3 496.3ZM969.6 426.9L969.1 423.0L976.1 424.7ZM933.7 463.6L934.2 467.5L927.2 465.7ZM909.7 488.0L909.2 484.1L916.2 485.8ZM939.7 457.4L939.2 453.5L946.1 455.3ZM963.6 433.0L964.1 436.9L957.2 435.2ZM886.3 516.4L879.8 518.6L879.3 514.6ZM905.3 452.6L918.3 448.3L932.2 451.8L933.2 459.6L920.2 464.0L906.3 460.5ZM875.4 483.2L888.3 478.8L902.3 482.3L903.2 490.2L890.3 494.6L876.3 491.1ZM935.3 422.1L948.2 417.7L962.1 421.2L963.1 429.1L950.2 433.4L936.2 429.9ZM871.3 505.0L871.8 509.0L864.9 507.2ZM931.2 443.9L931.7 447.8L924.8 446.1ZM877.3 498.9L876.8 495.0L883.8 496.7ZM907.3 468.4L906.8 464.4L913.7 466.2ZM901.3 474.5L901.8 478.4L894.8 476.7ZM961.2 413.4L961.7 417.3L954.7 415.5ZM937.2 437.8L936.7 433.9L943.7 435.6ZM843.0 494.1L855.9 489.7L869.9 493.2L870.8 501.1L857.9 505.5L843.9 502.0ZM902.8 433.0L915.8 428.6L929.7 432.1L930.7 440.0L917.8 444.3L903.8 440.8ZM872.9 463.5L885.9 459.2L899.8 462.7L900.8 470.5L887.8 474.9L873.9 471.4ZM844.9 509.8L844.4 505.9L851.4 507.6ZM868.9 485.4L869.4 489.3L862.4 487.6ZM892.4 457.0L898.8 454.8L899.3 458.7ZM928.8 424.3L929.2 428.2L922.3 426.4ZM934.8 418.1L934.3 414.2L941.2 416.0ZM904.8 448.7L904.3 444.8L911.3 446.5ZM874.9 479.3L874.4 475.3L881.3 477.1ZM870.4 443.9L883.4 439.5L897.3 443.0L898.3 450.9L885.4 455.2L871.4 451.8ZM840.5 474.5L853.5 470.1L867.4 473.6L868.4 481.4L855.4 485.8L841.5 482.3ZM900.4 413.3L913.3 409.0L927.3 412.5L928.3 420.3L915.3 424.7L901.4 421.2ZM896.4 435.2L896.8 439.1L889.9 437.4ZM926.3 404.6L926.8 408.5L919.8 406.8ZM866.4 465.7L866.9 469.7L860.0 467.9ZM842.5 490.2L842.0 486.3L848.9 488.0ZM836.5 496.3L837.0 500.2L830.0 498.5ZM872.4 459.6L871.9 455.7L878.9 457.4ZM902.4 429.1L901.9 425.1L908.8 426.9ZM838.0 454.8L851.0 450.4L864.9 453.9L865.9 461.8L853.0 466.2L839.0 462.7ZM868.0 424.2L880.9 419.9L894.9 423.4L895.9 431.2L882.9 435.6L869.0 432.1ZM808.1 485.4L821.1 481.0L835.0 484.5L836.0 492.4L823.0 496.7L809.1 493.2ZM864.0 446.1L864.4 450.0L857.5 448.3ZM834.0 476.6L834.5 480.6L827.5 478.8ZM870.0 440.0L869.5 436.0L876.4 437.8ZM893.9 415.5L894.4 419.4L887.4 417.7ZM899.9 409.4L899.4 405.5L906.4 407.2ZM810.1 501.1L809.6 497.2L816.5 498.9ZM840.0 470.5L839.5 466.6L846.5 468.3ZM835.6 435.2L848.5 430.8L862.5 434.3L863.5 442.1L850.5 446.5L836.6 443.0ZM805.6 465.7L818.6 461.4L832.5 464.9L833.5 472.7L820.6 477.1L806.6 473.6ZM865.5 404.6L878.5 400.2L892.4 403.7L893.4 411.6L880.5 415.9L866.5 412.5ZM861.5 426.4L862.0 430.4L855.0 428.6ZM891.4 395.9L891.9 399.8L885.0 398.1ZM837.6 450.9L837.1 447.0L844.0 448.7ZM831.6 457.0L832.0 460.9L825.1 459.2ZM807.6 481.4L807.1 477.5L814.1 479.3ZM801.6 487.6L802.1 491.5L795.1 489.7ZM867.5 420.3L867.0 416.4L874.0 418.1ZM833.1 415.5L846.1 411.1L860.0 414.6L861.0 422.5L848.0 426.9L834.1 423.4ZM803.2 446.1L816.1 441.7L830.1 445.2L831.1 453.1L818.1 457.4L804.2 453.9ZM773.2 476.6L786.2 472.3L800.1 475.8L801.1 483.6L788.2 488.0L774.2 484.5ZM822.6 439.5L829.1 437.3L829.6 441.3ZM865.0 400.7L864.5 396.7L871.5 398.5ZM835.1 431.2L834.6 427.3L841.6 429.0ZM805.1 461.8L804.7 457.9L811.6 459.6ZM799.1 467.9L799.6 471.8L792.7 470.1ZM859.0 406.8L859.5 410.7L852.6 409.0ZM775.2 492.3L774.7 488.4L781.7 490.2ZM800.7 426.4L813.7 422.1L827.6 425.6L828.6 433.4L815.6 437.8L801.7 434.3ZM830.7 395.9L843.6 391.5L857.6 395.0L858.5 402.8L845.6 407.2L831.7 403.7ZM770.8 457.0L783.7 452.6L797.7 456.1L798.7 464.0L785.7 468.3L771.8 464.8ZM826.6 417.7L827.1 421.6L820.2 419.9ZM802.7 442.1L802.2 438.2L809.2 440.0ZM766.7 478.8L767.2 482.7L760.3 481.0ZM856.6 387.1L857.1 391.1L850.1 389.3ZM772.7 472.7L772.3 468.8L779.2 470.5ZM796.7 448.3L797.2 452.2L790.2 450.4ZM832.6 411.6L832.1 407.7L839.1 409.4ZM798.3 406.8L811.2 402.4L825.2 405.9L826.1 413.8L813.2 418.1L799.3 414.6ZM738.4 467.9L751.3 463.5L765.3 467.0L766.3 474.9L753.3 479.2L739.4 475.7ZM768.3 437.3L781.3 433.0L795.2 436.5L796.2 444.3L783.2 448.7L769.3 445.2ZM824.2 398.0L824.7 402.0L817.7 400.2ZM830.2 391.9L829.7 388.0L836.6 389.7ZM800.2 422.5L799.7 418.6L806.7 420.3ZM794.2 428.6L794.7 432.5L787.8 430.8ZM764.3 459.2L764.8 463.1L757.8 461.3ZM740.3 483.6L739.9 479.7L746.8 481.4ZM770.3 453.0L769.8 449.1L776.8 450.9ZM795.8 387.1L808.8 382.8L822.7 386.3L823.7 394.1L810.7 398.5L796.8 395.0ZM765.9 417.7L778.8 413.3L792.8 416.8L793.7 424.7L780.8 429.0L766.8 425.5ZM735.9 448.2L748.9 443.9L762.8 447.4L763.8 455.2L750.8 459.6L736.9 456.1ZM821.7 378.4L822.2 382.3L815.3 380.6ZM761.8 439.5L762.3 443.4L755.4 441.7ZM797.8 402.8L797.3 398.9L804.2 400.7ZM767.8 433.4L767.3 429.5L774.3 431.2ZM737.9 464.0L737.4 460.0L744.3 461.8ZM731.9 470.1L732.4 474.0L725.4 472.3ZM791.8 409.0L792.3 412.9L785.3 411.1ZM763.4 398.0L776.4 393.7L790.3 397.2L791.3 405.0L778.3 409.4L764.4 405.9ZM733.5 428.6L746.4 424.2L760.4 427.7L761.3 435.6L748.4 439.9L734.4 436.4ZM703.5 459.2L716.5 454.8L730.4 458.3L731.4 466.1L718.4 470.5L704.5 467.0ZM752.9 422.0L759.4 419.9L759.9 423.8ZM795.3 383.2L794.8 379.3L801.8 381.0ZM729.4 450.4L729.9 454.3L723.0 452.6ZM765.4 413.7L764.9 409.8L771.8 411.6ZM789.3 389.3L789.8 393.2L782.9 391.5ZM705.5 474.9L705.0 470.9L711.9 472.7ZM735.4 444.3L734.9 440.4L741.9 442.1ZM731.0 408.9L744.0 404.6L757.9 408.1L758.9 415.9L745.9 420.3L732.0 416.8ZM701.1 439.5L714.0 435.1L728.0 438.6L728.9 446.5L716.0 450.9L702.0 447.4ZM761.0 378.4L773.9 374.0L787.8 377.5L788.8 385.4L775.9 389.7L761.9 386.2ZM733.0 424.7L732.5 420.7L739.4 422.5ZM786.9 369.7L787.4 373.6L780.4 371.8ZM756.9 400.2L757.4 404.1L750.5 402.4ZM727.0 430.8L727.5 434.7L720.5 433.0ZM703.0 455.2L702.5 451.3L709.5 453.0ZM697.0 461.3L697.5 465.3L690.6 463.5ZM762.9 394.1L762.4 390.2L769.4 391.9ZM668.7 450.4L681.6 446.1L695.5 449.5L696.5 457.4L683.6 461.8L669.6 458.3ZM698.6 419.9L711.6 415.5L725.5 419.0L726.5 426.8L713.5 431.2L699.6 427.7ZM728.6 389.3L741.5 384.9L755.4 388.4L756.4 396.3L743.5 400.6L729.5 397.1ZM718.1 413.3L724.5 411.1L725.0 415.0ZM760.5 374.4L760.0 370.5L766.9 372.3ZM754.5 380.6L754.9 384.5L748.0 382.7ZM730.5 405.0L730.0 401.1L737.0 402.8ZM700.6 435.6L700.1 431.6L707.0 433.4ZM694.6 441.7L695.1 445.6L688.1 443.9ZM670.6 466.1L670.1 462.2L677.1 463.9ZM696.1 400.2L709.1 395.8L723.0 399.3L724.0 407.2L711.1 411.6L697.1 408.1ZM726.1 369.6L739.0 365.3L753.0 368.8L754.0 376.6L741.0 381.0L727.1 377.5ZM666.2 430.8L679.2 426.4L693.1 429.9L694.1 437.8L681.1 442.1L667.2 438.6ZM698.1 415.9L697.6 412.0L704.6 413.7ZM692.1 422.0L692.6 426.0L685.6 424.2ZM722.1 391.5L722.5 395.4L715.6 393.7ZM752.0 360.9L752.5 364.8L745.5 363.1ZM728.1 385.4L727.6 381.4L734.5 383.2ZM668.2 446.5L667.7 442.6L674.6 444.3ZM662.2 452.6L662.7 456.5L655.7 454.8ZM663.7 411.1L676.7 406.8L690.6 410.2L691.6 418.1L678.7 422.5L664.7 419.0ZM693.7 380.6L706.6 376.2L720.6 379.7L721.6 387.5L708.6 391.9L694.7 388.4ZM633.8 441.7L646.8 437.3L660.7 440.8L661.7 448.7L648.7 453.0L634.8 449.5ZM665.7 426.8L665.2 422.9L672.2 424.6ZM695.7 396.3L695.2 392.3L702.1 394.1ZM719.6 371.8L720.1 375.7L713.1 374.0ZM725.6 365.7L725.1 361.8L732.1 363.5ZM635.8 457.4L635.3 453.5L642.2 455.2ZM659.7 432.9L660.2 436.9L653.2 435.1ZM689.7 402.4L690.1 406.3L683.2 404.6ZM691.2 360.9L704.2 356.5L718.1 360.0L719.1 367.9L706.2 372.3L692.2 368.8ZM661.3 391.5L674.2 387.1L688.2 390.6L689.2 398.5L676.2 402.8L662.3 399.3ZM631.3 422.0L644.3 417.7L658.2 421.2L659.2 429.0L646.3 433.4L632.3 429.9ZM717.1 352.2L717.6 356.1L710.7 354.4ZM693.2 376.6L692.7 372.7L699.7 374.4ZM633.3 437.7L632.8 433.8L639.8 435.6ZM687.2 382.7L687.7 386.7L680.7 384.9ZM627.3 443.9L627.8 447.8L620.8 446.0ZM669.7 405.0L663.3 407.2L662.8 403.3ZM657.3 413.3L657.7 417.2L650.8 415.5ZM658.8 371.8L671.8 367.5L685.7 370.9L686.7 378.8L673.8 383.2L659.8 379.7ZM628.9 402.4L641.8 398.0L655.8 401.5L656.8 409.4L643.8 413.7L629.9 410.2ZM598.9 432.9L611.9 428.6L625.8 432.1L626.8 439.9L613.9 444.3L599.9 440.8ZM690.7 357.0L690.3 353.0L697.2 354.8ZM624.8 424.2L625.3 428.1L618.4 426.4ZM684.7 363.1L685.2 367.0L678.3 365.3ZM660.8 387.5L660.3 383.6L667.3 385.4ZM600.9 448.6L600.4 444.7L607.4 446.5ZM648.3 395.8L654.8 393.6L655.3 397.6ZM630.8 418.1L630.4 414.2L637.3 415.9ZM656.4 352.2L669.3 347.8L683.3 351.3L684.2 359.2L671.3 363.5L657.4 360.0ZM626.4 382.7L639.4 378.4L653.3 381.9L654.3 389.7L641.3 394.1L627.4 390.6ZM596.5 413.3L609.4 408.9L623.4 412.4L624.4 420.3L611.4 424.6L597.5 421.1ZM592.4 435.1L592.9 439.0L586.0 437.3ZM598.4 429.0L598.0 425.1L604.9 426.8ZM658.3 367.9L657.8 364.0L664.8 365.7ZM652.3 374.0L652.8 377.9L645.9 376.2ZM682.3 343.4L682.8 347.4L675.8 345.6ZM628.4 398.4L627.9 394.5L634.9 396.3ZM622.4 404.6L622.9 408.5L615.9 406.7ZM624.0 363.1L636.9 358.7L650.9 362.2L651.8 370.1L638.9 374.4L625.0 370.9ZM594.0 393.6L607.0 389.3L620.9 392.8L621.9 400.6L608.9 405.0L595.0 401.5ZM564.1 424.2L577.0 419.8L591.0 423.3L592.0 431.2L579.0 435.5L565.1 432.1ZM566.0 439.9L565.6 436.0L572.5 437.7ZM590.0 415.5L590.5 419.4L583.5 417.6ZM655.9 348.2L655.4 344.3L662.3 346.1ZM649.9 354.4L650.4 358.3L643.4 356.5ZM625.9 378.8L625.4 374.9L632.4 376.6ZM596.0 409.3L595.5 405.4L602.5 407.2ZM613.5 387.1L619.9 384.9L620.4 388.8ZM621.5 343.4L634.5 339.1L648.4 342.6L649.4 350.4L636.4 354.8L622.5 351.3ZM591.6 374.0L604.5 369.6L618.5 373.1L619.4 381.0L606.5 385.3L592.6 381.8ZM561.6 404.5L574.6 400.2L588.5 403.7L589.5 411.5L576.5 415.9L562.6 412.4ZM563.6 420.3L563.1 416.3L570.0 418.1ZM623.5 359.1L623.0 355.2L629.9 357.0ZM647.4 334.7L647.9 338.6L641.0 336.9ZM617.5 365.3L618.0 369.2L611.0 367.4ZM593.5 389.7L593.0 385.8L600.0 387.5ZM587.5 395.8L588.0 399.7L581.1 398.0ZM557.6 426.4L558.1 430.3L551.1 428.6ZM589.1 354.3L602.1 350.0L616.0 353.5L617.0 361.3L604.0 365.7L590.1 362.2ZM559.2 384.9L572.1 380.5L586.1 384.0L587.0 391.9L574.1 396.2L560.1 392.8ZM529.2 415.5L542.2 411.1L556.1 414.6L557.1 422.4L544.1 426.8L530.2 423.3ZM531.2 431.2L530.7 427.2L537.6 429.0ZM621.0 339.5L620.5 335.6L627.5 337.3ZM615.0 345.6L615.5 349.5L608.6 347.8ZM591.1 370.0L590.6 366.1L597.5 367.9ZM585.1 376.2L585.6 380.1L578.6 378.3ZM561.1 400.6L560.6 396.7L567.6 398.4ZM555.1 406.7L555.6 410.6L548.7 408.9ZM586.7 334.7L599.6 330.3L613.5 333.8L614.5 341.7L601.6 346.0L587.6 342.5ZM556.7 365.2L569.7 360.9L583.6 364.4L584.6 372.2L571.6 376.6L557.7 373.1ZM526.8 395.8L539.7 391.4L553.7 394.9L554.6 402.8L541.7 407.2L527.7 403.7ZM528.7 411.5L528.2 407.6L535.2 409.3ZM612.6 326.0L613.1 329.9L606.1 328.1ZM582.6 356.5L583.1 360.4L576.2 358.7ZM558.7 381.0L558.2 377.0L565.1 378.8ZM552.7 387.1L553.2 391.0L546.2 389.3ZM522.7 417.6L523.2 421.6L516.3 419.8ZM588.6 350.4L588.1 346.5L595.1 348.2ZM554.3 345.6L567.2 341.2L581.1 344.7L582.1 352.6L569.2 356.9L555.2 353.5ZM524.3 376.2L537.3 371.8L551.2 375.3L552.2 383.1L539.2 387.5L525.3 384.0ZM494.4 406.7L507.3 402.4L521.2 405.8L522.2 413.7L509.3 418.1L495.3 414.6ZM496.3 422.4L495.8 418.5L502.8 420.3ZM526.3 391.9L525.8 387.9L532.7 389.7ZM556.2 361.3L555.7 357.4L562.7 359.1ZM580.2 336.9L580.7 340.8L573.7 339.0ZM586.2 330.8L585.7 326.8L592.6 328.6ZM520.3 398.0L520.8 401.9L513.8 400.2ZM543.8 369.6L550.2 367.4L550.7 371.4ZM551.8 325.9L564.8 321.6L578.7 325.1L579.7 332.9L566.7 337.3L552.8 333.8ZM521.9 356.5L534.8 352.1L548.7 355.6L549.7 363.5L536.8 367.9L522.8 364.4ZM491.9 387.1L504.9 382.7L518.8 386.2L519.8 394.1L506.8 398.4L492.9 394.9ZM553.8 341.7L553.3 337.7L560.2 339.5ZM577.7 317.2L578.2 321.1L571.2 319.4ZM523.8 372.2L523.3 368.3L530.3 370.0ZM517.8 378.3L518.3 382.3L511.4 380.5ZM493.9 402.8L493.4 398.9L500.3 400.6ZM487.9 408.9L488.4 412.8L481.4 411.1ZM547.8 347.8L548.3 351.7L541.3 350.0ZM519.4 336.9L532.4 332.5L546.3 336.0L547.3 343.8L534.3 348.2L520.4 344.7ZM489.4 367.4L502.4 363.1L516.3 366.5L517.3 374.4L504.4 378.8L490.4 375.3ZM459.5 398.0L472.5 393.6L486.4 397.1L487.4 405.0L474.4 409.3L460.5 405.8ZM551.3 322.0L550.8 318.1L557.8 319.8ZM491.4 383.1L490.9 379.2L497.9 381.0ZM515.4 358.7L515.8 362.6L508.9 360.9ZM521.4 352.6L520.9 348.7L527.8 350.4ZM545.3 328.1L545.8 332.1L538.8 330.3ZM485.4 389.3L485.9 393.2L478.9 391.4ZM461.5 413.7L461.0 409.8L467.9 411.5ZM516.9 317.2L529.9 312.8L543.8 316.3L544.8 324.2L531.9 328.6L517.9 325.1ZM487.0 347.8L499.9 343.4L513.9 346.9L514.9 354.8L501.9 359.1L488.0 355.6ZM457.0 378.3L470.0 374.0L483.9 377.5L484.9 385.3L472.0 389.7L458.0 386.2ZM483.0 369.6L483.4 373.5L476.5 371.8ZM489.0 363.5L488.5 359.6L495.4 361.3ZM512.9 339.0L513.4 343.0L506.4 341.2ZM518.9 332.9L518.4 329.0L525.4 330.7ZM542.9 308.5L543.3 312.4L536.4 310.7ZM459.0 394.0L458.5 390.1L465.5 391.9ZM453.0 400.2L453.5 404.1L446.5 402.3ZM484.5 328.1L497.5 323.8L511.4 327.3L512.4 335.1L499.5 339.5L485.5 336.0ZM454.6 358.7L467.5 354.3L481.5 357.8L482.5 365.7L469.5 370.0L455.6 366.5ZM424.6 389.2L437.6 384.9L451.5 388.4L452.5 396.2L439.6 400.6L425.6 397.1ZM486.5 343.8L486.0 339.9L493.0 341.7ZM516.4 313.3L516.0 309.4L522.9 311.1ZM510.4 319.4L510.9 323.3L504.0 321.6ZM474.0 352.1L480.5 350.0L481.0 353.9ZM426.6 404.9L426.1 401.0L433.1 402.8ZM456.6 374.4L456.1 370.5L463.0 372.2ZM450.5 380.5L451.0 384.4L444.1 382.7ZM482.1 308.5L495.0 304.1L509.0 307.6L510.0 315.5L497.0 319.8L483.1 316.3ZM422.2 369.6L435.1 365.2L449.1 368.7L450.1 376.6L437.1 380.9L423.2 377.4ZM452.1 339.0L465.1 334.7L479.0 338.2L480.0 346.0L467.1 350.4L453.1 346.9ZM448.1 360.9L448.6 364.8L441.6 363.0ZM454.1 354.7L453.6 350.8L460.6 352.6ZM478.0 330.3L478.5 334.2L471.6 332.5ZM484.0 324.2L483.6 320.3L490.5 322.0ZM508.0 299.7L508.5 303.7L501.5 301.9ZM418.1 391.4L418.6 395.3L411.7 393.6ZM424.1 385.3L423.7 381.4L430.6 383.1ZM449.7 319.4L462.6 315.0L476.6 318.5L477.6 326.4L464.6 330.7L450.7 327.2ZM419.7 349.9L432.7 345.6L446.6 349.1L447.6 356.9L434.6 361.3L420.7 357.8ZM389.8 380.5L402.7 376.1L416.7 379.6L417.7 387.5L404.7 391.8L390.8 388.4ZM451.6 335.1L451.2 331.2L458.1 332.9ZM475.6 310.7L476.1 314.6L469.1 312.8ZM481.6 304.5L481.1 300.6L488.1 302.4ZM439.2 343.4L445.6 341.2L446.1 345.1ZM391.7 396.2L391.3 392.3L398.2 394.0ZM421.7 365.7L421.2 361.7L428.2 363.5ZM415.7 371.8L416.2 375.7L409.2 373.9ZM417.3 330.3L430.2 325.9L444.2 329.4L445.1 337.3L432.2 341.6L418.3 338.1ZM387.3 360.8L400.3 356.5L414.2 360.0L415.2 367.8L402.2 372.2L388.3 368.7ZM447.2 299.7L460.2 295.4L474.1 298.9L475.1 306.7L462.1 311.1L448.2 307.6ZM413.2 352.1L413.7 356.0L406.8 354.3ZM449.2 315.4L448.7 311.5L455.6 313.3ZM443.2 321.6L443.7 325.5L436.7 323.7ZM419.2 346.0L418.7 342.1L425.7 343.8ZM389.3 376.6L388.8 372.6L395.7 374.4ZM376.8 384.9L383.3 382.7L383.8 386.6ZM384.9 341.2L397.8 336.8L411.8 340.3L412.7 348.2L399.8 352.5L385.9 349.1ZM414.8 310.6L427.8 306.3L441.7 309.8L442.7 317.6L429.7 322.0L415.8 318.5ZM354.9 371.8L367.9 367.4L381.8 370.9L382.8 378.7L369.8 383.1L355.9 379.6ZM410.8 332.5L411.3 336.4L404.3 334.7ZM446.7 295.8L446.2 291.9L453.2 293.6ZM440.7 301.9L441.2 305.8L434.3 304.1ZM416.8 326.4L416.3 322.4L423.2 324.2ZM386.8 356.9L386.3 353.0L393.3 354.7ZM380.8 363.0L381.3 367.0L374.4 365.2ZM382.4 321.6L395.4 317.2L409.3 320.7L410.3 328.5L397.3 332.9L383.4 329.4ZM352.5 352.1L365.4 347.7L379.4 351.2L380.3 359.1L367.4 363.5L353.4 360.0ZM384.4 337.3L383.9 333.3L390.8 335.1ZM408.3 312.8L408.8 316.7L401.9 315.0ZM414.3 306.7L413.8 302.8L420.8 304.5ZM354.4 367.8L353.9 363.9L360.9 365.6ZM378.4 343.4L378.9 347.3L371.9 345.6ZM380.0 301.9L392.9 297.5L406.9 301.0L407.8 308.9L394.9 313.3L380.9 309.8ZM350.0 332.5L363.0 328.1L376.9 331.6L377.9 339.4L364.9 343.8L351.0 340.3ZM405.9 293.2L406.4 297.1L399.4 295.4ZM381.9 317.6L381.4 313.7L388.4 315.4ZM346.0 354.3L346.5 358.2L339.5 356.5ZM369.5 325.9L375.9 323.7L376.4 327.7ZM352.0 348.2L351.5 344.3L358.4 346.0ZM317.6 343.4L330.6 339.0L344.5 342.5L345.5 350.4L332.5 354.7L318.6 351.2ZM347.6 312.8L360.5 308.5L374.5 311.9L375.4 319.8L362.5 324.2L348.5 320.7ZM379.5 298.0L379.0 294.0L385.9 295.8ZM343.5 334.6L344.0 338.6L337.1 336.8ZM319.6 359.1L319.1 355.2L326.0 356.9ZM349.5 328.5L349.0 324.6L356.0 326.3ZM373.5 304.1L374.0 308.0L367.0 306.3ZM315.2 323.7L328.1 319.4L342.0 322.9L343.0 330.7L330.1 335.1L316.1 331.6ZM345.1 293.2L358.1 288.8L372.0 292.3L373.0 300.2L360.0 304.5L346.1 301.0ZM311.1 345.6L311.6 349.5L304.7 347.7ZM341.1 315.0L341.6 318.9L334.6 317.2ZM317.1 339.4L316.6 335.5L323.6 337.3ZM347.1 308.9L346.6 305.0L353.5 306.7ZM312.7 304.1L325.7 299.7L339.6 303.2L340.6 311.1L327.6 315.4L313.7 311.9ZM308.7 325.9L309.1 329.8L302.2 328.1ZM314.7 319.8L314.2 315.9L321.1 317.6ZM338.6 295.4L339.1 299.3L332.1 297.5ZM280.3 315.0L293.3 310.6L307.2 314.1L308.2 322.0L295.2 326.3L281.3 322.8ZM299.7 308.4L306.2 306.3L306.7 310.2ZM282.3 330.7L281.8 326.8L288.7 328.5ZM312.2 300.1L311.7 296.2L318.7 298.0ZM277.8 295.3L290.8 291.0L304.7 294.5L305.7 302.3L292.8 306.7L278.8 303.2ZM279.8 311.0L279.3 307.1L286.3 308.9ZM273.8 317.2L274.3 321.1L267.3 319.3ZM271.3 297.5L271.8 301.4L264.9 299.7Z" fill-rule="evenodd" clip-rule="evenodd"/><clipPath id="mclip"><path d="M257.1 302.3L258.4 301.9L272.3 305.4L273.3 313.2L260.6 317.5L261.2 320.0L263.4 322.2L274.8 325.0L275.8 332.9L274.6 333.3L276.0 334.6L282.5 339.2L283.3 339.0L282.7 334.6L295.7 330.3L309.6 333.8L310.6 341.6L297.7 346.0L291.7 344.5L291.0 344.9L298.5 350.0L312.1 353.4L313.2 361.9L320.3 364.7L320.1 363.0L333.0 358.7L347.0 362.2L347.9 370.0L336.8 373.8L345.8 374.8L348.4 373.9L348.9 377.9L353.0 386.3L362.7 389.6L370.3 387.0L384.3 390.5L385.3 398.9L392.4 401.4L392.2 400.1L405.2 395.8L419.1 399.3L420.1 407.1L414.4 409.1L427.6 413.3L427.1 408.9L440.0 404.5L454.0 408.0L455.0 415.9L445.6 419.0L452.2 420.9L455.5 419.8L455.7 421.9L462.7 423.9L462.0 417.6L474.9 413.3L488.8 416.8L489.8 424.6L478.5 428.4L481.5 429.3L485.4 430.2L490.3 428.6L490.7 431.5L497.7 433.2L496.8 426.4L509.8 422.0L523.7 425.5L524.7 433.4L513.5 437.1L520.5 438.9L525.2 437.3L525.5 440.1L532.5 441.9L531.7 435.1L544.6 430.7L558.6 434.2L559.5 442.1L548.4 445.8L555.4 447.6L560.0 446.0L560.4 448.8L567.4 450.6L566.5 443.8L579.5 439.5L593.4 443.0L594.4 450.8L583.3 454.6L590.3 456.3L594.9 454.8L595.2 457.5L602.2 459.3L601.4 452.6L614.3 448.2L628.3 451.7L629.3 459.6L618.2 463.3L625.2 465.0L629.8 463.5L630.1 466.3L637.1 468.0L636.3 461.3L649.2 457.0L663.1 460.5L664.1 468.3L653.2 472.0L660.2 473.7L664.6 472.2L665.0 474.9L669.2 476.0L671.9 476.6L671.1 470.1L684.1 465.7L698.0 469.2L699.0 477.1L689.3 480.3L696.7 481.9L699.5 481.0L699.7 482.6L706.6 484.1L706.0 478.8L718.9 474.4L732.9 477.9L733.8 485.8L726.3 488.3L741.3 491.5L740.8 487.5L753.8 483.2L767.7 486.7L768.7 494.5L763.6 496.3L773.7 498.4L776.0 499.0L775.7 496.3L788.7 491.9L802.6 495.4L803.6 503.3L799.1 504.8L804.9 506.2L810.8 507.2L810.6 505.0L823.5 500.7L837.5 504.2L838.4 511.8L842.3 512.4L846.5 513.4L858.4 509.4L872.3 512.9L873.2 519.6L879.6 521.1L883.7 521.3L893.2 518.1L907.2 521.6L907.3 522.7L914.4 523.1L933.6 525.0L941.1 522.5L941.5 525.8L944.3 526.1L948.4 526.8L947.5 520.3L960.5 516.0L974.4 519.5L975.4 527.3L967.7 529.9L982.8 532.5L982.4 529.1L995.4 524.7L1009.3 528.2L1010.3 536.1L1008.2 536.7L1016.2 538.2L1030.2 533.4L1044.2 536.9L1045.0 543.5L1055.5 545.4L1065.1 542.2L1079.0 545.7L1079.5 549.4L1086.4 550.6L1086.0 547.4L1093.0 549.2L1088.0 550.8L1094.9 552.6L1099.9 550.9L1113.9 554.4L1114.3 557.6L1115.3 557.9L1121.1 557.7L1120.9 556.2L1126.1 557.5L1143.3 556.8L1147.8 555.3L1147.8 555.8L1154.4 554.2L1154.3 553.1L1167.2 548.8L1167.7 548.9L1177.0 543.6L1180.1 541.0L1179.2 540.6L1166.7 544.8L1152.8 541.3L1151.8 533.5L1164.8 529.1L1178.7 532.6L1179.7 540.7L1180.4 540.8L1185.9 536.2L1185.7 534.3L1187.5 534.8L1190.2 532.6L1190.7 531.8L1185.2 530.4L1184.2 522.6L1197.2 518.2L1198.9 518.6L1200.5 516.0L1200.4 513.0L1196.7 514.3L1182.7 510.8L1181.7 502.9L1194.7 498.5L1198.2 499.4L1196.8 496.2L1194.1 494.6L1180.3 491.1L1179.9 488.1L1172.9 486.4L1173.3 489.4L1166.3 487.6L1171.2 486.0L1168.2 485.2L1163.6 484.4L1159.3 485.9L1145.4 482.4L1144.9 478.3L1137.9 475.1L1137.7 475.1L1137.7 475.2L1131.7 474.7L1124.5 477.1L1110.5 473.6L1110.3 471.5L1103.5 467.7L1098.5 465.4L1089.6 468.4L1075.7 464.9L1074.7 457.0L1078.1 455.9L1067.3 450.9L1067.2 450.9L1067.7 455.3L1054.8 459.6L1040.8 456.2L1039.8 448.3L1049.5 445.0L1043.5 443.0L1039.3 444.4L1039.0 441.4L1035.7 440.3L1032.0 438.6L1031.9 438.6L1032.8 446.5L1019.9 450.9L1006.0 447.4L1005.0 439.6L1017.9 435.2L1027.0 437.5L1027.9 436.8L1013.9 430.4L1003.5 427.8L1003.2 425.5L996.2 422.3L996.1 422.3L996.5 426.0L989.6 424.3L996.0 422.1L989.7 420.1L982.6 422.5L968.6 419.0L967.9 413.2L958.4 410.2L947.7 413.8L933.8 410.3L932.8 402.2L926.9 400.3L912.9 405.0L898.9 401.5L897.9 393.7L901.0 392.7L890.7 389.6L890.9 391.9L878.0 396.3L864.1 392.8L863.1 385.0L867.6 383.4L863.5 382.3L855.7 379.8L856.1 383.2L843.1 387.6L829.2 384.1L828.2 376.2L835.9 373.6L829.6 371.6L827.7 372.3L827.6 371.0L820.5 368.8L821.2 374.5L808.3 378.8L794.3 375.3L793.4 367.5L803.4 364.1L796.6 362.3L792.9 363.5L792.6 361.2L785.6 359.2L786.4 365.7L773.4 370.1L759.5 366.6L758.5 358.7L769.5 355.0L762.7 353.2L758.0 354.8L757.6 351.9L750.6 350.0L751.5 357.0L738.6 361.3L724.6 357.9L723.6 350.0L734.9 346.2L727.8 344.5L723.1 346.1L722.8 343.3L715.8 341.6L716.7 348.2L703.7 352.6L689.8 349.1L688.8 341.3L699.8 337.5L692.8 335.8L688.3 337.3L687.9 334.6L681.0 332.8L681.8 339.5L668.8 343.9L654.9 340.4L653.9 332.5L664.9 328.8L657.9 327.1L653.4 328.6L653.1 325.8L646.1 324.1L646.9 330.8L634.0 335.1L620.0 331.6L619.1 323.8L628.7 320.5L621.1 319.0L618.6 319.8L618.4 318.4L611.4 317.0L612.1 322.0L599.1 326.4L585.2 322.9L584.2 315.0L591.4 312.6L576.7 309.5L577.2 313.3L564.3 317.6L550.3 314.2L549.3 306.3L552.9 305.1L542.2 303.1L542.4 304.5L529.4 308.9L515.5 305.4L514.4 297.1L507.9 295.7L494.5 300.2L480.6 296.7L479.9 291.1L476.4 290.5L463.8 290.0L459.7 291.4L452.5 289.6L439.1 289.1L440.2 298.0L427.3 302.3L413.3 298.8L412.4 291.0L418.9 288.8L418.8 288.5L407.6 288.2L405.2 288.0L405.4 289.2L392.4 293.6L378.5 290.1L377.9 285.2L371.1 285.1L371.5 288.4L364.6 286.6L368.2 285.4L368.0 285.1L344.5 284.7L344.2 285.3L351.1 287.1L344.6 289.2L344.0 284.7L337.3 284.6L338.1 291.4L325.2 295.8L311.2 292.3L310.5 286.9L303.9 287.6L304.2 290.5L296.6 288.6L287.5 289.9L272.0 292.7L270.8 293.1L270.9 293.6L260.3 297.1L256.6 300.4Z"/></clipPath></defs>
<use href="#mtop" fill="url(#mTop)"/>
<g clip-path="url(#mclip)">
<ellipse cx="395" cy="335" rx="62" ry="30" transform="rotate(18 395 335)" fill="url(#bg)" opacity="0.55"/>
<ellipse cx="388" cy="330" rx="24" ry="10" transform="rotate(15 388 330)" fill="url(#by)" opacity="0.3"/>
<ellipse cx="654" cy="410" rx="64" ry="14" transform="rotate(43 654 410)" fill="url(#bg)" opacity="0.45"/>
<ellipse cx="722" cy="361" rx="32" ry="12" transform="rotate(12 722 361)" fill="url(#bg)" opacity="0.55"/>
<ellipse cx="600" cy="380" rx="60" ry="12" transform="rotate(40 600 380)" fill="url(#bg)" opacity="0.3"/>
<ellipse cx="948" cy="490" rx="32" ry="22" transform="rotate(30 948 490)" fill="url(#bg)" opacity="0.7"/>
<ellipse cx="1000" cy="470" rx="40" ry="10" transform="rotate(38 1000 470)" fill="url(#bg)" opacity="0.35"/>
<ellipse cx="1029" cy="437" rx="9" ry="6" transform="rotate(20 1029 437)" fill="url(#by)" opacity="0.9"/>
<ellipse cx="850" cy="455" rx="50" ry="10" transform="rotate(40 850 455)" fill="url(#bg)" opacity="0.3"/>
<ellipse cx="500" cy="350" rx="60" ry="10" transform="rotate(40 500 350)" fill="url(#bg)" opacity="0.3"/>
<ellipse cx="560" cy="330" rx="40" ry="16" transform="rotate(15 560 330)" fill="url(#bb)" opacity="0.45"/>
<ellipse cx="790" cy="400" rx="50" ry="18" transform="rotate(15 790 400)" fill="url(#bb)" opacity="0.35"/>
<ellipse cx="880" cy="420" rx="36" ry="14" transform="rotate(15 880 420)" fill="url(#bb)" opacity="0.35"/>
<ellipse cx="460" cy="400" rx="40" ry="12" transform="rotate(15 460 400)" fill="url(#bb)" opacity="0.3"/>
</g>
<path d="M1132.4 540.0V555.2M1146.3 543.5V551.7M1162.3 509.5V524.7M1176.2 512.9V521.1M1159.8 489.8V505.0M1173.8 493.3V501.5M1129.9 520.4V535.6M1143.8 523.9V532.0M1097.5 531.3V546.5M1111.4 534.8V543.0M1127.4 500.7V515.9M1141.4 504.2V512.4M1125.0 481.1V496.3M1138.9 484.6V492.7M1095.0 511.6V526.8M1109.0 515.1V523.3M1092.6 492.0V507.2M1106.5 495.5V503.7M1062.6 522.5V537.8M1076.6 526.0V534.2M1090.1 472.3V487.5M1104.0 475.8V484.0M1060.2 502.9V518.1M1074.1 506.4V514.6M1027.8 513.8V529.0M1041.7 517.3V525.5M1057.7 483.2V498.5M1071.6 486.7V494.9M1055.2 463.6V478.8M1069.2 467.1V475.3M1025.3 494.1V509.4M1039.2 497.6V505.8M992.9 505.1V520.3M1006.8 508.6V516.7M1022.8 474.5V489.7M1036.8 478.0V486.2M1020.4 454.8V470.1M1034.3 458.3V466.5M990.4 485.4V500.6M1004.4 488.9V497.1M988.0 465.8V481.0M1001.9 469.2V477.4M958.0 496.3V511.5M972.0 499.8V508.0M985.5 446.1V461.3M999.5 449.6V457.8M925.6 507.2V522.4M939.6 510.7V518.9M955.6 476.7V491.9M969.5 480.2V488.3M983.1 426.5V441.7M997.0 429.9V438.1M953.1 457.0V472.2M967.1 460.5V468.7M923.2 487.6V502.8M937.1 491.1V499.3M950.7 437.4V452.6M964.6 440.9V449.0M920.7 467.9V483.1M934.7 471.4V479.6M890.8 498.5V513.7M904.7 502.0V510.2M918.3 448.3V463.5M932.2 451.8V460.0M888.3 478.8V494.1M902.3 482.3V490.5M948.2 417.7V432.9M962.1 421.2V429.4M855.9 489.7V505.0M869.9 493.2V501.4M915.8 428.6V443.8M929.7 432.1V440.3M885.9 459.2V474.4M899.8 462.7V470.9M883.4 439.5V454.8M897.3 443.0V451.2M853.5 470.1V485.3M867.4 473.6V481.8M913.3 409.0V424.2M927.3 412.5V420.7M851.0 450.4V465.7M864.9 453.9V462.1M880.9 419.9V435.1M894.9 423.4V431.6M821.1 481.0V496.2M835.0 484.5V492.7M848.5 430.8V446.0M862.5 434.3V442.5M818.6 461.4V476.6M832.5 464.9V473.0M878.5 400.2V415.5M892.4 403.7V411.9M846.1 411.1V426.4M860.0 414.6V422.8M816.1 441.7V456.9M830.1 445.2V453.4M786.2 472.3V487.5M800.1 475.8V484.0M813.7 422.1V437.3M827.6 425.6V433.7M843.6 391.5V406.7M857.6 395.0V403.2M783.7 452.6V467.8M797.7 456.1V464.3M811.2 402.4V417.6M825.2 405.9V414.1M751.3 463.5V478.7M765.3 467.0V475.2M781.3 433.0V448.2M795.2 436.5V444.6M808.8 382.8V398.0M822.7 386.3V394.4M778.8 413.3V428.5M792.8 416.8V425.0M748.9 443.9V459.1M762.8 447.4V455.6M776.4 393.7V408.9M790.3 397.2V405.4M746.4 424.2V439.4M760.4 427.7V435.9M716.5 454.8V470.0M730.4 458.3V466.5M744.0 404.6V419.8M757.9 408.1V416.3M714.0 435.1V450.4M728.0 438.6V446.8M773.9 374.0V389.2M787.8 377.5V385.7M681.6 446.1V461.3M695.5 449.5V457.7M711.6 415.5V430.7M725.5 419.0V427.2M741.5 384.9V400.1M755.4 388.4V396.6M709.1 395.8V411.1M723.0 399.3V407.5M739.0 365.3V380.5M753.0 368.8V377.0M679.2 426.4V441.6M693.1 429.9V438.1M676.7 406.8V422.0M690.6 410.2V418.4M706.6 376.2V391.4M720.6 379.7V387.9M646.8 437.3V452.5M660.7 440.8V449.0M704.2 356.5V371.8M718.1 360.0V368.2M674.2 387.1V402.3M688.2 390.6V398.8M644.3 417.7V432.9M658.2 421.2V429.3M671.8 367.5V382.7M685.7 370.9V379.1M641.8 398.0V413.2M655.8 401.5V409.7M611.9 428.6V443.8M625.8 432.1V440.3M669.3 347.8V363.0M683.3 351.3V359.5M639.4 378.4V393.6M653.3 381.9V390.0M609.4 408.9V424.1M623.4 412.4V420.6M636.9 358.7V373.9M650.9 362.2V370.4M607.0 389.3V404.5M620.9 392.8V401.0M577.0 419.8V435.1M591.0 423.3V431.5M634.5 339.1V354.3M648.4 342.6V350.7M604.5 369.6V384.8M618.5 373.1V381.3M574.6 400.2V415.4M588.5 403.7V411.9M602.1 350.0V365.2M616.0 353.5V361.7M572.1 380.5V395.8M586.1 384.0V392.2M542.2 411.1V426.3M556.1 414.6V422.8M599.6 330.3V345.5M613.5 333.8V342.0M569.7 360.9V376.1M583.6 364.4V372.6M539.7 391.4V406.7M553.7 394.9V403.1M567.2 341.2V356.5M581.1 344.7V352.9M537.3 371.8V387.0M551.2 375.3V383.5M507.3 402.4V417.6M521.2 405.8V414.0M564.8 321.6V336.8M578.7 325.1V333.3M534.8 352.1V367.4M548.7 355.6V363.8M504.9 382.7V397.9M518.8 386.2V394.4M532.4 332.5V347.7M546.3 336.0V344.2M502.4 363.1V378.3M516.3 366.5V374.7M472.5 393.6V408.8M486.4 397.1V405.3M529.9 312.8V328.1M543.8 316.3V324.5M499.9 343.4V358.6M513.9 346.9V355.1M470.0 374.0V389.2M483.9 377.5V385.6M497.5 323.8V339.0M511.4 327.3V335.4M467.5 354.3V369.5M481.5 357.8V366.0M437.6 384.9V400.1M451.5 388.4V396.6M495.0 304.1V319.3M509.0 307.6V315.8M435.1 365.2V380.4M449.1 368.7V376.9M465.1 334.7V349.9M479.0 338.2V346.3M462.6 315.0V330.2M476.6 318.5V326.7M432.7 345.6V360.8M446.6 349.1V357.3M402.7 376.1V391.4M416.7 379.6V387.8M430.2 325.9V341.1M444.2 329.4V337.6M400.3 356.5V371.7M414.2 360.0V368.2M460.2 295.4V310.6M474.1 298.9V307.1M397.8 336.8V352.1M411.8 340.3V348.5M427.8 306.3V321.5M441.7 309.8V318.0M367.9 367.4V382.6M381.8 370.9V379.1M395.4 317.2V332.4M409.3 320.7V328.9M365.4 347.7V363.0M379.4 351.2V359.4M392.9 297.5V312.8M406.9 301.0V309.2M363.0 328.1V343.3M376.9 331.6V339.8M330.6 339.0V354.2M344.5 342.5V350.7M360.5 308.5V323.7M374.5 311.9V320.1M328.1 319.4V334.6M342.0 322.9V331.0M358.1 288.8V304.0M372.0 292.3V300.5M325.7 299.7V314.9M339.6 303.2V311.4M293.3 310.6V325.8M307.2 314.1V322.3M290.8 291.0V306.2M304.7 294.5V302.7" stroke="#14101a" stroke-width="1" fill="none"/>
<use href="#mtop" fill="none" stroke="#14101a" stroke-width=".9"/>
</g>
<defs><linearGradient id="arS" x1="0" y1="0" x2="1" y2="0"><stop offset="0" stop-color="#0a2cc0"/><stop offset=".4" stop-color="#1244e4"/><stop offset="1" stop-color="#0822a6"/></linearGradient>
<linearGradient id="arH" x1="0" y1="0" x2="1" y2="1"><stop offset="0" stop-color="#0c30cc"/><stop offset=".5" stop-color="#0824a8"/><stop offset="1" stop-color="#041684"/></linearGradient></defs>
<path d="M717.5 348.5a5.450 2.600 0 0 1 10.900 0V392h-10.900z" fill="url(#arS)"/>
<path d="M711 389.5c0-4.5 24-4.5 24 0 0 1.5-1 3-2 4.5l-9.900 17.200-9.900-17.200c-1.200-1.5-2.200-3-2.200-4.5z" fill="url(#arH)"/>
<path d="M717.5 388.5c1.5 1.300 9.400 1.300 10.900 0v-4h-10.900z" fill="url(#arS)"/>

</svg>
<div class="abs" style="left:4px;top:141px;width:300px;height:24.5px;background:#f0f0f0;border:1px solid #c9c9c9"></div>
<span class="t" style="left:29.5px;top:145.9px;font-size:11.5px;line-height:15.5px;color:#555;transform:scaleX(0.8667);">BROWSER</span>
<svg style="left:0;top:141px" width="310" height="26" viewBox="0 141 310 26"><path d="M9 153.5l4.8-3.5v7zM14.5 153.5l4.8-3.5v7z" fill="#333"/><circle cx="287.3" cy="153.5" r="4.3" fill="#222"/><rect x="284.8" y="152.8" width="5" height="1.4" fill="#f0f0f0"/><path d="M299.5 148v10.5" stroke="#555" stroke-width="1"/><path d="M301.5 149v8.5" stroke="#aaa" stroke-width="1"/></svg>
<div class="abs" style="left:40.4px;top:171.2px;width:97.4px;height:19.5px;background:#f0f0f0"></div>
<div class="abs" style="left:58.3px;top:195.2px;width:109.7px;height:19.5px;background:#f0f0f0"></div>
<div class="abs" style="left:58.3px;top:219.2px;width:195.2px;height:19.5px;background:#f0f0f0"></div>
<div class="abs" style="left:82.8px;top:221.3px;width:146px;height:15.5px;background:#8a8a8a"></div>
<div class="abs" style="left:76.2px;top:243.2px;width:109.5px;height:19.5px;background:#f0f0f0"></div>
<div class="abs" style="left:76.2px;top:267.2px;width:94.8px;height:19.5px;background:#f0f0f0"></div>
<div class="abs" style="left:76.2px;top:291.2px;width:133.8px;height:19.5px;background:#f0f0f0"></div>
<div class="abs" style="left:94.2px;top:315.2px;width:103.2px;height:19.5px;background:#f0f0f0"></div>
<div class="abs" style="left:112.2px;top:339.2px;width:106.6px;height:19.5px;background:#f0f0f0"></div>
<div class="abs" style="left:112.2px;top:363.2px;width:106.6px;height:19.5px;background:#f0f0f0"></div>
<div class="abs" style="left:112.2px;top:387.2px;width:110.9px;height:19.5px;background:#f0f0f0"></div>
<div class="abs" style="left:94.2px;top:411.2px;width:119.0px;height:19.5px;background:#f0f0f0"></div>
<div class="abs" style="left:94.2px;top:435.2px;width:134.6px;height:19.5px;background:#f0f0f0"></div>
<div class="abs" style="left:77.7px;top:461px;width:185.8px;height:16px;background:#787878"></div>
<div class="abs" style="left:94.2px;top:483.2px;width:142.8px;height:19.5px;background:#f0f0f0"></div>
<div class="abs" style="left:94.2px;top:507.2px;width:126.8px;height:19.5px;background:#f0f0f0"></div>
<div class="abs" style="left:95.9px;top:508.9px;width:125px;height:16px;background:#787878"></div>
<div class="abs" style="left:220.8px;top:507.2px;width:24.8px;height:19.5px;background:#aacdfb"></div>
<div class="abs" style="left:94.2px;top:531.2px;width:85.3px;height:19.5px;background:#f0f0f0"></div>
<div class="abs" style="left:94.2px;top:555.2px;width:94.2px;height:19.5px;background:#f0f0f0"></div>
<div class="abs" style="left:94.2px;top:579.2px;width:77.7px;height:19.5px;background:#f0f0f0"></div>
<svg style="left:0;top:165px" width="310" height="440" viewBox="0 165 310 440"><defs>
<linearGradient id="tg" x1="0" y1="1" x2="1" y2=".3"><stop offset="0" stop-color="#e0e0e0"/><stop offset=".55" stop-color="#9a9a9a"/><stop offset="1" stop-color="#3a3a3a"/></linearGradient>
<linearGradient id="bg1" x1="0" y1="0" x2="1" y2="0"><stop offset="0" stop-color="#fff"/><stop offset=".6" stop-color="#f4f4f4"/><stop offset="1" stop-color="#c4c4c4"/></linearGradient>
<linearGradient id="rbh" x1="0" y1="0" x2="1" y2="0"><stop offset="0" stop-color="#1d3bd6"/><stop offset=".22" stop-color="#19b7e8"/><stop offset=".45" stop-color="#57d84a"/><stop offset=".62" stop-color="#f2e21c"/><stop offset=".8" stop-color="#f58a1a"/><stop offset="1" stop-color="#e2211c"/></linearGradient>
<linearGradient id="rbv" x1="0" y1="0" x2="0" y2="1"><stop offset="0" stop-color="#d6221c"/><stop offset=".25" stop-color="#e2321c"/><stop offset=".4" stop-color="#f58a1a"/><stop offset=".58" stop-color="#f2e21c"/><stop offset=".74" stop-color="#57d84a"/><stop offset=".88" stop-color="#19b7e8"/><stop offset="1" stop-color="#1d5bd6"/></linearGradient>
<linearGradient id="rbl" x1="0" y1="1" x2="1" y2="0"><stop offset="0" stop-color="#1d3bd6"/><stop offset=".3" stop-color="#19b7e8"/><stop offset=".5" stop-color="#57d84a"/><stop offset=".65" stop-color="#f2e21c"/><stop offset=".8" stop-color="#f58a1a"/><stop offset="1" stop-color="#e2211c"/></linearGradient>
</defs><path d="M31.8 175.4V186.4H21z" fill="url(#tg)" stroke="#222" stroke-width="1" stroke-linejoin="round"/>
<rect x="44.5" y="174.6" width="14.3" height="4.6" fill="url(#rbh)" stroke="#333" stroke-width=".9"/><rect x="44.5" y="182.6" width="14.3" height="4.8" fill="url(#rbh)" stroke="#333" stroke-width=".9"/>
<path d="M61.8 198.5h9.5l3.7 3.7v8.3h-13.2z" fill="#fdfdfd" stroke="#555" stroke-width="1.1" stroke-linejoin="round"/><path d="M71.3 198.5v3.7h3.7" fill="none" stroke="#555" stroke-width=".9"/><rect x="61.2" y="209.6" width="14.6" height="3" fill="#e8a317"/><path d="M63 209.6v1.5M65.5 209.6v1.5M68 209.6v1.5M70.5 209.6v1.5M73 209.6v1.5" stroke="#7a5200" stroke-width=".6"/>
<path d="M49.8 223.4V234.4H39z" fill="url(#tg)" stroke="#222" stroke-width="1" stroke-linejoin="round"/>
<path d="M61.3 229c2.6-3.8 5.4-5 8-5s5.4 1.2 8 5c-2.6 3.8-5.4 5-8 5s-5.4-1.2-8-5z" fill="#969696"/><circle cx="69.3" cy="229" r="2.9" fill="#f0f0f0"/><circle cx="69.3" cy="229" r="1.5" fill="#969696"/>
<path d="M86.5 222.5h7v6h7v7.5h-14z" fill="#fafafa" stroke="#444" stroke-width="1" stroke-linejoin="round"/><path d="M93.5 228.5h-7M93.5 228.5v7.5M93.5 222.5l1.5-1M100.5 228.5l1.3-1v7" fill="none" stroke="#444" stroke-width=".8"/>
<circle cx="239.4" cy="229" r="5.8" fill="#fff" stroke="#222" stroke-width="1.1"/><circle cx="239.4" cy="229" r="2.4" fill="#111"/>
<path d="M58.7 247.4L67.2 253L58.7 258.6z" fill="#f4f4f4" stroke="#222" stroke-width="1.3" stroke-linejoin="round"/>
<path d="M79.2 246.7h7.6l.7 1.7h7.4v10.8H79.2z" fill="#909090"/><path d="M79.2 249.1h15.7" stroke="#a9a9a9" stroke-width=".7"/>
<path d="M58.7 271.4L67.2 277L58.7 282.6z" fill="#f4f4f4" stroke="#222" stroke-width="1.3" stroke-linejoin="round"/>
<g opacity=".9"><path d="M79.3 277c2.6-3.8 5.4-5 8-5s5.4 1.2 8 5c-2.6 3.8-5.4 5-8 5s-5.4-1.2-8-5z" fill="#e2e2e2"/><circle cx="87.3" cy="277" r="2.7" fill="#f0f0f0"/><path d="M82.3 271.5l10.5 11" stroke="#f0f0f0" stroke-width="2.6"/><path d="M82.8 271l10.5 11" stroke="#e0e0e0" stroke-width="1.3"/></g>
<path d="M104 270.7h7.6l.7 1.7h7.4v10.8H104z" fill="#909090"/><path d="M104 273.1h15.7" stroke="#a9a9a9" stroke-width=".7"/>
<path d="M67.8 295.4V306.4H57z" fill="url(#tg)" stroke="#222" stroke-width="1" stroke-linejoin="round"/>
<path d="M79.2 294.7h7.6l.7 1.7h7.4v10.8H79.2z" fill="#909090"/><path d="M79.2 297.1h15.7" stroke="#a9a9a9" stroke-width=".7"/>
<path d="M86.0 319.4V330.4H75.2z" fill="url(#tg)" stroke="#222" stroke-width="1" stroke-linejoin="round"/>
<path d="M97.2 325c2.6-3.8 5.4-5 8-5s5.4 1.2 8 5c-2.6 3.8-5.4 5-8 5s-5.4-1.2-8-5z" fill="#969696"/><circle cx="105.2" cy="325" r="2.9" fill="#f0f0f0"/><circle cx="105.2" cy="325" r="1.5" fill="#969696"/>
<path d="M121.7 318.7h7.6l.7 1.7h7.4v10.8H121.7z" fill="#909090"/><path d="M121.7 321.1h15.7" stroke="#a9a9a9" stroke-width=".7"/>
<g opacity=".9"><path d="M115.4 349c2.6-3.8 5.4-5 8-5s5.4 1.2 8 5c-2.6 3.8-5.4 5-8 5s-5.4-1.2-8-5z" fill="#e2e2e2"/><circle cx="123.4" cy="349" r="2.7" fill="#f0f0f0"/><path d="M118.4 343.5l10.5 11" stroke="#f0f0f0" stroke-width="2.6"/><path d="M118.9 343l10.5 11" stroke="#e0e0e0" stroke-width="1.3"/></g>
<path d="M140.2 344.5c0-3 14.8-3 14.8 0v9c0 3-14.8 3-14.8 0z" fill="url(#bg1)" stroke="#555" stroke-width="1.1"/><path d="M140.2 344.5c0 2.6 14.8 2.6 14.8 0" fill="none" stroke="#777" stroke-width=".9"/>
<g opacity=".9"><path d="M115.4 373c2.6-3.8 5.4-5 8-5s5.4 1.2 8 5c-2.6 3.8-5.4 5-8 5s-5.4-1.2-8-5z" fill="#e2e2e2"/><circle cx="123.4" cy="373" r="2.7" fill="#f0f0f0"/><path d="M118.4 367.5l10.5 11" stroke="#f0f0f0" stroke-width="2.6"/><path d="M118.9 367l10.5 11" stroke="#e0e0e0" stroke-width="1.3"/></g>
<path d="M140.2 368.5c0-3 14.8-3 14.8 0v9c0 3-14.8 3-14.8 0z" fill="url(#bg1)" stroke="#555" stroke-width="1.1"/><path d="M140.2 368.5c0 2.6 14.8 2.6 14.8 0" fill="none" stroke="#777" stroke-width=".9"/>
<path d="M115.4 397c2.6-3.8 5.4-5 8-5s5.4 1.2 8 5c-2.6 3.8-5.4 5-8 5s-5.4-1.2-8-5z" fill="#969696"/><circle cx="123.4" cy="397" r="2.9" fill="#f0f0f0"/><circle cx="123.4" cy="397" r="1.5" fill="#969696"/>
<path d="M140.2 392.5c0-3 14.8-3 14.8 0v9c0 3-14.8 3-14.8 0z" fill="url(#bg1)" stroke="#555" stroke-width="1.1"/><path d="M140.2 392.5c0 2.6 14.8 2.6 14.8 0" fill="none" stroke="#777" stroke-width=".9"/>
<path d="M76.9 415.4L85.4 421L76.9 426.6z" fill="#f4f4f4" stroke="#222" stroke-width="1.3" stroke-linejoin="round"/>
<g opacity=".9"><path d="M97.2 421c2.6-3.8 5.4-5 8-5s5.4 1.2 8 5c-2.6 3.8-5.4 5-8 5s-5.4-1.2-8-5z" fill="#e2e2e2"/><circle cx="105.2" cy="421" r="2.7" fill="#f0f0f0"/><path d="M100.2 415.5l10.5 11" stroke="#f0f0f0" stroke-width="2.6"/><path d="M100.7 415l10.5 11" stroke="#e0e0e0" stroke-width="1.3"/></g>
<path d="M122.3 417.5l3-3.5h11.8v11l-3 3.5H122.3z" fill="#f7f7f7" stroke="#555" stroke-width="1.1" stroke-linejoin="round"/><path d="M134.1 417.5l3-3.5v11l-3 3.5z" fill="#c9c9c9" stroke="#555" stroke-width=".9" stroke-linejoin="round"/><path d="M122.3 417.5h11.8" stroke="#555" stroke-width=".9"/>
<path d="M76.9 439.4L85.4 445L76.9 450.6z" fill="#f4f4f4" stroke="#222" stroke-width="1.3" stroke-linejoin="round"/>
<g opacity=".9"><path d="M97.2 445c2.6-3.8 5.4-5 8-5s5.4 1.2 8 5c-2.6 3.8-5.4 5-8 5s-5.4-1.2-8-5z" fill="#e2e2e2"/><circle cx="105.2" cy="445" r="2.7" fill="#f0f0f0"/><path d="M100.2 439.5l10.5 11" stroke="#f0f0f0" stroke-width="2.6"/><path d="M100.7 439l10.5 11" stroke="#e0e0e0" stroke-width="1.3"/></g>
<path d="M122.3 441.5l3-3.5h11.8v11l-3 3.5H122.3z" fill="#f7f7f7" stroke="#555" stroke-width="1.1" stroke-linejoin="round"/><path d="M134.1 441.5l3-3.5v11l-3 3.5z" fill="#c9c9c9" stroke="#555" stroke-width=".9" stroke-linejoin="round"/><path d="M122.3 441.5h11.8" stroke="#555" stroke-width=".9"/>
<path d="M67.8 463.4V474.4H57z" fill="url(#tg)" stroke="#222" stroke-width="1" stroke-linejoin="round"/>
<circle cx="87.6" cy="469" r="7.3" fill="#5aa700" stroke="#3c7a00" stroke-width=".5"/><path d="M83.7 469.2l2.8 2.8 5.2-5.4" fill="none" stroke="#fff" stroke-width="2"/>
<path d="M113.5 462.5h6v13h-14.3v-5h8.3z" fill="url(#rbl)" stroke="#333" stroke-width=".7"/>
<path d="M76.9 487.4L85.4 493L76.9 498.6z" fill="#f4f4f4" stroke="#222" stroke-width="1.3" stroke-linejoin="round"/>
<path d="M97.2 493c2.6-3.8 5.4-5 8-5s5.4 1.2 8 5c-2.6 3.8-5.4 5-8 5s-5.4-1.2-8-5z" fill="#969696"/><circle cx="105.2" cy="493" r="2.9" fill="#f0f0f0"/><circle cx="105.2" cy="493" r="1.5" fill="#969696"/>
<g fill="none" stroke="#555" stroke-width=".9"><ellipse cx="130" cy="493" rx="7.5" ry="3" transform="rotate(35 130 493)"/><ellipse cx="130" cy="493" rx="7.5" ry="3" transform="rotate(-35 130 493)"/><ellipse cx="130" cy="493" rx="3" ry="7.3"/></g><circle cx="130" cy="493" r="1.6" fill="#555"/>
<path d="M76.9 511.4L85.4 517L76.9 522.6z" fill="#f4f4f4" stroke="#222" stroke-width="1.3" stroke-linejoin="round"/>
<path d="M97.2 517c2.6-3.8 5.4-5 8-5s5.4 1.2 8 5c-2.6 3.8-5.4 5-8 5s-5.4-1.2-8-5z" fill="#4a4a4a"/><circle cx="105.2" cy="517" r="2.9" fill="#787878"/><circle cx="105.2" cy="517" r="1.5" fill="#4a4a4a"/>
<rect x="122.5" y="510.5" width="13.5" height="13.5" fill="#f4f4f4" stroke="#333" stroke-width="1"/><rect x="123" y="511" width="12.5" height="2.8" fill="#c4cbd9"/><path d="M122.5 513.8h13.5" stroke="#555" stroke-width=".7"/><path d="M124.5 521.5h9.5" stroke="#333" stroke-width="1"/><path d="M129.3 514.5v4" stroke="#1a5fd0" stroke-width="1.2"/><path d="M127 517.5h4.6l-2.3 3z" fill="#1a5fd0"/>
<circle cx="231.4" cy="517" r="5.8" fill="#fff" stroke="#222" stroke-width="1.1"/><circle cx="231.4" cy="517" r="2.4" fill="#111"/>
<rect x="97" y="538.3" width="7" height="5.4" fill="#d7e4f7" stroke="#2a55b0" stroke-width="1"/><rect x="104" y="538.3" width="7.5" height="5.4" fill="#d7e4f7" stroke="#2a55b0" stroke-width="1"/>
<g opacity=".9"><path d="M97.2 565c2.6-3.8 5.4-5 8-5s5.4 1.2 8 5c-2.6 3.8-5.4 5-8 5s-5.4-1.2-8-5z" fill="#e2e2e2"/><circle cx="105.2" cy="565" r="2.7" fill="#f0f0f0"/><path d="M100.2 559.5l10.5 11" stroke="#f0f0f0" stroke-width="2.6"/><path d="M100.7 559l10.5 11" stroke="#e0e0e0" stroke-width="1.3"/></g>
<path d="M122.5 557.5h5.5v9h9.5v6h-15z" fill="#8db7ea" stroke="#1d4fb5" stroke-width="1.2" stroke-linejoin="round"/><path d="M122.5 557.5l5.5 9-5.5 6M128 566.5l4 6 5.5-6M122.5 564l5.5 2.5" fill="none" stroke="#c9ddf6" stroke-width=".6"/>
<rect x="101" y="582" width="8.5" height="14.5" rx="1.3" fill="url(#rbv)" stroke="#333" stroke-width="1"/></svg>
<span class="t" style="left:73.3px;top:173.8px;font-size:12px;line-height:16px;color:#333;transform:scaleX(0.8560);">Simulations</span>
<span class="t" style="left:91.2px;top:197.9px;font-size:12px;line-height:16px;color:#333;transform:scaleX(0.8772);">Units: Custom</span>
<span class="t" style="left:117.3px;top:221.9px;font-size:12px;line-height:16px;color:#fff;transform:scaleX(0.9347);font-weight:700;">Simulation Model 1</span>
<span class="t" style="left:109.5px;top:245.9px;font-size:12px;line-height:16px;color:#333;transform:scaleX(0.9063);">Named Views</span>
<span class="t" style="left:133.9px;top:269.9px;font-size:12px;line-height:16px;color:#333;transform:scaleX(0.8778);">Origin</span>
<span class="t" style="left:109.1px;top:293.9px;font-size:12px;line-height:16px;color:#333;transform:scaleX(0.8735);">Model Components</span>
<span class="t" style="left:152.0px;top:317.9px;font-size:12px;line-height:16px;color:#333;transform:scaleX(0.8857);">Bodies</span>
<span class="t" style="left:170.2px;top:341.9px;font-size:12px;line-height:16px;color:#333;transform:scaleX(0.9115);">Body76</span>
<span class="t" style="left:170.2px;top:365.9px;font-size:12px;line-height:16px;color:#333;transform:scaleX(0.9115);">Body77</span>
<span class="t" style="left:170.2px;top:389.9px;font-size:12px;line-height:16px;color:#333;transform:scaleX(0.8972);">load test</span>
<span class="t" style="left:152.0px;top:413.9px;font-size:12px;line-height:16px;color:#333;transform:scaleX(0.8807);">top panel:1</span>
<span class="t" style="left:152.0px;top:437.9px;font-size:12px;line-height:16px;color:#333;transform:scaleX(0.8666);">bottom panel:1</span>
<span class="t" style="left:134.9px;top:461.9px;font-size:12px;line-height:16px;color:#fff;transform:scaleX(0.9391);font-weight:700;">Study 1 - Static Stress</span>
<span class="t" style="left:152.0px;top:485.9px;font-size:12px;line-height:16px;color:#333;transform:scaleX(0.8924);">Study Materials</span>
<span class="t" style="left:148.8px;top:509.9px;font-size:12px;line-height:16px;color:#fff;transform:scaleX(0.9219);font-weight:700;">Load Case1</span>
<span class="t" style="left:127.3px;top:533.9px;font-size:12px;line-height:16px;color:#333;transform:scaleX(0.8932);">Contacts</span>
<span class="t" style="left:152.0px;top:557.9px;font-size:12px;line-height:16px;color:#333;transform:scaleX(0.8826);">Mesh</span>
<span class="t" style="left:127.3px;top:581.9px;font-size:12px;line-height:16px;color:#333;transform:scaleX(0.8822);">Results</span>
<div class="abs" style="left:1093px;top:360px;width:31.5px;height:22px;background:#049cdf"></div>
<svg style="left:1093px;top:360px" width="32" height="22" viewBox="0 0 32 22"><path d="M7 6.4l5.7 5.7 8.3-8.3M7 12.6l5.7 5.7 8.3-8.3" fill="none" stroke="#fff" stroke-width="2.2"/></svg>
<div class="abs" style="left:1124.5px;top:360px;width:80.3px;height:21.8px;background:#f0f0f0"></div>
<span class="t" style="left:1133.4px;top:363.6px;font-size:12px;line-height:16px;color:#333;transform:scaleX(0.8746);">Load Case1</span>
<div class="caret" style="left:1191.8px;top:369.5px;border-top-color:#222"></div>
<div class="abs" style="left:1093px;top:390px;width:105.6px;height:21.5px;background:#f0f0f0"></div>
<span class="t" style="left:1102.5px;top:393.1px;font-size:12px;line-height:16px;color:#333;transform:scaleX(0.9086);">Stress</span>
<div class="caret" style="left:1189px;top:399px;border-top-color:#222"></div>
<div class="abs" style="left:1093px;top:420px;width:80.6px;height:21.6px;background:#f0f0f0"></div>
<span class="t" style="left:1102.5px;top:423.3px;font-size:12px;line-height:16px;color:#333;transform:scaleX(0.8869);">Von Mises</span>
<div class="caret" style="left:1164px;top:429.3px;border-top-color:#222"></div>
<div class="abs" style="left:1093px;top:450px;width:41.0px;height:21.6px;background:#f0f0f0"></div>
<span class="t" style="left:1102.5px;top:453.6px;font-size:11.5px;line-height:15.5px;color:#333;transform:scaleX(0.7993);">MPa</span>
<div class="caret" style="left:1124.8px;top:459.3px;border-top-color:#222"></div>
<div class="abs" style="left:1093px;top:480.2px;width:61.8px;height:21.6px;background:#f0f0f0"></div>
<svg style="left:1093px;top:480px" width="62" height="22" viewBox="1093 480 62 22">
<defs><linearGradient id="tg2" x1="0" y1="1" x2="1" y2=".3"><stop offset="0" stop-color="#e0e0e0"/><stop offset=".55" stop-color="#9a9a9a"/><stop offset="1" stop-color="#3a3a3a"/></linearGradient></defs>
<g transform="translate(1107 490.6)"><circle r="5.2" fill="none" stroke="#555" stroke-width="3.2"/><g stroke="#555" stroke-width="3.2"><path d="M0-8.3v3M0 8.3v-3M-8.3 0h3M8.3 0h-3M-5.9-5.9l2.1 2.1M5.9 5.9l-2.1-2.1M-5.9 5.9l2.1-2.1M5.9-5.9l-2.1 2.1"/></g><circle r="2" fill="#555"/></g>
<path d="M1144.3 485v11h-11.3z" fill="url(#tg2)" stroke="#222" stroke-width="1" stroke-linejoin="round"/></svg>
<div class="abs" style="left:1210px;top:357px;width:6px;height:241px;background:linear-gradient(90deg,rgba(0,0,0,0),rgba(0,0,0,.28))"></div>
<div class="abs" style="left:1213px;top:357px;width:20px;height:241px;background:linear-gradient(180deg,#ff1400 0%,#ff4000 6%,#ff9000 13%,#ffe400 21%,#f0ff00 26%,#9cf600 36%,#1eec00 47%,#00ea28 54%,#00eea0 65%,#00ecfc 76%,#00a4ff 84%,#0044ff 93%,#0010f0 100%)"></div>
<div class="abs" style="left:1213px;top:357px;width:4px;height:241px;background:linear-gradient(90deg,rgba(0,0,0,.32),rgba(0,0,0,0))"></div>
<svg style="left:1230px;top:350px" width="20" height="255" viewBox="1230 350 20 255"><path d="M1233 596.7h9.5M1233 571.6h4.7M1233 546.4h9.5M1233 521.2h4.7M1233 496.1h9.5M1233 471.0h4.7M1233 445.8h9.5M1233 420.7h4.7M1233 395.5h9.5M1233 370.4h4.7M1233 357.6h9.5" stroke="#555" stroke-width="1.3" fill="none"/></svg>
<span class="t" style="left:1263.0px;top:349.9px;font-size:12px;line-height:16px;color:#000;transform:scaleX(0.9837);">1.426 Max.</span>
<span class="t" style="left:1263.0px;top:388.0px;font-size:12px;line-height:16px;color:#000;transform:scaleX(0.9531);">1.2</span>
<span class="t" style="left:1263.0px;top:438.3px;font-size:12px;line-height:16px;color:#000;transform:scaleX(0.9531);">0.9</span>
<span class="t" style="left:1263.0px;top:488.6px;font-size:12px;line-height:16px;color:#000;transform:scaleX(0.9531);">0.6</span>
<span class="t" style="left:1263.0px;top:538.8px;font-size:12px;line-height:16px;color:#000;transform:scaleX(0.9531);">0.3</span>
<span class="t" style="left:1263.0px;top:589.1px;font-size:12px;line-height:16px;color:#000;transform:scaleX(0.9731);">0 Min.</span>
<svg style="left:1260px;top:150px" width="100" height="100" viewBox="1260 150 100 100">
<defs><radialGradient id="vsh" cx=".5" cy=".5" r=".5"><stop offset="0" stop-color="#000" stop-opacity=".22"/><stop offset="1" stop-color="#000" stop-opacity="0"/></radialGradient></defs>
<ellipse cx="1312" cy="222" rx="34" ry="12" fill="url(#vsh)" transform="rotate(14 1312 222)"/>
<path d="M1284.4 176.8L1304.2 163.1L1338.9 169.6L1322.6 186z" fill="#eee" fill-opacity=".93"/>
<path d="M1284.4 176.8L1322.6 186L1322.6 222.6L1286.6 212.8z" fill="#e9e9e9" fill-opacity=".93"/>
<path d="M1322.6 186L1338.9 169.6L1338.3 202.3L1322.6 222.6z" fill="#e2e2e2" fill-opacity=".93"/>
<path d="M1284.4 176.8L1304.2 163.1L1338.9 169.6L1322.6 186zM1322.6 186v36.6M1338.9 169.6L1338.3 202.3L1322.6 222.6" fill="none" stroke="#7a7a7a" stroke-width=".8" stroke-dasharray="6 2.5"/>
<path d="M1282.7 169.6L1286.6 212.8" stroke="#4be04b" stroke-width="1.7"/>
<path d="M1286.6 212.8L1328.4 225.6" stroke="#8a8af2" stroke-width="2.6"/>
<text transform="matrix(0.741 0.148 0 1 1295.2 202.7)" font-family="Liberation Sans,sans-serif" font-size="9" fill="#a2a2a2">LEFT</text>
<text transform="matrix(.42 -.42 .75 .14 1307.5 176.5)" font-family="Liberation Sans,sans-serif" font-size="8" fill="#a8a8a8">TOP</text>
<text transform="matrix(.3 -.42 0 1 1326.8 205)" font-family="Liberation Sans,sans-serif" font-size="7.5" fill="#a8a8a8">FRONT</text>
<text x="1278.5" y="167.3" font-family="Liberation Sans,sans-serif" font-size="10" fill="#62e062">Y</text>
<text x="1330.5" y="231.3" font-family="Liberation Sans,sans-serif" font-size="10.5" fill="#7a7aff">Z</text>
</svg>
<div class="abs" style="left:1042.8px;top:630.5px;width:318.2px;height:72px;background:linear-gradient(180deg,#e9e9e9,#d9d9d9 50%,#cbcbcb);border-radius:2px;box-shadow:0 0 1.5px rgba(0,0,0,.35)"></div>
<span class="t" style="left:1051.7px;top:641.8px;font-size:13px;line-height:17px;color:#111;transform:scaleX(0.9539);font-weight:700;font-family:'DejaVu Sans Condensed',sans-serif;">Scheduling Cloud Solve</span>
<span class="t" style="left:1051.7px;top:665.5px;font-size:11px;line-height:15px;color:#111;transform:scaleX(0.9552);font-family:'DejaVu Sans Condensed',sans-serif;">Scheduling of cloud solve for</span>
<span class="t" style="left:1191.8px;top:665.5px;font-size:11px;line-height:15px;color:#111;transform:scaleX(1.0059);font-weight:700;font-family:'DejaVu Sans Condensed',sans-serif;">Study 1 - Static Stress</span>
<span class="t" style="left:1321.0px;top:665.5px;font-size:11px;line-height:15px;color:#111;transform:scaleX(0.8090);font-family:'DejaVu Sans Condensed',sans-serif;">in</span>
<span class="t" style="left:1051.7px;top:678.7px;font-size:11px;line-height:15px;color:#111;transform:scaleX(1.0105);font-weight:700;font-family:'DejaVu Sans Condensed',sans-serif;">Yuneec Cardboard</span>
<span class="t" style="left:1157.5px;top:678.7px;font-size:11px;line-height:15px;color:#111;transform:scaleX(0.9635);font-family:'DejaVu Sans Condensed',sans-serif;">has successfully started.</span>
<div class="abs" style="left:4px;top:699px;width:300px;height:24px;background:#f0f0f0;border:1px solid #c9c9c9"></div>
<span class="t" style="left:29.5px;top:703.8px;font-size:11.5px;line-height:15.5px;color:#555;transform:scaleX(0.8393);">COMMENTS</span>
<svg style="left:280px;top:700px" width="26" height="22" viewBox="280 700 26 22"><circle cx="287.5" cy="711" r="4.3" fill="#222"/><path d="M285 711h5M287.5 708.5v5" stroke="#f0f0f0" stroke-width="1.3"/><path d="M299.5 705.5v10.5" stroke="#555" stroke-width="1"/><path d="M301.5 706.5v8.5" stroke="#aaa" stroke-width="1"/></svg>
<div class="abs" style="left:572px;top:700px;width:221.7px;height:23.5px;background:#f0f0f0"></div>
<svg style="left:572px;top:700px" width="222" height="24" viewBox="572 700 222 24">
<g fill="none" stroke="#333" stroke-width="1.2">
<path d="M583.5 705v14.5M581 707.5l2.5-3 2.5 3"/><path d="M586.5 709.5c3 .6 4.2 1.8 4.2 3 0 2.2-4 3.5-8.5 3.5-2 0-3.5-.2-5-.7"/><path d="M580 713.5l-3.2 1.7 2.8 2.3"/>
<path d="M608.5 708.5h15v11h-15z"/><path d="M610.5 708.5v-2.5l3.5-1.5 2 1.5 3-1.5v4"/><rect x="611.5" y="712" width="9" height="4.5" fill="#b9c4d6"/>
<path d="M638.5 719.5c-2-2-3.5-4.5-4.3-6.5.8-1 2-.6 3 .8v-7c0-1.3 1.8-1.3 1.8 0v-1.3c0-1.3 1.9-1.3 1.9 0v.5c0-1.3 1.9-1.3 1.9 0v1.2c0-1.2 1.8-1.2 1.8 0v5c1-1.8 2.3-2.4 3-1.6-.8 2.5-2.2 6-3.8 8.9z" fill="#f8f8f8" stroke-width="1"/>
<circle cx="666" cy="711.5" r="5" fill="#dfe9f5"/><path d="M669.7 715.2l4.3 4.3" stroke-width="2.2"/><path d="M672.5 706.5h4M674.5 704.5v4M672.5 710.5h4" stroke-width="1"/>
<rect x="686" y="704.5" width="13" height="13" stroke-dasharray="2 1.5" stroke-width="1"/><circle cx="692" cy="710.5" r="5.3" fill="#eef3fa"/><path d="M696 714.5l5 5" stroke-width="2.4"/>
<rect x="727.5" y="704.5" width="15" height="11" rx="1" fill="#f8f8f8"/><rect x="729.5" y="706.5" width="11" height="7" fill="#8faee0" stroke="#5b7fc0" stroke-width=".7"/><path d="M732 719h6l-1-3.3h-4z" fill="#ddd" stroke-width=".9"/>
</g>
<rect x="758.5" y="704.5" width="15.5" height="15" fill="#b6bac8" stroke="#444" stroke-width="1"/>
<path d="M762.3 704.5v15M766.2 704.5v15M770.1 704.5v15M758.5 708.3h15.5M758.5 712.1h15.5M758.5 715.9h15.5" stroke="#50545e" stroke-width=".9" fill="none"/>
<g fill="#222"><path d="M596.3 709.5h6l-3 4.2z"/><path d="M707.2 709.5h6l-3 4.2z"/><path d="M745.3 709.5h6l-3 4.2z"/><path d="M776.4 709.5h6l-3 4.2z"/></g>
</svg>
</body>
</html>
